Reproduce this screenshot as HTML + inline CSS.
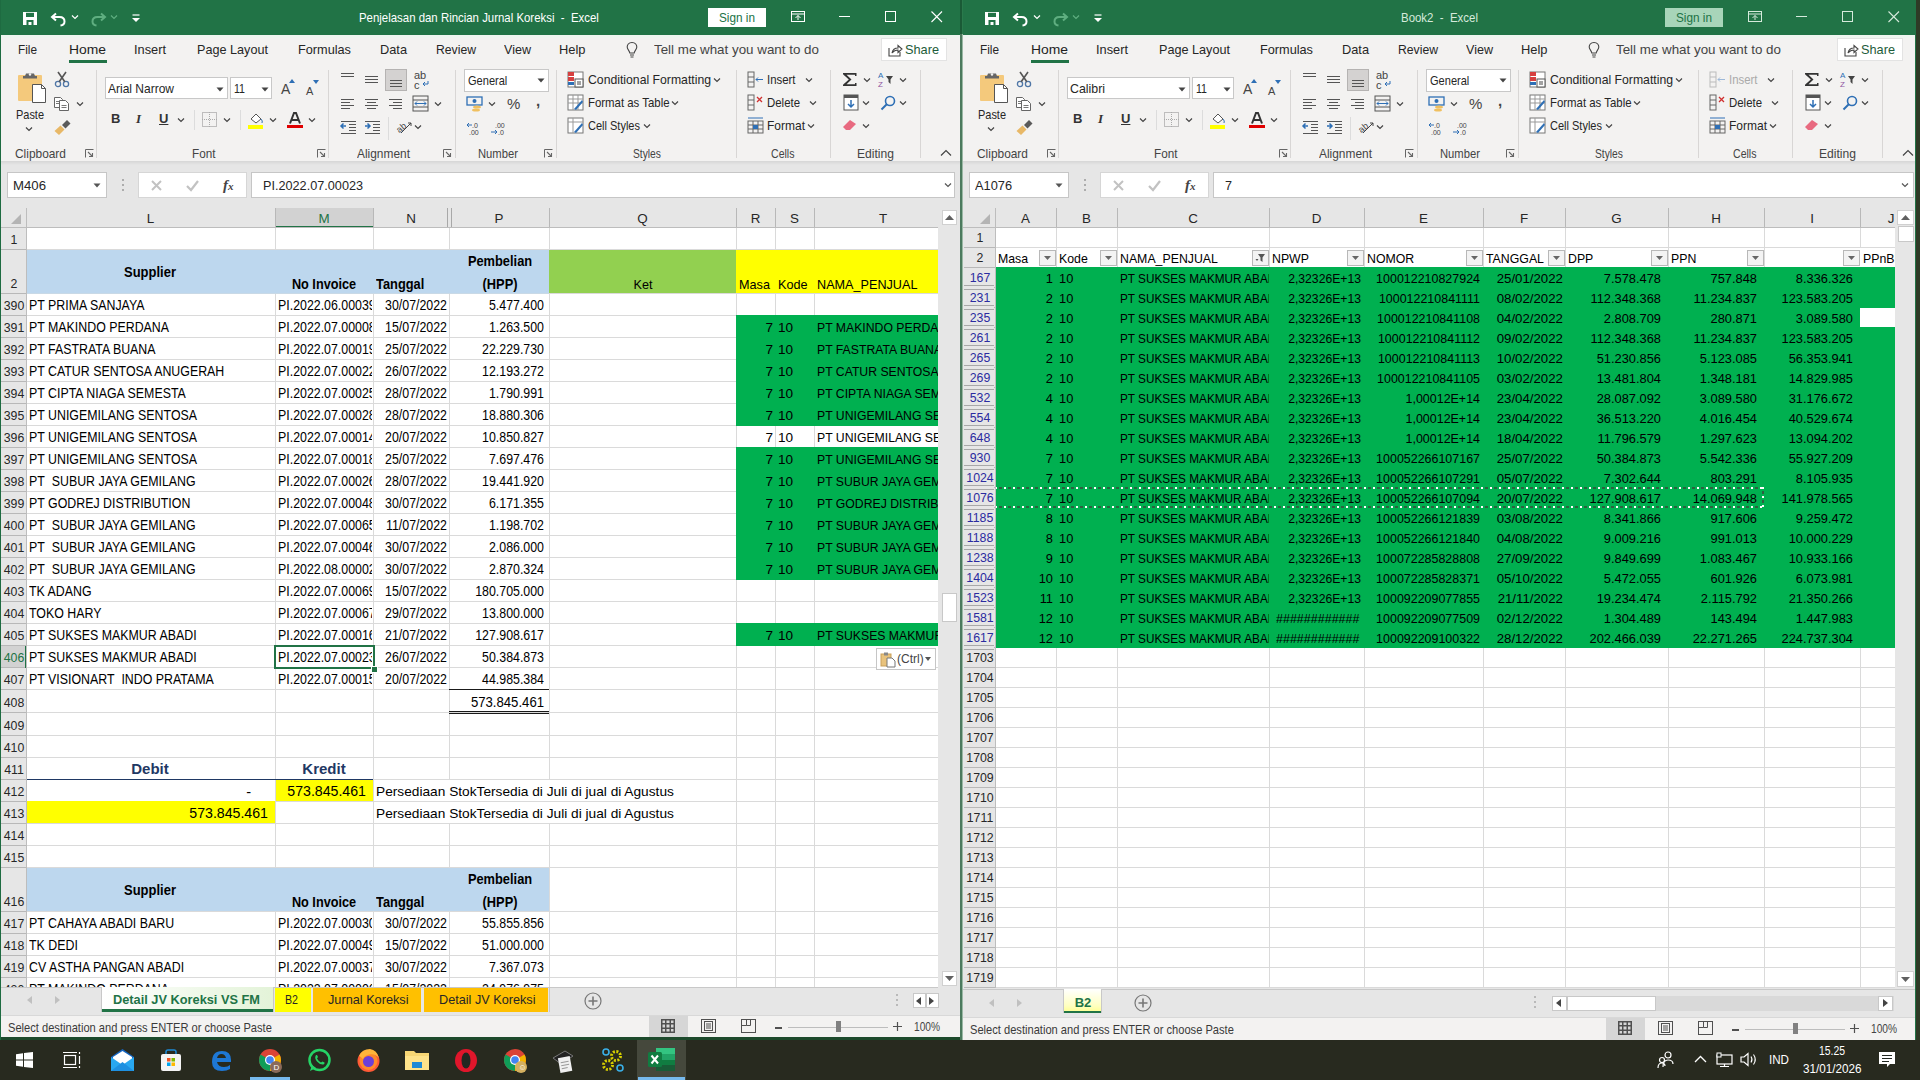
<!DOCTYPE html><html><head><meta charset="utf-8"><style>
html,body{margin:0;padding:0;}body{width:1920px;height:1080px;overflow:hidden;position:relative;background:#282a1f;font-family:"Liberation Sans",sans-serif;}
.a{position:absolute;white-space:nowrap;margin:0;}svg.a{overflow:visible;}
</style></head><body>
<div class="a" style="left:0px;top:0px;width:960px;height:1040px;background:#e6e6e6;"></div>
<div class="a" style="left:962px;top:0px;width:953px;height:1040px;background:#e6e6e6;"></div>
<div class="a" style="left:0px;top:0px;width:960px;height:35px;background:#217346;"></div>
<svg class="a" style="left:22px;top:11px;" width="16" height="15" viewBox="0 0 16 15"><path d="M1 1 H15 V14 H1Z" fill="#fff"/><path d="M4 1.8 H12 V6 H4Z" fill="#217346"/><path d="M4.5 9 H11.5 V14 H9.5 V11 H6.5 V14 H4.5Z" fill="#217346"/></svg>
<svg class="a" style="left:50px;top:11px;" width="17" height="15" viewBox="0 0 17 15"><path d="M6 2.5 L2 6 L6 9.5" stroke="#fff" stroke-width="2" fill="none"/><path d="M2.5 6 H9.5 Q14.5 6 14.5 10.5 Q14.5 14 10.5 14.5" stroke="#fff" stroke-width="2" fill="none"/></svg>
<svg class="a" style="left:71px;top:14px;" width="8" height="6" viewBox="0 0 8 6"><path d="M1 1.5 L4 4.5 L7 1.5" stroke="#fff" stroke-width="1.2" fill="none"/></svg>
<svg class="a" style="left:90px;top:11px;" width="17" height="15" viewBox="0 0 17 15"><path d="M11 2.5 L15 6 L11 9.5" stroke="#5fae80" stroke-width="2" fill="none"/><path d="M14.5 6 H7.5 Q2.5 6 2.5 10.5 Q2.5 14 6.5 14.5" stroke="#5fae80" stroke-width="2" fill="none"/></svg>
<svg class="a" style="left:110px;top:14px;" width="8" height="6" viewBox="0 0 8 6"><path d="M1 1.5 L4 4.5 L7 1.5" stroke="#5fae80" stroke-width="1.2" fill="none"/></svg>
<svg class="a" style="left:131px;top:14px;" width="10" height="9" viewBox="0 0 10 9"><path d="M1.5 1 H8.5" stroke="#fff" stroke-width="1.2"/><path d="M1 4 H9 L5 8Z" fill="#fff"/></svg>
<div class="a" style="top:7.50px;height:20px;line-height:20px;font-size:12.6px;color:#ffffff;left:359px;transform:scaleX(0.9066);transform-origin:0 50%;">Penjelasan dan Rincian Jurnal Koreksi&nbsp; -&nbsp; Excel</div>
<div class="a" style="left:708px;top:8px;width:58px;height:19px;background:#ffffff;"></div>
<div class="a" style="top:9.00px;height:18px;line-height:18px;font-size:13px;color:#217346;left:737px;transform-origin:0 50%;transform:scaleX(0.9057) translateX(-50%);">Sign in</div>
<svg class="a" style="left:790px;top:10px;" width="16" height="13" viewBox="0 0 16 13"><rect x="1.5" y="1.5" width="13" height="10" stroke="#ffffff" fill="none"/><path d="M1.5 4 H14.5" stroke="#ffffff"/><path d="M8 10 V5.5 M5.5 8 L8 5.5 L10.5 8" stroke="#ffffff" fill="none"/></svg>
<svg class="a" style="left:839px;top:16px;" width="12" height="2" viewBox="0 0 12 2"><rect x="0" y="0" width="11" height="1" fill="#ffffff"/></svg>
<svg class="a" style="left:885px;top:11px;" width="12" height="12" viewBox="0 0 12 12"><rect x="0.5" y="0.5" width="10" height="10" stroke="#ffffff" fill="none"/></svg>
<svg class="a" style="left:931px;top:11px;" width="12" height="12" viewBox="0 0 12 12"><path d="M0.5 0.5 L11 11 M11 0.5 L0.5 11" stroke="#ffffff" stroke-width="1.1"/></svg>
<div class="a" style="left:0px;top:35px;width:960px;height:126px;background:#F3F2F1;"></div>
<div class="a" style="left:0px;top:35px;width:960px;height:3px;background:#eef5f0;"></div>
<div class="a" style="top:40.30px;height:20px;line-height:20px;font-size:13.4px;color:#262626;left:18px;transform:scaleX(0.88);transform-origin:0 50%;">File</div>
<div class="a" style="top:40.30px;height:20px;line-height:20px;font-size:13.4px;color:#1e1e1e;left:68.5px;transform:scaleX(1.0352);transform-origin:0 50%;">Home</div>
<div class="a" style="top:40.30px;height:20px;line-height:20px;font-size:13.4px;color:#262626;left:134px;transform:scaleX(0.9549);transform-origin:0 50%;">Insert</div>
<div class="a" style="top:40.30px;height:20px;line-height:20px;font-size:13.4px;color:#262626;left:197px;transform:scaleX(0.9436);transform-origin:0 50%;">Page Layout</div>
<div class="a" style="top:40.30px;height:20px;line-height:20px;font-size:13.4px;color:#262626;left:298px;transform:scaleX(0.9491);transform-origin:0 50%;">Formulas</div>
<div class="a" style="top:40.30px;height:20px;line-height:20px;font-size:13.4px;color:#262626;left:380px;transform:scaleX(0.954);transform-origin:0 50%;">Data</div>
<div class="a" style="top:40.30px;height:20px;line-height:20px;font-size:13.4px;color:#262626;left:436px;transform:scaleX(0.9104);transform-origin:0 50%;">Review</div>
<div class="a" style="top:40.30px;height:20px;line-height:20px;font-size:13.4px;color:#262626;left:504px;transform:scaleX(0.9374);transform-origin:0 50%;">View</div>
<div class="a" style="top:40.30px;height:20px;line-height:20px;font-size:13.4px;color:#262626;left:559px;transform:scaleX(0.9616);transform-origin:0 50%;">Help</div>
<div class="a" style="left:69px;top:60px;width:38px;height:3px;background:#217346;"></div>
<svg class="a" style="left:626px;top:41px;" width="12" height="18" viewBox="0 0 12 18"><path d="M6 1.5 C2.5 1.5 1.2 4 1.2 6 C1.2 8.5 3.5 9.5 3.8 12 H8.2 C8.5 9.5 10.8 8.5 10.8 6 C10.8 4 9.5 1.5 6 1.5Z" stroke="#444" stroke-width="1.1" fill="none"/><path d="M4 14 H8 M4.5 16 H7.5" stroke="#444" stroke-width="1.1"/></svg>
<div class="a" style="top:40.30px;height:20px;line-height:20px;font-size:13.4px;color:#444;left:654px;transform:scaleX(0.9979);transform-origin:0 50%;">Tell me what you want to do</div>
<div class="a" style="left:881px;top:38px;width:66px;height:23px;background:#ffffff;border:1px solid #e3e3e3;box-sizing:border-box;"></div>
<svg class="a" style="left:887px;top:43px;" width="16" height="14" viewBox="0 0 16 14"><path d="M2 5 V13 H13 V9" stroke="#444" stroke-width="1.1" fill="none"/><path d="M5 10 Q6 5 11 5 V2.5 L15 6 L11 9.5 V7 Q7.5 7 5 10Z" stroke="#444" stroke-width="1.1" fill="none"/></svg>
<div class="a" style="top:40.30px;height:20px;line-height:20px;font-size:13.4px;color:#1d5c3a;left:905px;transform:scaleX(0.9509);transform-origin:0 50%;">Share</div>
<div class="a" style="left:96px;top:70px;width:1px;height:88px;background:#d8d6d5;"></div>
<div class="a" style="left:328px;top:70px;width:1px;height:88px;background:#d8d6d5;"></div>
<div class="a" style="left:455px;top:70px;width:1px;height:88px;background:#d8d6d5;"></div>
<div class="a" style="left:556px;top:70px;width:1px;height:88px;background:#d8d6d5;"></div>
<div class="a" style="left:736px;top:70px;width:1px;height:88px;background:#d8d6d5;"></div>
<div class="a" style="left:830px;top:70px;width:1px;height:88px;background:#d8d6d5;"></div>
<div class="a" style="left:920px;top:70px;width:1px;height:88px;background:#d8d6d5;"></div>
<div class="a" style="top:145.50px;height:16px;line-height:16px;font-size:12.2px;color:#444;left:15px;transform:scaleX(0.9767);transform-origin:0 50%;">Clipboard</div>
<div class="a" style="top:145.50px;height:16px;line-height:16px;font-size:12.2px;color:#444;left:192px;transform:scaleX(0.9627);transform-origin:0 50%;">Font</div>
<div class="a" style="top:145.50px;height:16px;line-height:16px;font-size:12.2px;color:#444;left:357px;transform:scaleX(0.977);transform-origin:0 50%;">Alignment</div>
<div class="a" style="top:145.50px;height:16px;line-height:16px;font-size:12.2px;color:#444;left:478px;transform:scaleX(0.9219);transform-origin:0 50%;">Number</div>
<div class="a" style="top:145.50px;height:16px;line-height:16px;font-size:12.2px;color:#444;left:632.5px;transform:scaleX(0.8428);transform-origin:0 50%;">Styles</div>
<div class="a" style="top:145.50px;height:16px;line-height:16px;font-size:12.2px;color:#444;left:771px;transform:scaleX(0.8666);transform-origin:0 50%;">Cells</div>
<div class="a" style="top:145.50px;height:16px;line-height:16px;font-size:12.2px;color:#444;left:857px;transform:scaleX(0.9919);transform-origin:0 50%;">Editing</div>
<svg class="a" style="left:85px;top:149px;" width="9" height="9" viewBox="0 0 9 9"><path d="M0.5 8.5 V0.5 H8.5" stroke="#666" stroke-width="1" fill="none"/><path d="M3 3 L7.5 7.5 M4 7.5 H7.5 V4" stroke="#666" stroke-width="1.1" fill="none"/></svg>
<svg class="a" style="left:317px;top:149px;" width="9" height="9" viewBox="0 0 9 9"><path d="M0.5 8.5 V0.5 H8.5" stroke="#666" stroke-width="1" fill="none"/><path d="M3 3 L7.5 7.5 M4 7.5 H7.5 V4" stroke="#666" stroke-width="1.1" fill="none"/></svg>
<svg class="a" style="left:443px;top:149px;" width="9" height="9" viewBox="0 0 9 9"><path d="M0.5 8.5 V0.5 H8.5" stroke="#666" stroke-width="1" fill="none"/><path d="M3 3 L7.5 7.5 M4 7.5 H7.5 V4" stroke="#666" stroke-width="1.1" fill="none"/></svg>
<svg class="a" style="left:544px;top:149px;" width="9" height="9" viewBox="0 0 9 9"><path d="M0.5 8.5 V0.5 H8.5" stroke="#666" stroke-width="1" fill="none"/><path d="M3 3 L7.5 7.5 M4 7.5 H7.5 V4" stroke="#666" stroke-width="1.1" fill="none"/></svg>
<svg class="a" style="left:940px;top:149px;" width="12" height="8" viewBox="0 0 12 8"><path d="M1 6.5 L6 1.5 L11 6.5" stroke="#444" stroke-width="1.2" fill="none"/></svg>
<svg class="a" style="left:17px;top:72px;" width="30" height="32" viewBox="0 0 30 32"><rect x="1" y="3" width="24" height="26" rx="1" fill="#f4c97c"/><path d="M9 1.5 H17 L18.5 5.5 H7.5Z" fill="#666"/><rect x="6" y="4" width="14" height="2.5" fill="#666"/><circle cx="13" cy="2.5" r="1.2" fill="#f3f2f1"/><path d="M15.5 12.5 H24.5 L28.5 16.5 V30.5 H15.5Z" fill="#fff" stroke="#555"/><path d="M24.5 12.5 V16.5 H28.5" fill="none" stroke="#555"/></svg>
<div class="a" style="top:107.00px;height:16px;line-height:16px;font-size:13px;color:#262626;left:16px;transform:scaleX(0.8423);transform-origin:0 50%;">Paste</div>
<svg class="a" style="left:25px;top:126px;" width="8" height="6" viewBox="0 0 8 6"><path d="M1 1.5 L4 4.5 L7 1.5" stroke="#444" stroke-width="1.2" fill="none"/></svg>
<svg class="a" style="left:54px;top:71px;" width="16" height="17" viewBox="0 0 16 17"><circle cx="4" cy="13" r="2.6" stroke="#4f76a6" stroke-width="1.3" fill="none"/><circle cx="12" cy="13" r="2.6" stroke="#4f76a6" stroke-width="1.3" fill="none"/><path d="M5.2 10.8 L12 1 M10.8 10.8 L4 1" stroke="#555" stroke-width="1.6"/></svg>
<svg class="a" style="left:53px;top:96px;" width="17" height="15" viewBox="0 0 17 15"><path d="M1.5 1.5 H7.5 L9.5 3.5 V11.5 H1.5Z" fill="#fff" stroke="#666"/><path d="M6.5 4.5 H12.5 L15.5 7.5 V14.5 H6.5Z" fill="#fff" stroke="#666"/><path d="M3 5.5 H6 M3 7.5 H6 M8.5 9.5 H13.5 M8.5 11.5 H13.5" stroke="#777"/></svg>
<svg class="a" style="left:76px;top:101px;" width="8" height="6" viewBox="0 0 8 6"><path d="M1 1.5 L4 4.5 L7 1.5" stroke="#444" stroke-width="1.2" fill="none"/></svg>
<svg class="a" style="left:53px;top:119px;" width="18" height="16" viewBox="0 0 18 16"><path d="M9 6 L14 1 L17.5 4.5 L12.5 9.5Z" fill="#5a5a5a"/><path d="M1.5 12 L7.5 6.5 L11.5 10.5 L6 16Z" fill="#e8b867"/></svg>
<div class="a" style="left:105px;top:77px;width:123px;height:22px;background:#fff;border:1px solid #c8c8c8;box-sizing:border-box;"></div>
<div class="a" style="top:80.00px;height:18px;line-height:18px;font-size:13px;color:#262626;left:108px;transform:scaleX(0.9229);transform-origin:0 50%;">Arial Narrow</div>
<svg class="a" style="left:216px;top:87px;" width="8" height="5" viewBox="0 0 8 5"><path d="M0.5 0.5 L7.5 0.5 L4 4.5Z" fill="#444"/></svg>
<div class="a" style="left:230px;top:77px;width:42px;height:22px;background:#fff;border:1px solid #c8c8c8;box-sizing:border-box;"></div>
<div class="a" style="top:80.00px;height:18px;line-height:18px;font-size:13px;color:#262626;left:234px;transform:scaleX(0.8152);transform-origin:0 50%;">11</div>
<svg class="a" style="left:261px;top:87px;" width="8" height="5" viewBox="0 0 8 5"><path d="M0.5 0.5 L7.5 0.5 L4 4.5Z" fill="#444"/></svg>
<div class="a" style="top:80.00px;height:18px;line-height:18px;font-size:14px;color:#444;left:281px;">A</div>
<svg class="a" style="left:289px;top:79px;" width="6" height="4" viewBox="0 0 6 4"><path d="M0 4 L3 0 L6 4Z" fill="#2e6fb5"/></svg>
<div class="a" style="top:83.00px;height:16px;line-height:16px;font-size:11px;color:#444;left:306px;">A</div>
<svg class="a" style="left:313px;top:80px;" width="6" height="4" viewBox="0 0 6 4"><path d="M0 0 L3 4 L6 0Z" fill="#2e6fb5"/></svg>
<div class="a" style="top:110.00px;height:18px;line-height:18px;font-size:13px;color:#333;font-weight:bold;left:111px;">B</div>
<div class="a" style="top:110.00px;height:18px;line-height:18px;font-size:13px;color:#333;left:136px;font-style:italic;font-family:Liberation Serif;font-weight:bold;">I</div>
<div class="a" style="top:110.00px;height:18px;line-height:18px;font-size:13px;color:#333;font-weight:bold;left:159px;text-decoration:underline;">U</div>
<svg class="a" style="left:177px;top:117px;" width="8" height="6" viewBox="0 0 8 6"><path d="M1 1.5 L4 4.5 L7 1.5" stroke="#444" stroke-width="1.2" fill="none"/></svg>
<div class="a" style="left:194px;top:110px;width:1px;height:20px;background:#dcdcdc;"></div>
<svg class="a" style="left:202px;top:112px;" width="15" height="15" viewBox="0 0 15 15"><rect x="0.5" y="0.5" width="14" height="14" fill="none" stroke="#888" stroke-dasharray="1 1"/><path d="M7.5 0 V15 M0 7.5 H15" stroke="#aaa" stroke-dasharray="1 1"/></svg>
<svg class="a" style="left:223px;top:117px;" width="8" height="6" viewBox="0 0 8 6"><path d="M1 1.5 L4 4.5 L7 1.5" stroke="#444" stroke-width="1.2" fill="none"/></svg>
<div class="a" style="left:240px;top:110px;width:1px;height:20px;background:#dcdcdc;"></div>
<svg class="a" style="left:247px;top:111px;" width="18" height="18" viewBox="0 0 18 18"><path d="M4 8 L9 3 L14 8 L9 12Z" fill="#fff" stroke="#555"/><path d="M14 8 Q16 10 15 12" stroke="#2e6fb5" fill="none"/><rect x="1" y="14" width="15" height="4" fill="#ffff00"/></svg>
<svg class="a" style="left:269px;top:117px;" width="8" height="6" viewBox="0 0 8 6"><path d="M1 1.5 L4 4.5 L7 1.5" stroke="#444" stroke-width="1.2" fill="none"/></svg>
<svg class="a" style="left:286px;top:111px;" width="18" height="18" viewBox="0 0 18 18"><path d="M4 12.5 L8 2 H10 L14 12.5 M6 9 H12" stroke="#333" stroke-width="2" fill="none"/><rect x="1" y="14" width="16" height="3" fill="#e00000"/></svg>
<svg class="a" style="left:308px;top:117px;" width="8" height="6" viewBox="0 0 8 6"><path d="M1 1.5 L4 4.5 L7 1.5" stroke="#444" stroke-width="1.2" fill="none"/></svg>
<svg class="a" style="left:340px;top:72px;" width="16" height="8" viewBox="0 0 16 8"><path d="M1 1.5 H14 M1 4.5 H14" stroke="#555"/></svg>
<svg class="a" style="left:364px;top:75px;" width="16" height="10" viewBox="0 0 16 10"><path d="M1 1.5 H14 M1 4.5 H14 M1 7.5 H14" stroke="#555"/></svg>
<div class="a" style="left:385px;top:69px;width:22px;height:22px;background:#d4d2d1;border:1px solid #b5b3b2;box-sizing:border-box;"></div>
<svg class="a" style="left:389px;top:79px;" width="14" height="10" viewBox="0 0 14 10"><path d="M1 1.5 H13 M1 4.5 H13 M1 7.5 H13" stroke="#555"/></svg>
<div class="a" style="top:69.00px;height:12px;line-height:12px;font-size:11px;color:#444;left:414px;">ab</div>
<div class="a" style="top:79.00px;height:12px;line-height:12px;font-size:11px;color:#444;left:414px;">c</div>
<svg class="a" style="left:422px;top:81px;" width="7" height="6" viewBox="0 0 7 6"><path d="M6 0 V3 H1 M3 1 L1 3 L3 5" stroke="#2e6fb5" fill="none"/></svg>
<svg class="a" style="left:340px;top:98px;" width="16" height="12" viewBox="0 0 16 12"><path d="M1 1.5 H14 M1 4.5 H10 M1 7.5 H14 M1 10.5 H10" stroke="#555"/></svg>
<svg class="a" style="left:364px;top:98px;" width="16" height="12" viewBox="0 0 16 12"><path d="M1 1.5 H14 M3 4.5 H12 M1 7.5 H14 M3 10.5 H12" stroke="#555"/></svg>
<svg class="a" style="left:388px;top:98px;" width="16" height="12" viewBox="0 0 16 12"><path d="M1 1.5 H14 M5 4.5 H14 M1 7.5 H14 M5 10.5 H14" stroke="#555"/></svg>
<svg class="a" style="left:412px;top:95px;" width="17" height="17" viewBox="0 0 17 17"><rect x="1" y="1" width="15" height="15" fill="none" stroke="#555"/><path d="M1 5 H16 M1 12 H16" stroke="#555"/><path d="M3 8.5 H14 M5 6.5 L3 8.5 L5 10.5 M12 6.5 L14 8.5 L12 10.5" stroke="#2e6fb5" fill="none"/></svg>
<svg class="a" style="left:434px;top:101px;" width="8" height="6" viewBox="0 0 8 6"><path d="M1 1.5 L4 4.5 L7 1.5" stroke="#444" stroke-width="1.2" fill="none"/></svg>
<svg class="a" style="left:340px;top:120px;" width="17" height="14" viewBox="0 0 17 14"><path d="M1 1.5 H16 M9 4.5 H16 M9 7.5 H16 M9 10.5 H16 M1 13.5 H16" stroke="#555"/><path d="M6 6 H1 M3.5 3.5 L1 6 L3.5 8.5" stroke="#2e6fb5" stroke-width="1.5" fill="none"/></svg>
<svg class="a" style="left:364px;top:120px;" width="17" height="14" viewBox="0 0 17 14"><path d="M1 1.5 H16 M9 4.5 H16 M9 7.5 H16 M9 10.5 H16 M1 13.5 H16" stroke="#555"/><path d="M1 6 H6 M3.5 3.5 L6 6 L3.5 8.5" stroke="#2e6fb5" stroke-width="1.5" fill="none"/></svg>
<div class="a" style="left:388px;top:117px;width:1px;height:23px;background:#dcdcdc;"></div>
<svg class="a" style="left:396px;top:119px;" width="18" height="15" viewBox="0 0 18 15"><text x="0" y="11" font-size="9" fill="#444" transform="rotate(-40 6 8)" font-family="Liberation Sans">ab</text><path d="M5 14 L15 4 M12 4 H15 V7" stroke="#444" fill="none"/></svg>
<svg class="a" style="left:414px;top:124px;" width="8" height="6" viewBox="0 0 8 6"><path d="M1 1.5 L4 4.5 L7 1.5" stroke="#444" stroke-width="1.2" fill="none"/></svg>
<div class="a" style="left:464px;top:69px;width:85px;height:23px;background:#fff;border:1px solid #c8c8c8;box-sizing:border-box;"></div>
<div class="a" style="top:72.00px;height:18px;line-height:18px;font-size:13px;color:#262626;left:467.5px;transform:scaleX(0.8498);transform-origin:0 50%;">General</div>
<svg class="a" style="left:537px;top:78px;" width="8" height="5" viewBox="0 0 8 5"><path d="M0.5 0.5 L7.5 0.5 L4 4.5Z" fill="#444"/></svg>
<svg class="a" style="left:466px;top:96px;" width="17" height="16" viewBox="0 0 17 16"><rect x="1" y="1" width="15" height="8" fill="none" stroke="#2e6fb5" stroke-width="1.3"/><circle cx="8.5" cy="5" r="2" fill="#2e6fb5"/><ellipse cx="11" cy="11" rx="4" ry="1.6" fill="#f0c060"/><ellipse cx="10" cy="14" rx="4" ry="1.6" fill="#f0c060"/></svg>
<svg class="a" style="left:488px;top:101px;" width="8" height="6" viewBox="0 0 8 6"><path d="M1 1.5 L4 4.5 L7 1.5" stroke="#444" stroke-width="1.2" fill="none"/></svg>
<div class="a" style="top:95.00px;height:18px;line-height:18px;font-size:15px;color:#444;left:507px;">%</div>
<div class="a" style="top:92.00px;height:18px;line-height:18px;font-size:15px;color:#444;font-weight:bold;left:536px;">,</div>
<svg class="a" style="left:466px;top:121px;" width="18" height="14" viewBox="0 0 18 14"><text x="6" y="6.5" font-size="7" fill="#444" font-family="Liberation Sans">.0</text><text x="3" y="13.5" font-size="7" fill="#444" font-family="Liberation Sans">.00</text><path d="M6 4 H1 M3 2 L1 4 L3 6" stroke="#2e6fb5" fill="none"/></svg>
<svg class="a" style="left:490px;top:121px;" width="18" height="14" viewBox="0 0 18 14"><text x="5" y="6.5" font-size="7" fill="#444" font-family="Liberation Sans">.00</text><text x="8" y="13.5" font-size="7" fill="#444" font-family="Liberation Sans">.0</text><path d="M1 11 H7 M5 9 L7 11 L5 13" stroke="#2e6fb5" fill="none"/></svg>
<svg class="a" style="left:567px;top:71px;" width="17" height="17" viewBox="0 0 17 17"><rect x="1" y="1" width="15" height="15" fill="#fff" stroke="#777"/><rect x="1" y="1" width="6" height="4" fill="#d64040"/><rect x="1" y="6" width="6" height="4" fill="#d64040"/><rect x="1" y="11" width="6" height="3" fill="#2e6fb5"/><rect x="8" y="8" width="8" height="8" fill="#fff" stroke="#555"/><path d="M10 11 H14 M10 13 H14" stroke="#444"/></svg>
<div class="a" style="top:71.00px;height:18px;line-height:18px;font-size:13px;color:#262626;left:587.5px;transform:scaleX(0.9405);transform-origin:0 50%;">Conditional Formatting</div>
<svg class="a" style="left:713px;top:77px;" width="8" height="6" viewBox="0 0 8 6"><path d="M1 1.5 L4 4.5 L7 1.5" stroke="#444" stroke-width="1.2" fill="none"/></svg>
<svg class="a" style="left:567px;top:94px;" width="17" height="17" viewBox="0 0 17 17"><rect x="1" y="1" width="15" height="15" fill="#fff" stroke="#777"/><path d="M1 5 H16 M1 9 H16 M6 1 V16 M11 1 V16" stroke="#999"/><path d="M7 15 L15 6 L16 8 L9 16Z" fill="#2e6fb5"/></svg>
<div class="a" style="top:94.00px;height:18px;line-height:18px;font-size:13px;color:#262626;left:587.5px;transform:scaleX(0.8767);transform-origin:0 50%;">Format as Table</div>
<svg class="a" style="left:671px;top:100px;" width="8" height="6" viewBox="0 0 8 6"><path d="M1 1.5 L4 4.5 L7 1.5" stroke="#444" stroke-width="1.2" fill="none"/></svg>
<svg class="a" style="left:567px;top:117px;" width="17" height="17" viewBox="0 0 17 17"><rect x="1" y="1" width="15" height="15" fill="#fff" stroke="#777"/><path d="M1 5 H16 M6 1 V16" stroke="#999"/><path d="M7 15 L15 6 L16 8 L9 16Z" fill="#2e6fb5"/></svg>
<div class="a" style="top:117.00px;height:18px;line-height:18px;font-size:13px;color:#262626;left:587.5px;transform:scaleX(0.8468);transform-origin:0 50%;">Cell Styles</div>
<svg class="a" style="left:643px;top:123px;" width="8" height="6" viewBox="0 0 8 6"><path d="M1 1.5 L4 4.5 L7 1.5" stroke="#444" stroke-width="1.2" fill="none"/></svg>
<svg class="a" style="left:747px;top:71px;" width="17" height="17" viewBox="0 0 17 17"><rect x="1" y="1" width="6" height="15" fill="none" stroke="#666"/><path d="M1 6 H7 M1 11 H7" stroke="#666"/><path d="M9 8.5 H16 M11 6.5 L9 8.5 L11 10.5" stroke="#2e6fb5" fill="none"/></svg>
<div class="a" style="top:71.00px;height:18px;line-height:18px;font-size:13px;color:#262626;left:767px;transform:scaleX(0.8766);transform-origin:0 50%;">Insert</div>
<svg class="a" style="left:805px;top:77px;" width="8" height="6" viewBox="0 0 8 6"><path d="M1 1.5 L4 4.5 L7 1.5" stroke="#444" stroke-width="1.2" fill="none"/></svg>
<svg class="a" style="left:747px;top:94px;" width="17" height="17" viewBox="0 0 17 17"><rect x="1" y="1" width="6" height="15" fill="none" stroke="#666"/><path d="M1 6 H7 M1 11 H7" stroke="#666"/><path d="M10 3 L15 8 M15 3 L10 8" stroke="#d03030" stroke-width="1.3"/></svg>
<div class="a" style="top:94.00px;height:18px;line-height:18px;font-size:13px;color:#262626;left:767px;transform:scaleX(0.8782);transform-origin:0 50%;">Delete</div>
<svg class="a" style="left:809px;top:100px;" width="8" height="6" viewBox="0 0 8 6"><path d="M1 1.5 L4 4.5 L7 1.5" stroke="#444" stroke-width="1.2" fill="none"/></svg>
<svg class="a" style="left:747px;top:117px;" width="17" height="17" viewBox="0 0 17 17"><rect x="1" y="4" width="15" height="12" fill="none" stroke="#666"/><path d="M1 8 H16 M1 12 H16 M6 4 V16 M11 4 V16" stroke="#666"/><rect x="6" y="8" width="5" height="4" fill="#2e6fb5"/><path d="M1 1 H16" stroke="#2e6fb5"/></svg>
<div class="a" style="top:117.00px;height:18px;line-height:18px;font-size:13px;color:#262626;left:767px;transform:scaleX(0.9231);transform-origin:0 50%;">Format</div>
<svg class="a" style="left:807px;top:123px;" width="8" height="6" viewBox="0 0 8 6"><path d="M1 1.5 L4 4.5 L7 1.5" stroke="#444" stroke-width="1.2" fill="none"/></svg>
<svg class="a" style="left:842px;top:72px;" width="16" height="15" viewBox="0 0 16 15"><path d="M1 1 H14.5 V4 H13 V2.8 H4.5 L9.5 7.5 L4.5 12.2 H13 V11 H14.5 V14 H1 V12.8 L6.8 7.5 L1 2.2Z" fill="#333"/></svg>
<svg class="a" style="left:863px;top:77px;" width="8" height="6" viewBox="0 0 8 6"><path d="M1 1.5 L4 4.5 L7 1.5" stroke="#444" stroke-width="1.2" fill="none"/></svg>
<svg class="a" style="left:877px;top:70px;" width="19" height="19" viewBox="0 0 19 19"><text x="1" y="8" font-size="8" fill="#2e6fb5" font-family="Liberation Sans">A</text><text x="1" y="17" font-size="8" fill="#9055a0" font-family="Liberation Sans">Z</text><path d="M9 6 H16 L13.5 9.5 V14 L11.5 12 V9.5Z" fill="#444"/></svg>
<svg class="a" style="left:899px;top:77px;" width="8" height="6" viewBox="0 0 8 6"><path d="M1 1.5 L4 4.5 L7 1.5" stroke="#444" stroke-width="1.2" fill="none"/></svg>
<svg class="a" style="left:843px;top:94px;" width="16" height="17" viewBox="0 0 16 17"><rect x="1" y="1" width="14" height="15" fill="#fff" stroke="#555"/><rect x="1" y="1" width="14" height="3" fill="#555"/><path d="M8 6 V13 M5 10 L8 13 L11 10" stroke="#2e6fb5" stroke-width="1.5" fill="none"/></svg>
<svg class="a" style="left:862px;top:100px;" width="8" height="6" viewBox="0 0 8 6"><path d="M1 1.5 L4 4.5 L7 1.5" stroke="#444" stroke-width="1.2" fill="none"/></svg>
<svg class="a" style="left:880px;top:95px;" width="16" height="16" viewBox="0 0 16 16"><circle cx="10" cy="6" r="4.5" stroke="#2e6fb5" stroke-width="1.6" fill="none"/><path d="M7 9 L1.5 14.5" stroke="#2e6fb5" stroke-width="2"/></svg>
<svg class="a" style="left:899px;top:100px;" width="8" height="6" viewBox="0 0 8 6"><path d="M1 1.5 L4 4.5 L7 1.5" stroke="#444" stroke-width="1.2" fill="none"/></svg>
<svg class="a" style="left:842px;top:118px;" width="16" height="13" viewBox="0 0 16 13"><path d="M1 9 L8 2 L14 6 L8 12 H4Z" fill="#e86a80"/></svg>
<svg class="a" style="left:862px;top:123px;" width="8" height="6" viewBox="0 0 8 6"><path d="M1 1.5 L4 4.5 L7 1.5" stroke="#444" stroke-width="1.2" fill="none"/></svg>
<div class="a" style="left:0px;top:161px;width:960px;height:47px;background:#e6e6e6;"></div>
<div class="a" style="left:0px;top:161px;width:960px;height:4px;background:linear-gradient(#d6d6d6,#e6e6e6);"></div>
<div class="a" style="left:7px;top:172px;width:100px;height:26px;background:#fff;border:1px solid #c6c6c6;box-sizing:border-box;"></div>
<div class="a" style="top:177.00px;height:18px;line-height:18px;font-size:13px;color:#262626;left:13px;transform:scaleX(1.0149);transform-origin:0 50%;">M406</div>
<svg class="a" style="left:93px;top:183px;" width="8" height="5" viewBox="0 0 8 5"><path d="M0.5 0.5 L7.5 0.5 L4 4.5Z" fill="#555"/></svg>
<svg class="a" style="left:121px;top:178px;" width="4" height="16" viewBox="0 0 4 16"><circle cx="2" cy="2" r="1" fill="#999"/><circle cx="2" cy="7" r="1" fill="#999"/><circle cx="2" cy="12" r="1" fill="#999"/></svg>
<div class="a" style="left:138px;top:172px;width:109px;height:26px;background:#fff;border:1px solid #d6d6d6;box-sizing:border-box;"></div>
<svg class="a" style="left:151px;top:180px;" width="11" height="11" viewBox="0 0 11 11"><path d="M1 1 L10 10 M10 1 L1 10" stroke="#c2c2c2" stroke-width="2"/></svg>
<svg class="a" style="left:186px;top:180px;" width="13" height="11" viewBox="0 0 13 11"><path d="M1 6 L5 10 L12 1" stroke="#c2c2c2" stroke-width="2.2" fill="none"/></svg>
<div class="a" style="top:176.00px;height:18px;line-height:18px;font-size:15px;color:#444;font-family:Liberation Serif;left:223px;"><b><i>f</i><span style="font-size:11px"><i>x</i></span></b></div>
<div class="a" style="left:251px;top:172px;width:704px;height:26px;background:#fff;border:1px solid #c6c6c6;box-sizing:border-box;"></div>
<div class="a" style="top:177.00px;height:18px;line-height:18px;font-size:13px;color:#262626;left:263px;transform:scaleX(0.9743);transform-origin:0 50%;">PI.2022.07.00023</div>
<svg class="a" style="left:944px;top:182px;" width="8" height="6" viewBox="0 0 8 6"><path d="M1 1.5 L4 4.5 L7 1.5" stroke="#555" stroke-width="1.2" fill="none"/></svg>
<div class="a" style="left:26px;top:228px;width:912px;height:759px;background:#ffffff;"></div>
<div class="a" style="left:26px;top:249px;width:912px;height:1px;background:#dadada;"></div>
<div class="a" style="left:26px;top:293px;width:912px;height:1px;background:#dadada;"></div>
<div class="a" style="left:26px;top:315px;width:912px;height:1px;background:#dadada;"></div>
<div class="a" style="left:26px;top:337px;width:912px;height:1px;background:#dadada;"></div>
<div class="a" style="left:26px;top:359px;width:912px;height:1px;background:#dadada;"></div>
<div class="a" style="left:26px;top:381px;width:912px;height:1px;background:#dadada;"></div>
<div class="a" style="left:26px;top:403px;width:912px;height:1px;background:#dadada;"></div>
<div class="a" style="left:26px;top:425px;width:912px;height:1px;background:#dadada;"></div>
<div class="a" style="left:26px;top:447px;width:912px;height:1px;background:#dadada;"></div>
<div class="a" style="left:26px;top:469px;width:912px;height:1px;background:#dadada;"></div>
<div class="a" style="left:26px;top:491px;width:912px;height:1px;background:#dadada;"></div>
<div class="a" style="left:26px;top:513px;width:912px;height:1px;background:#dadada;"></div>
<div class="a" style="left:26px;top:535px;width:912px;height:1px;background:#dadada;"></div>
<div class="a" style="left:26px;top:557px;width:912px;height:1px;background:#dadada;"></div>
<div class="a" style="left:26px;top:579px;width:912px;height:1px;background:#dadada;"></div>
<div class="a" style="left:26px;top:601px;width:912px;height:1px;background:#dadada;"></div>
<div class="a" style="left:26px;top:623px;width:912px;height:1px;background:#dadada;"></div>
<div class="a" style="left:26px;top:645px;width:912px;height:1px;background:#dadada;"></div>
<div class="a" style="left:26px;top:667px;width:912px;height:1px;background:#dadada;"></div>
<div class="a" style="left:26px;top:689px;width:912px;height:1px;background:#dadada;"></div>
<div class="a" style="left:26px;top:712px;width:912px;height:1px;background:#dadada;"></div>
<div class="a" style="left:26px;top:735px;width:912px;height:1px;background:#dadada;"></div>
<div class="a" style="left:26px;top:757px;width:912px;height:1px;background:#dadada;"></div>
<div class="a" style="left:26px;top:779px;width:912px;height:1px;background:#dadada;"></div>
<div class="a" style="left:26px;top:801px;width:912px;height:1px;background:#dadada;"></div>
<div class="a" style="left:26px;top:823px;width:912px;height:1px;background:#dadada;"></div>
<div class="a" style="left:26px;top:845px;width:912px;height:1px;background:#dadada;"></div>
<div class="a" style="left:26px;top:867px;width:912px;height:1px;background:#dadada;"></div>
<div class="a" style="left:26px;top:911px;width:912px;height:1px;background:#dadada;"></div>
<div class="a" style="left:26px;top:933px;width:912px;height:1px;background:#dadada;"></div>
<div class="a" style="left:26px;top:955px;width:912px;height:1px;background:#dadada;"></div>
<div class="a" style="left:26px;top:977px;width:912px;height:1px;background:#dadada;"></div>
<div class="a" style="left:26px;top:999px;width:912px;height:1px;background:#dadada;"></div>
<div class="a" style="left:275px;top:228px;width:1px;height:759px;background:#dadada;"></div>
<div class="a" style="left:373px;top:228px;width:1px;height:759px;background:#dadada;"></div>
<div class="a" style="left:449px;top:228px;width:1px;height:759px;background:#dadada;"></div>
<div class="a" style="left:549px;top:228px;width:1px;height:759px;background:#dadada;"></div>
<div class="a" style="left:736px;top:228px;width:1px;height:759px;background:#dadada;"></div>
<div class="a" style="left:775px;top:228px;width:1px;height:759px;background:#dadada;"></div>
<div class="a" style="left:814px;top:228px;width:1px;height:759px;background:#dadada;"></div>
<div class="a" style="left:938px;top:228px;width:1px;height:759px;background:#dadada;"></div>
<div class="a" style="left:27px;top:250px;width:522px;height:43px;background:#bdd7ee;"></div>
<div class="a" style="left:549px;top:250px;width:187px;height:43px;background:#92d050;"></div>
<div class="a" style="left:736px;top:250px;width:202px;height:43px;background:#ffff00;"></div>
<div class="a" style="left:26px;top:293px;width:523px;height:1px;background:#c9d9e6;"></div>
<div class="a" style="left:736px;top:315px;width:202px;height:23px;background:#00b050;"></div>
<div class="a" style="left:736px;top:337px;width:202px;height:23px;background:#00b050;"></div>
<div class="a" style="left:736px;top:359px;width:202px;height:23px;background:#00b050;"></div>
<div class="a" style="left:736px;top:381px;width:202px;height:23px;background:#00b050;"></div>
<div class="a" style="left:736px;top:403px;width:202px;height:23px;background:#00b050;"></div>
<div class="a" style="left:736px;top:447px;width:202px;height:23px;background:#00b050;"></div>
<div class="a" style="left:736px;top:469px;width:202px;height:23px;background:#00b050;"></div>
<div class="a" style="left:736px;top:491px;width:202px;height:23px;background:#00b050;"></div>
<div class="a" style="left:736px;top:513px;width:202px;height:23px;background:#00b050;"></div>
<div class="a" style="left:736px;top:535px;width:202px;height:23px;background:#00b050;"></div>
<div class="a" style="left:736px;top:557px;width:202px;height:23px;background:#00b050;"></div>
<div class="a" style="left:736px;top:623px;width:202px;height:23px;background:#00b050;"></div>
<div class="a" style="left:374px;top:780px;width:362px;height:21px;background:#ffffff;"></div>
<div class="a" style="left:374px;top:802px;width:362px;height:21px;background:#ffffff;"></div>
<div class="a" style="left:276px;top:780px;width:97px;height:21px;background:#ffff00;"></div>
<div class="a" style="left:27px;top:801px;width:248px;height:22px;background:#ffff00;"></div>
<div class="a" style="left:27px;top:868px;width:522px;height:43px;background:#bdd7ee;"></div>
<div class="a" style="left:0;top:228px;width:938px;height:759px;overflow:hidden;">
<div class="a" style="left:0;top:-228px;width:938px;height:1080px;">
<div class="a" style="top:262.00px;height:20px;line-height:20px;font-size:14.6px;color:#000000;font-weight:bold;left:150px;transform-origin:0 50%;transform:scaleX(0.89) translateX(-50%);">Supplier</div>
<div class="a" style="top:273.50px;height:20px;line-height:20px;font-size:14.6px;color:#000000;font-weight:bold;left:324px;transform-origin:0 50%;transform:scaleX(0.87) translateX(-50%);">No Invoice</div>
<div class="a" style="top:273.50px;height:20px;line-height:20px;font-size:14.6px;color:#000000;font-weight:bold;left:376px;transform:scaleX(0.88);transform-origin:0 50%;">Tanggal</div>
<div class="a" style="top:251.00px;height:20px;line-height:20px;font-size:14.6px;color:#000000;font-weight:bold;left:500px;transform-origin:0 50%;transform:scaleX(0.88) translateX(-50%);">Pembelian</div>
<div class="a" style="top:273.50px;height:20px;line-height:20px;font-size:14.6px;color:#000000;font-weight:bold;left:500px;transform-origin:0 50%;transform:scaleX(0.88) translateX(-50%);">(HPP)</div>
<div class="a" style="top:275.00px;height:20px;line-height:20px;font-size:13.6px;color:#000000;left:643px;transform-origin:0 50%;transform:scaleX(0.93) translateX(-50%);">Ket</div>
<div class="a" style="top:275.00px;height:20px;line-height:20px;font-size:13.6px;color:#000000;left:739px;transform:scaleX(0.93);transform-origin:0 50%;">Masa</div>
<div class="a" style="top:275.00px;height:20px;line-height:20px;font-size:13.6px;color:#000000;left:778px;transform:scaleX(0.93);transform-origin:0 50%;">Kode</div>
<div class="a" style="top:275.00px;height:20px;line-height:20px;font-size:13.6px;color:#000000;left:817px;transform:scaleX(0.93);transform-origin:0 50%;">NAMA_PENJUAL</div>
<div class="a" style="top:295.00px;height:20px;line-height:20px;font-size:14.6px;color:#000000;left:29px;transform:scaleX(0.848);transform-origin:0 50%;">PT PRIMA SANJAYA</div>
<div class="a" style="left:275px;top:294px;width:97px;height:22px;overflow:hidden;">
<div class="a" style="left:3px;top:0;height:22px;line-height:22px;font-size:14.6px;color:#000000;transform:scaleX(0.848);transform-origin:0 50%;">PI.2022.06.00039</div></div>
<div class="a" style="top:295.00px;height:20px;line-height:20px;font-size:14.6px;color:#000000;left:446.5px;transform-origin:0 50%;transform:scaleX(0.848) translateX(-100%);">30/07/2022</div>
<div class="a" style="top:295.00px;height:20px;line-height:20px;font-size:14.6px;color:#000000;left:543.5px;transform-origin:0 50%;transform:scaleX(0.848) translateX(-100%);">5.477.400</div>
<div class="a" style="top:317.00px;height:20px;line-height:20px;font-size:14.6px;color:#000000;left:29px;transform:scaleX(0.848);transform-origin:0 50%;">PT MAKINDO PERDANA</div>
<div class="a" style="left:275px;top:316px;width:97px;height:22px;overflow:hidden;">
<div class="a" style="left:3px;top:0;height:22px;line-height:22px;font-size:14.6px;color:#000000;transform:scaleX(0.848);transform-origin:0 50%;">PI.2022.07.00008</div></div>
<div class="a" style="top:317.00px;height:20px;line-height:20px;font-size:14.6px;color:#000000;left:446.5px;transform-origin:0 50%;transform:scaleX(0.848) translateX(-100%);">15/07/2022</div>
<div class="a" style="top:317.00px;height:20px;line-height:20px;font-size:14.6px;color:#000000;left:543.5px;transform-origin:0 50%;transform:scaleX(0.848) translateX(-100%);">1.263.500</div>
<div class="a" style="top:339.00px;height:20px;line-height:20px;font-size:14.6px;color:#000000;left:29px;transform:scaleX(0.848);transform-origin:0 50%;">PT FASTRATA BUANA</div>
<div class="a" style="left:275px;top:338px;width:97px;height:22px;overflow:hidden;">
<div class="a" style="left:3px;top:0;height:22px;line-height:22px;font-size:14.6px;color:#000000;transform:scaleX(0.848);transform-origin:0 50%;">PI.2022.07.00019</div></div>
<div class="a" style="top:339.00px;height:20px;line-height:20px;font-size:14.6px;color:#000000;left:446.5px;transform-origin:0 50%;transform:scaleX(0.848) translateX(-100%);">25/07/2022</div>
<div class="a" style="top:339.00px;height:20px;line-height:20px;font-size:14.6px;color:#000000;left:543.5px;transform-origin:0 50%;transform:scaleX(0.848) translateX(-100%);">22.229.730</div>
<div class="a" style="top:361.00px;height:20px;line-height:20px;font-size:14.6px;color:#000000;left:29px;transform:scaleX(0.848);transform-origin:0 50%;">PT CATUR SENTOSA ANUGERAH</div>
<div class="a" style="left:275px;top:360px;width:97px;height:22px;overflow:hidden;">
<div class="a" style="left:3px;top:0;height:22px;line-height:22px;font-size:14.6px;color:#000000;transform:scaleX(0.848);transform-origin:0 50%;">PI.2022.07.00022</div></div>
<div class="a" style="top:361.00px;height:20px;line-height:20px;font-size:14.6px;color:#000000;left:446.5px;transform-origin:0 50%;transform:scaleX(0.848) translateX(-100%);">26/07/2022</div>
<div class="a" style="top:361.00px;height:20px;line-height:20px;font-size:14.6px;color:#000000;left:543.5px;transform-origin:0 50%;transform:scaleX(0.848) translateX(-100%);">12.193.272</div>
<div class="a" style="top:383.00px;height:20px;line-height:20px;font-size:14.6px;color:#000000;left:29px;transform:scaleX(0.848);transform-origin:0 50%;">PT CIPTA NIAGA SEMESTA</div>
<div class="a" style="left:275px;top:382px;width:97px;height:22px;overflow:hidden;">
<div class="a" style="left:3px;top:0;height:22px;line-height:22px;font-size:14.6px;color:#000000;transform:scaleX(0.848);transform-origin:0 50%;">PI.2022.07.00025</div></div>
<div class="a" style="top:383.00px;height:20px;line-height:20px;font-size:14.6px;color:#000000;left:446.5px;transform-origin:0 50%;transform:scaleX(0.848) translateX(-100%);">28/07/2022</div>
<div class="a" style="top:383.00px;height:20px;line-height:20px;font-size:14.6px;color:#000000;left:543.5px;transform-origin:0 50%;transform:scaleX(0.848) translateX(-100%);">1.790.991</div>
<div class="a" style="top:405.00px;height:20px;line-height:20px;font-size:14.6px;color:#000000;left:29px;transform:scaleX(0.848);transform-origin:0 50%;">PT UNIGEMILANG SENTOSA</div>
<div class="a" style="left:275px;top:404px;width:97px;height:22px;overflow:hidden;">
<div class="a" style="left:3px;top:0;height:22px;line-height:22px;font-size:14.6px;color:#000000;transform:scaleX(0.848);transform-origin:0 50%;">PI.2022.07.00028</div></div>
<div class="a" style="top:405.00px;height:20px;line-height:20px;font-size:14.6px;color:#000000;left:446.5px;transform-origin:0 50%;transform:scaleX(0.848) translateX(-100%);">28/07/2022</div>
<div class="a" style="top:405.00px;height:20px;line-height:20px;font-size:14.6px;color:#000000;left:543.5px;transform-origin:0 50%;transform:scaleX(0.848) translateX(-100%);">18.880.306</div>
<div class="a" style="top:427.00px;height:20px;line-height:20px;font-size:14.6px;color:#000000;left:29px;transform:scaleX(0.848);transform-origin:0 50%;">PT UNIGEMILANG SENTOSA</div>
<div class="a" style="left:275px;top:426px;width:97px;height:22px;overflow:hidden;">
<div class="a" style="left:3px;top:0;height:22px;line-height:22px;font-size:14.6px;color:#000000;transform:scaleX(0.848);transform-origin:0 50%;">PI.2022.07.00014</div></div>
<div class="a" style="top:427.00px;height:20px;line-height:20px;font-size:14.6px;color:#000000;left:446.5px;transform-origin:0 50%;transform:scaleX(0.848) translateX(-100%);">20/07/2022</div>
<div class="a" style="top:427.00px;height:20px;line-height:20px;font-size:14.6px;color:#000000;left:543.5px;transform-origin:0 50%;transform:scaleX(0.848) translateX(-100%);">10.850.827</div>
<div class="a" style="top:449.00px;height:20px;line-height:20px;font-size:14.6px;color:#000000;left:29px;transform:scaleX(0.848);transform-origin:0 50%;">PT UNIGEMILANG SENTOSA</div>
<div class="a" style="left:275px;top:448px;width:97px;height:22px;overflow:hidden;">
<div class="a" style="left:3px;top:0;height:22px;line-height:22px;font-size:14.6px;color:#000000;transform:scaleX(0.848);transform-origin:0 50%;">PI.2022.07.00018</div></div>
<div class="a" style="top:449.00px;height:20px;line-height:20px;font-size:14.6px;color:#000000;left:446.5px;transform-origin:0 50%;transform:scaleX(0.848) translateX(-100%);">25/07/2022</div>
<div class="a" style="top:449.00px;height:20px;line-height:20px;font-size:14.6px;color:#000000;left:543.5px;transform-origin:0 50%;transform:scaleX(0.848) translateX(-100%);">7.697.476</div>
<div class="a" style="top:471.00px;height:20px;line-height:20px;font-size:14.6px;color:#000000;left:29px;transform:scaleX(0.848);transform-origin:0 50%;">PT&nbsp; SUBUR JAYA GEMILANG</div>
<div class="a" style="left:275px;top:470px;width:97px;height:22px;overflow:hidden;">
<div class="a" style="left:3px;top:0;height:22px;line-height:22px;font-size:14.6px;color:#000000;transform:scaleX(0.848);transform-origin:0 50%;">PI.2022.07.00026</div></div>
<div class="a" style="top:471.00px;height:20px;line-height:20px;font-size:14.6px;color:#000000;left:446.5px;transform-origin:0 50%;transform:scaleX(0.848) translateX(-100%);">28/07/2022</div>
<div class="a" style="top:471.00px;height:20px;line-height:20px;font-size:14.6px;color:#000000;left:543.5px;transform-origin:0 50%;transform:scaleX(0.848) translateX(-100%);">19.441.920</div>
<div class="a" style="top:493.00px;height:20px;line-height:20px;font-size:14.6px;color:#000000;left:29px;transform:scaleX(0.848);transform-origin:0 50%;">PT GODREJ DISTRIBUTION</div>
<div class="a" style="left:275px;top:492px;width:97px;height:22px;overflow:hidden;">
<div class="a" style="left:3px;top:0;height:22px;line-height:22px;font-size:14.6px;color:#000000;transform:scaleX(0.848);transform-origin:0 50%;">PI.2022.07.00048</div></div>
<div class="a" style="top:493.00px;height:20px;line-height:20px;font-size:14.6px;color:#000000;left:446.5px;transform-origin:0 50%;transform:scaleX(0.848) translateX(-100%);">30/07/2022</div>
<div class="a" style="top:493.00px;height:20px;line-height:20px;font-size:14.6px;color:#000000;left:543.5px;transform-origin:0 50%;transform:scaleX(0.848) translateX(-100%);">6.171.355</div>
<div class="a" style="top:515.00px;height:20px;line-height:20px;font-size:14.6px;color:#000000;left:29px;transform:scaleX(0.848);transform-origin:0 50%;">PT&nbsp; SUBUR JAYA GEMILANG</div>
<div class="a" style="left:275px;top:514px;width:97px;height:22px;overflow:hidden;">
<div class="a" style="left:3px;top:0;height:22px;line-height:22px;font-size:14.6px;color:#000000;transform:scaleX(0.848);transform-origin:0 50%;">PI.2022.07.00065</div></div>
<div class="a" style="top:515.00px;height:20px;line-height:20px;font-size:14.6px;color:#000000;left:446.5px;transform-origin:0 50%;transform:scaleX(0.848) translateX(-100%);">11/07/2022</div>
<div class="a" style="top:515.00px;height:20px;line-height:20px;font-size:14.6px;color:#000000;left:543.5px;transform-origin:0 50%;transform:scaleX(0.848) translateX(-100%);">1.198.702</div>
<div class="a" style="top:537.00px;height:20px;line-height:20px;font-size:14.6px;color:#000000;left:29px;transform:scaleX(0.848);transform-origin:0 50%;">PT&nbsp; SUBUR JAYA GEMILANG</div>
<div class="a" style="left:275px;top:536px;width:97px;height:22px;overflow:hidden;">
<div class="a" style="left:3px;top:0;height:22px;line-height:22px;font-size:14.6px;color:#000000;transform:scaleX(0.848);transform-origin:0 50%;">PI.2022.07.00046</div></div>
<div class="a" style="top:537.00px;height:20px;line-height:20px;font-size:14.6px;color:#000000;left:446.5px;transform-origin:0 50%;transform:scaleX(0.848) translateX(-100%);">30/07/2022</div>
<div class="a" style="top:537.00px;height:20px;line-height:20px;font-size:14.6px;color:#000000;left:543.5px;transform-origin:0 50%;transform:scaleX(0.848) translateX(-100%);">2.086.000</div>
<div class="a" style="top:559.00px;height:20px;line-height:20px;font-size:14.6px;color:#000000;left:29px;transform:scaleX(0.848);transform-origin:0 50%;">PT&nbsp; SUBUR JAYA GEMILANG</div>
<div class="a" style="left:275px;top:558px;width:97px;height:22px;overflow:hidden;">
<div class="a" style="left:3px;top:0;height:22px;line-height:22px;font-size:14.6px;color:#000000;transform:scaleX(0.848);transform-origin:0 50%;">PI.2022.08.00002</div></div>
<div class="a" style="top:559.00px;height:20px;line-height:20px;font-size:14.6px;color:#000000;left:446.5px;transform-origin:0 50%;transform:scaleX(0.848) translateX(-100%);">30/07/2022</div>
<div class="a" style="top:559.00px;height:20px;line-height:20px;font-size:14.6px;color:#000000;left:543.5px;transform-origin:0 50%;transform:scaleX(0.848) translateX(-100%);">2.870.324</div>
<div class="a" style="top:581.00px;height:20px;line-height:20px;font-size:14.6px;color:#000000;left:29px;transform:scaleX(0.848);transform-origin:0 50%;">TK ADANG</div>
<div class="a" style="left:275px;top:580px;width:97px;height:22px;overflow:hidden;">
<div class="a" style="left:3px;top:0;height:22px;line-height:22px;font-size:14.6px;color:#000000;transform:scaleX(0.848);transform-origin:0 50%;">PI.2022.07.00069</div></div>
<div class="a" style="top:581.00px;height:20px;line-height:20px;font-size:14.6px;color:#000000;left:446.5px;transform-origin:0 50%;transform:scaleX(0.848) translateX(-100%);">15/07/2022</div>
<div class="a" style="top:581.00px;height:20px;line-height:20px;font-size:14.6px;color:#000000;left:543.5px;transform-origin:0 50%;transform:scaleX(0.848) translateX(-100%);">180.705.000</div>
<div class="a" style="top:603.00px;height:20px;line-height:20px;font-size:14.6px;color:#000000;left:29px;transform:scaleX(0.848);transform-origin:0 50%;">TOKO HARY</div>
<div class="a" style="left:275px;top:602px;width:97px;height:22px;overflow:hidden;">
<div class="a" style="left:3px;top:0;height:22px;line-height:22px;font-size:14.6px;color:#000000;transform:scaleX(0.848);transform-origin:0 50%;">PI.2022.07.00067</div></div>
<div class="a" style="top:603.00px;height:20px;line-height:20px;font-size:14.6px;color:#000000;left:446.5px;transform-origin:0 50%;transform:scaleX(0.848) translateX(-100%);">29/07/2022</div>
<div class="a" style="top:603.00px;height:20px;line-height:20px;font-size:14.6px;color:#000000;left:543.5px;transform-origin:0 50%;transform:scaleX(0.848) translateX(-100%);">13.800.000</div>
<div class="a" style="top:625.00px;height:20px;line-height:20px;font-size:14.6px;color:#000000;left:29px;transform:scaleX(0.848);transform-origin:0 50%;">PT SUKSES MAKMUR ABADI</div>
<div class="a" style="left:275px;top:624px;width:97px;height:22px;overflow:hidden;">
<div class="a" style="left:3px;top:0;height:22px;line-height:22px;font-size:14.6px;color:#000000;transform:scaleX(0.848);transform-origin:0 50%;">PI.2022.07.00016</div></div>
<div class="a" style="top:625.00px;height:20px;line-height:20px;font-size:14.6px;color:#000000;left:446.5px;transform-origin:0 50%;transform:scaleX(0.848) translateX(-100%);">21/07/2022</div>
<div class="a" style="top:625.00px;height:20px;line-height:20px;font-size:14.6px;color:#000000;left:543.5px;transform-origin:0 50%;transform:scaleX(0.848) translateX(-100%);">127.908.617</div>
<div class="a" style="top:647.00px;height:20px;line-height:20px;font-size:14.6px;color:#000000;left:29px;transform:scaleX(0.848);transform-origin:0 50%;">PT SUKSES MAKMUR ABADI</div>
<div class="a" style="left:275px;top:646px;width:97px;height:22px;overflow:hidden;">
<div class="a" style="left:3px;top:0;height:22px;line-height:22px;font-size:14.6px;color:#000000;transform:scaleX(0.848);transform-origin:0 50%;">PI.2022.07.00023</div></div>
<div class="a" style="top:647.00px;height:20px;line-height:20px;font-size:14.6px;color:#000000;left:446.5px;transform-origin:0 50%;transform:scaleX(0.848) translateX(-100%);">26/07/2022</div>
<div class="a" style="top:647.00px;height:20px;line-height:20px;font-size:14.6px;color:#000000;left:543.5px;transform-origin:0 50%;transform:scaleX(0.848) translateX(-100%);">50.384.873</div>
<div class="a" style="top:669.00px;height:20px;line-height:20px;font-size:14.6px;color:#000000;left:29px;transform:scaleX(0.848);transform-origin:0 50%;">PT VISIONART&nbsp; INDO PRATAMA</div>
<div class="a" style="left:275px;top:668px;width:97px;height:22px;overflow:hidden;">
<div class="a" style="left:3px;top:0;height:22px;line-height:22px;font-size:14.6px;color:#000000;transform:scaleX(0.848);transform-origin:0 50%;">PI.2022.07.00015</div></div>
<div class="a" style="top:669.00px;height:20px;line-height:20px;font-size:14.6px;color:#000000;left:446.5px;transform-origin:0 50%;transform:scaleX(0.848) translateX(-100%);">20/07/2022</div>
<div class="a" style="top:669.00px;height:20px;line-height:20px;font-size:14.6px;color:#000000;left:543.5px;transform-origin:0 50%;transform:scaleX(0.848) translateX(-100%);">44.985.384</div>
<div class="a" style="top:913.00px;height:20px;line-height:20px;font-size:14.6px;color:#000000;left:29px;transform:scaleX(0.848);transform-origin:0 50%;">PT CAHAYA ABADI BARU</div>
<div class="a" style="left:275px;top:912px;width:97px;height:22px;overflow:hidden;">
<div class="a" style="left:3px;top:0;height:22px;line-height:22px;font-size:14.6px;color:#000000;transform:scaleX(0.848);transform-origin:0 50%;">PI.2022.07.00030</div></div>
<div class="a" style="top:913.00px;height:20px;line-height:20px;font-size:14.6px;color:#000000;left:446.5px;transform-origin:0 50%;transform:scaleX(0.848) translateX(-100%);">30/07/2022</div>
<div class="a" style="top:913.00px;height:20px;line-height:20px;font-size:14.6px;color:#000000;left:543.5px;transform-origin:0 50%;transform:scaleX(0.848) translateX(-100%);">55.855.856</div>
<div class="a" style="top:935.00px;height:20px;line-height:20px;font-size:14.6px;color:#000000;left:29px;transform:scaleX(0.848);transform-origin:0 50%;">TK DEDI</div>
<div class="a" style="left:275px;top:934px;width:97px;height:22px;overflow:hidden;">
<div class="a" style="left:3px;top:0;height:22px;line-height:22px;font-size:14.6px;color:#000000;transform:scaleX(0.848);transform-origin:0 50%;">PI.2022.07.00049</div></div>
<div class="a" style="top:935.00px;height:20px;line-height:20px;font-size:14.6px;color:#000000;left:446.5px;transform-origin:0 50%;transform:scaleX(0.848) translateX(-100%);">15/07/2022</div>
<div class="a" style="top:935.00px;height:20px;line-height:20px;font-size:14.6px;color:#000000;left:543.5px;transform-origin:0 50%;transform:scaleX(0.848) translateX(-100%);">51.000.000</div>
<div class="a" style="top:957.00px;height:20px;line-height:20px;font-size:14.6px;color:#000000;left:29px;transform:scaleX(0.848);transform-origin:0 50%;">CV ASTHA PANGAN ABADI</div>
<div class="a" style="left:275px;top:956px;width:97px;height:22px;overflow:hidden;">
<div class="a" style="left:3px;top:0;height:22px;line-height:22px;font-size:14.6px;color:#000000;transform:scaleX(0.848);transform-origin:0 50%;">PI.2022.07.00037</div></div>
<div class="a" style="top:957.00px;height:20px;line-height:20px;font-size:14.6px;color:#000000;left:446.5px;transform-origin:0 50%;transform:scaleX(0.848) translateX(-100%);">30/07/2022</div>
<div class="a" style="top:957.00px;height:20px;line-height:20px;font-size:14.6px;color:#000000;left:543.5px;transform-origin:0 50%;transform:scaleX(0.848) translateX(-100%);">7.367.073</div>
<div class="a" style="top:979.00px;height:20px;line-height:20px;font-size:14.6px;color:#000000;left:29px;transform:scaleX(0.848);transform-origin:0 50%;">PT MAKINDO PERDANA</div>
<div class="a" style="left:275px;top:978px;width:97px;height:22px;overflow:hidden;">
<div class="a" style="left:3px;top:0;height:22px;line-height:22px;font-size:14.6px;color:#000000;transform:scaleX(0.848);transform-origin:0 50%;">PI.2022.07.00006</div></div>
<div class="a" style="top:979.00px;height:20px;line-height:20px;font-size:14.6px;color:#000000;left:446.5px;transform-origin:0 50%;transform:scaleX(0.848) translateX(-100%);">15/07/2022</div>
<div class="a" style="top:979.00px;height:20px;line-height:20px;font-size:14.6px;color:#000000;left:543.5px;transform-origin:0 50%;transform:scaleX(0.848) translateX(-100%);">24.976.975</div>
<div class="a" style="top:318.00px;height:20px;line-height:20px;font-size:13.6px;color:#000000;left:773px;transform-origin:0 50%;transform:translateX(-100%);">7</div>
<div class="a" style="top:318.00px;height:20px;line-height:20px;font-size:13.6px;color:#000000;left:778px;">10</div>
<div class="a" style="left:814px;top:316px;width:124px;height:22px;overflow:hidden;">
<div class="a" style="left:3px;top:1px;height:22px;line-height:22px;font-size:13.6px;color:#000000;transform:scaleX(0.9);transform-origin:0 50%;">PT MAKINDO PERDANA</div></div>
<div class="a" style="top:340.00px;height:20px;line-height:20px;font-size:13.6px;color:#000000;left:773px;transform-origin:0 50%;transform:translateX(-100%);">7</div>
<div class="a" style="top:340.00px;height:20px;line-height:20px;font-size:13.6px;color:#000000;left:778px;">10</div>
<div class="a" style="left:814px;top:338px;width:124px;height:22px;overflow:hidden;">
<div class="a" style="left:3px;top:1px;height:22px;line-height:22px;font-size:13.6px;color:#000000;transform:scaleX(0.9);transform-origin:0 50%;">PT FASTRATA BUANA</div></div>
<div class="a" style="top:362.00px;height:20px;line-height:20px;font-size:13.6px;color:#000000;left:773px;transform-origin:0 50%;transform:translateX(-100%);">7</div>
<div class="a" style="top:362.00px;height:20px;line-height:20px;font-size:13.6px;color:#000000;left:778px;">10</div>
<div class="a" style="left:814px;top:360px;width:124px;height:22px;overflow:hidden;">
<div class="a" style="left:3px;top:1px;height:22px;line-height:22px;font-size:13.6px;color:#000000;transform:scaleX(0.9);transform-origin:0 50%;">PT CATUR SENTOSA ANUGERAH</div></div>
<div class="a" style="top:384.00px;height:20px;line-height:20px;font-size:13.6px;color:#000000;left:773px;transform-origin:0 50%;transform:translateX(-100%);">7</div>
<div class="a" style="top:384.00px;height:20px;line-height:20px;font-size:13.6px;color:#000000;left:778px;">10</div>
<div class="a" style="left:814px;top:382px;width:124px;height:22px;overflow:hidden;">
<div class="a" style="left:3px;top:1px;height:22px;line-height:22px;font-size:13.6px;color:#000000;transform:scaleX(0.9);transform-origin:0 50%;">PT CIPTA NIAGA SEMESTA</div></div>
<div class="a" style="top:406.00px;height:20px;line-height:20px;font-size:13.6px;color:#000000;left:773px;transform-origin:0 50%;transform:translateX(-100%);">7</div>
<div class="a" style="top:406.00px;height:20px;line-height:20px;font-size:13.6px;color:#000000;left:778px;">10</div>
<div class="a" style="left:814px;top:404px;width:124px;height:22px;overflow:hidden;">
<div class="a" style="left:3px;top:1px;height:22px;line-height:22px;font-size:13.6px;color:#000000;transform:scaleX(0.9);transform-origin:0 50%;">PT UNIGEMILANG SENTOSA</div></div>
<div class="a" style="top:428.00px;height:20px;line-height:20px;font-size:13.6px;color:#000000;left:773px;transform-origin:0 50%;transform:translateX(-100%);">7</div>
<div class="a" style="top:428.00px;height:20px;line-height:20px;font-size:13.6px;color:#000000;left:778px;">10</div>
<div class="a" style="left:814px;top:426px;width:124px;height:22px;overflow:hidden;">
<div class="a" style="left:3px;top:1px;height:22px;line-height:22px;font-size:13.6px;color:#000000;transform:scaleX(0.9);transform-origin:0 50%;">PT UNIGEMILANG SENTOSA</div></div>
<div class="a" style="top:450.00px;height:20px;line-height:20px;font-size:13.6px;color:#000000;left:773px;transform-origin:0 50%;transform:translateX(-100%);">7</div>
<div class="a" style="top:450.00px;height:20px;line-height:20px;font-size:13.6px;color:#000000;left:778px;">10</div>
<div class="a" style="left:814px;top:448px;width:124px;height:22px;overflow:hidden;">
<div class="a" style="left:3px;top:1px;height:22px;line-height:22px;font-size:13.6px;color:#000000;transform:scaleX(0.9);transform-origin:0 50%;">PT UNIGEMILANG SENTOSA</div></div>
<div class="a" style="top:472.00px;height:20px;line-height:20px;font-size:13.6px;color:#000000;left:773px;transform-origin:0 50%;transform:translateX(-100%);">7</div>
<div class="a" style="top:472.00px;height:20px;line-height:20px;font-size:13.6px;color:#000000;left:778px;">10</div>
<div class="a" style="left:814px;top:470px;width:124px;height:22px;overflow:hidden;">
<div class="a" style="left:3px;top:1px;height:22px;line-height:22px;font-size:13.6px;color:#000000;transform:scaleX(0.9);transform-origin:0 50%;">PT SUBUR JAYA GEMILANG</div></div>
<div class="a" style="top:494.00px;height:20px;line-height:20px;font-size:13.6px;color:#000000;left:773px;transform-origin:0 50%;transform:translateX(-100%);">7</div>
<div class="a" style="top:494.00px;height:20px;line-height:20px;font-size:13.6px;color:#000000;left:778px;">10</div>
<div class="a" style="left:814px;top:492px;width:124px;height:22px;overflow:hidden;">
<div class="a" style="left:3px;top:1px;height:22px;line-height:22px;font-size:13.6px;color:#000000;transform:scaleX(0.9);transform-origin:0 50%;">PT GODREJ DISTRIBUTION</div></div>
<div class="a" style="top:516.00px;height:20px;line-height:20px;font-size:13.6px;color:#000000;left:773px;transform-origin:0 50%;transform:translateX(-100%);">7</div>
<div class="a" style="top:516.00px;height:20px;line-height:20px;font-size:13.6px;color:#000000;left:778px;">10</div>
<div class="a" style="left:814px;top:514px;width:124px;height:22px;overflow:hidden;">
<div class="a" style="left:3px;top:1px;height:22px;line-height:22px;font-size:13.6px;color:#000000;transform:scaleX(0.9);transform-origin:0 50%;">PT SUBUR JAYA GEMILANG</div></div>
<div class="a" style="top:538.00px;height:20px;line-height:20px;font-size:13.6px;color:#000000;left:773px;transform-origin:0 50%;transform:translateX(-100%);">7</div>
<div class="a" style="top:538.00px;height:20px;line-height:20px;font-size:13.6px;color:#000000;left:778px;">10</div>
<div class="a" style="left:814px;top:536px;width:124px;height:22px;overflow:hidden;">
<div class="a" style="left:3px;top:1px;height:22px;line-height:22px;font-size:13.6px;color:#000000;transform:scaleX(0.9);transform-origin:0 50%;">PT SUBUR JAYA GEMILANG</div></div>
<div class="a" style="top:560.00px;height:20px;line-height:20px;font-size:13.6px;color:#000000;left:773px;transform-origin:0 50%;transform:translateX(-100%);">7</div>
<div class="a" style="top:560.00px;height:20px;line-height:20px;font-size:13.6px;color:#000000;left:778px;">10</div>
<div class="a" style="left:814px;top:558px;width:124px;height:22px;overflow:hidden;">
<div class="a" style="left:3px;top:1px;height:22px;line-height:22px;font-size:13.6px;color:#000000;transform:scaleX(0.9);transform-origin:0 50%;">PT SUBUR JAYA GEMILANG</div></div>
<div class="a" style="top:626.00px;height:20px;line-height:20px;font-size:13.6px;color:#000000;left:773px;transform-origin:0 50%;transform:translateX(-100%);">7</div>
<div class="a" style="top:626.00px;height:20px;line-height:20px;font-size:13.6px;color:#000000;left:778px;">10</div>
<div class="a" style="left:814px;top:624px;width:124px;height:22px;overflow:hidden;">
<div class="a" style="left:3px;top:1px;height:22px;line-height:22px;font-size:13.6px;color:#000000;transform:scaleX(0.9);transform-origin:0 50%;">PT SUKSES MAKMUR ABADI</div></div>
<div class="a" style="left:449px;top:689px;width:100px;height:1px;background:#1a1a1a;"></div>
<div class="a" style="left:449px;top:711px;width:100px;height:1px;background:#1a1a1a;"></div>
<div class="a" style="left:449px;top:713px;width:100px;height:1px;background:#1a1a1a;"></div>
<div class="a" style="top:691.50px;height:20px;line-height:20px;font-size:14.6px;color:#000000;left:543.5px;transform-origin:0 50%;transform:scaleX(0.9) translateX(-100%);">573.845.461</div>
<div class="a" style="top:759.00px;height:20px;line-height:20px;font-size:15px;color:#1f3864;font-weight:bold;left:150px;transform-origin:0 50%;transform:translateX(-50%);">Debit</div>
<div class="a" style="top:759.00px;height:20px;line-height:20px;font-size:15px;color:#1f3864;font-weight:bold;left:324px;transform-origin:0 50%;transform:translateX(-50%);">Kredit</div>
<div class="a" style="left:26px;top:779px;width:347px;height:1px;background:#1f3864;"></div>
<div class="a" style="top:782.00px;height:20px;line-height:20px;font-size:14.6px;color:#000000;left:251px;transform-origin:0 50%;transform:translateX(-100%);">-</div>
<div class="a" style="top:781.00px;height:20px;line-height:20px;font-size:14.6px;color:#000000;left:365.5px;transform-origin:0 50%;transform:scaleX(0.97) translateX(-100%);">573.845.461</div>
<div class="a" style="top:782.00px;height:20px;line-height:20px;font-size:13.6px;color:#000000;left:376px;transform:scaleX(1.0082);transform-origin:0 50%;">Persediaan StokTersedia di Juli di jual di Agustus</div>
<div class="a" style="top:803.00px;height:20px;line-height:20px;font-size:14.6px;color:#000000;left:267.5px;transform-origin:0 50%;transform:scaleX(0.97) translateX(-100%);">573.845.461</div>
<div class="a" style="top:804.00px;height:20px;line-height:20px;font-size:13.6px;color:#000000;left:376px;transform:scaleX(1.0082);transform-origin:0 50%;">Persediaan StokTersedia di Juli di jual di Agustus</div>
<div class="a" style="top:880.00px;height:20px;line-height:20px;font-size:14.6px;color:#000000;font-weight:bold;left:150px;transform-origin:0 50%;transform:scaleX(0.89) translateX(-50%);">Supplier</div>
<div class="a" style="top:891.50px;height:20px;line-height:20px;font-size:14.6px;color:#000000;font-weight:bold;left:324px;transform-origin:0 50%;transform:scaleX(0.87) translateX(-50%);">No Invoice</div>
<div class="a" style="top:891.50px;height:20px;line-height:20px;font-size:14.6px;color:#000000;font-weight:bold;left:376px;transform:scaleX(0.88);transform-origin:0 50%;">Tanggal</div>
<div class="a" style="top:869.00px;height:20px;line-height:20px;font-size:14.6px;color:#000000;font-weight:bold;left:500px;transform-origin:0 50%;transform:scaleX(0.88) translateX(-50%);">Pembelian</div>
<div class="a" style="top:891.50px;height:20px;line-height:20px;font-size:14.6px;color:#000000;font-weight:bold;left:500px;transform-origin:0 50%;transform:scaleX(0.88) translateX(-50%);">(HPP)</div>
<div class="a" style="left:274px;top:645px;width:101px;height:24px;border:2px solid #217346;box-sizing:border-box;"></div>
<div class="a" style="left:371px;top:666px;width:5px;height:5px;background:#217346;border:1px solid #fff;"></div>
<div class="a" style="left:876px;top:648px;width:60px;height:22px;background:#fff;border:1px solid #c6c6c6;box-sizing:border-box;"></div>
<svg class="a" style="left:880px;top:652px;" width="16" height="16" viewBox="0 0 16 16"><rect x="1" y="2" width="10" height="12" fill="#e8c27c" stroke="#c9a05a"/><rect x="4" y="0.5" width="4" height="3" fill="#888"/><path d="M7 6 H12 L15 9 V15 H7Z" fill="#fff" stroke="#777"/></svg>
<div class="a" style="top:651.00px;height:16px;line-height:16px;font-size:12px;color:#444;left:897px;">(Ctrl)</div>
<svg class="a" style="left:925px;top:657px;" width="6" height="4" viewBox="0 0 6 4"><path d="M0 0 H6 L3 4Z" fill="#555"/></svg>
</div></div>
<div class="a" style="left:0px;top:208px;width:938px;height:20px;background:#e6e6e6;"></div>
<svg class="a" style="left:10px;top:213px;" width="12" height="12" viewBox="0 0 12 12"><path d="M11 1 V11 H1Z" fill="#b4b4b4"/></svg>
<div class="a" style="left:275px;top:208px;width:1px;height:20px;background:#b8b8b8;"></div>
<div class="a" style="top:210.00px;height:18px;line-height:18px;font-size:13.4px;color:#262626;left:150.5px;transform-origin:0 50%;transform:translateX(-50%);">L</div>
<div class="a" style="left:276px;top:208px;width:98px;height:20px;background:#d2d2d2;"></div>
<div class="a" style="left:276px;top:226px;width:97px;height:2px;background:#217346;"></div>
<div class="a" style="left:373px;top:208px;width:1px;height:20px;background:#b8b8b8;"></div>
<div class="a" style="top:210.00px;height:18px;line-height:18px;font-size:13.4px;color:#217346;left:324.0px;transform-origin:0 50%;transform:translateX(-50%);">M</div>
<div class="a" style="left:449px;top:208px;width:1px;height:20px;background:#b8b8b8;"></div>
<div class="a" style="top:210.00px;height:18px;line-height:18px;font-size:13.4px;color:#262626;left:411.0px;transform-origin:0 50%;transform:translateX(-50%);">N</div>
<div class="a" style="left:549px;top:208px;width:1px;height:20px;background:#b8b8b8;"></div>
<div class="a" style="top:210.00px;height:18px;line-height:18px;font-size:13.4px;color:#262626;left:499.0px;transform-origin:0 50%;transform:translateX(-50%);">P</div>
<div class="a" style="left:736px;top:208px;width:1px;height:20px;background:#b8b8b8;"></div>
<div class="a" style="top:210.00px;height:18px;line-height:18px;font-size:13.4px;color:#262626;left:642.5px;transform-origin:0 50%;transform:translateX(-50%);">Q</div>
<div class="a" style="left:775px;top:208px;width:1px;height:20px;background:#b8b8b8;"></div>
<div class="a" style="top:210.00px;height:18px;line-height:18px;font-size:13.4px;color:#262626;left:755.5px;transform-origin:0 50%;transform:translateX(-50%);">R</div>
<div class="a" style="left:814px;top:208px;width:1px;height:20px;background:#b8b8b8;"></div>
<div class="a" style="top:210.00px;height:18px;line-height:18px;font-size:13.4px;color:#262626;left:794.5px;transform-origin:0 50%;transform:translateX(-50%);">S</div>
<div class="a" style="left:938px;top:208px;width:1px;height:20px;background:#b8b8b8;"></div>
<div class="a" style="top:210.00px;height:18px;line-height:18px;font-size:13.4px;color:#262626;left:883px;transform-origin:0 50%;transform:translateX(-50%);">T</div>
<div class="a" style="left:26px;top:208px;width:1px;height:20px;background:#bdbdbd;"></div>
<div class="a" style="left:0px;top:227px;width:938px;height:1px;background:#bdbdbd;"></div>
<div class="a" style="left:449px;top:208px;width:1px;height:19px;background:#e6e6e6;"></div>
<div class="a" style="left:447px;top:208px;width:1px;height:19px;background:#a8a8a8;"></div>
<div class="a" style="left:451px;top:208px;width:1px;height:19px;background:#a8a8a8;"></div>
<div class="a" style="left:1px;top:228px;width:25px;height:22px;background:#e6e6e6;"></div>
<div class="a" style="left:1px;top:249px;width:25px;height:1px;background:#b8b8b8;"></div>
<div class="a" style="top:230.50px;height:18px;line-height:18px;font-size:13.4px;color:#262626;left:13.5px;transform-origin:0 50%;transform:scaleX(0.92) translateX(-50%);">1</div>
<div class="a" style="left:1px;top:250px;width:25px;height:44px;background:#e6e6e6;"></div>
<div class="a" style="left:1px;top:293px;width:25px;height:1px;background:#b8b8b8;"></div>
<div class="a" style="top:274.50px;height:18px;line-height:18px;font-size:13.4px;color:#262626;left:13.5px;transform-origin:0 50%;transform:scaleX(0.92) translateX(-50%);">2</div>
<div class="a" style="left:1px;top:294px;width:25px;height:22px;background:#e6e6e6;"></div>
<div class="a" style="left:1px;top:315px;width:25px;height:1px;background:#b8b8b8;"></div>
<div class="a" style="top:296.50px;height:18px;line-height:18px;font-size:13.4px;color:#262626;left:13.5px;transform-origin:0 50%;transform:scaleX(0.92) translateX(-50%);">390</div>
<div class="a" style="left:1px;top:316px;width:25px;height:22px;background:#e6e6e6;"></div>
<div class="a" style="left:1px;top:337px;width:25px;height:1px;background:#b8b8b8;"></div>
<div class="a" style="top:318.50px;height:18px;line-height:18px;font-size:13.4px;color:#262626;left:13.5px;transform-origin:0 50%;transform:scaleX(0.92) translateX(-50%);">391</div>
<div class="a" style="left:1px;top:338px;width:25px;height:22px;background:#e6e6e6;"></div>
<div class="a" style="left:1px;top:359px;width:25px;height:1px;background:#b8b8b8;"></div>
<div class="a" style="top:340.50px;height:18px;line-height:18px;font-size:13.4px;color:#262626;left:13.5px;transform-origin:0 50%;transform:scaleX(0.92) translateX(-50%);">392</div>
<div class="a" style="left:1px;top:360px;width:25px;height:22px;background:#e6e6e6;"></div>
<div class="a" style="left:1px;top:381px;width:25px;height:1px;background:#b8b8b8;"></div>
<div class="a" style="top:362.50px;height:18px;line-height:18px;font-size:13.4px;color:#262626;left:13.5px;transform-origin:0 50%;transform:scaleX(0.92) translateX(-50%);">393</div>
<div class="a" style="left:1px;top:382px;width:25px;height:22px;background:#e6e6e6;"></div>
<div class="a" style="left:1px;top:403px;width:25px;height:1px;background:#b8b8b8;"></div>
<div class="a" style="top:384.50px;height:18px;line-height:18px;font-size:13.4px;color:#262626;left:13.5px;transform-origin:0 50%;transform:scaleX(0.92) translateX(-50%);">394</div>
<div class="a" style="left:1px;top:404px;width:25px;height:22px;background:#e6e6e6;"></div>
<div class="a" style="left:1px;top:425px;width:25px;height:1px;background:#b8b8b8;"></div>
<div class="a" style="top:406.50px;height:18px;line-height:18px;font-size:13.4px;color:#262626;left:13.5px;transform-origin:0 50%;transform:scaleX(0.92) translateX(-50%);">395</div>
<div class="a" style="left:1px;top:426px;width:25px;height:22px;background:#e6e6e6;"></div>
<div class="a" style="left:1px;top:447px;width:25px;height:1px;background:#b8b8b8;"></div>
<div class="a" style="top:428.50px;height:18px;line-height:18px;font-size:13.4px;color:#262626;left:13.5px;transform-origin:0 50%;transform:scaleX(0.92) translateX(-50%);">396</div>
<div class="a" style="left:1px;top:448px;width:25px;height:22px;background:#e6e6e6;"></div>
<div class="a" style="left:1px;top:469px;width:25px;height:1px;background:#b8b8b8;"></div>
<div class="a" style="top:450.50px;height:18px;line-height:18px;font-size:13.4px;color:#262626;left:13.5px;transform-origin:0 50%;transform:scaleX(0.92) translateX(-50%);">397</div>
<div class="a" style="left:1px;top:470px;width:25px;height:22px;background:#e6e6e6;"></div>
<div class="a" style="left:1px;top:491px;width:25px;height:1px;background:#b8b8b8;"></div>
<div class="a" style="top:472.50px;height:18px;line-height:18px;font-size:13.4px;color:#262626;left:13.5px;transform-origin:0 50%;transform:scaleX(0.92) translateX(-50%);">398</div>
<div class="a" style="left:1px;top:492px;width:25px;height:22px;background:#e6e6e6;"></div>
<div class="a" style="left:1px;top:513px;width:25px;height:1px;background:#b8b8b8;"></div>
<div class="a" style="top:494.50px;height:18px;line-height:18px;font-size:13.4px;color:#262626;left:13.5px;transform-origin:0 50%;transform:scaleX(0.92) translateX(-50%);">399</div>
<div class="a" style="left:1px;top:514px;width:25px;height:22px;background:#e6e6e6;"></div>
<div class="a" style="left:1px;top:535px;width:25px;height:1px;background:#b8b8b8;"></div>
<div class="a" style="top:516.50px;height:18px;line-height:18px;font-size:13.4px;color:#262626;left:13.5px;transform-origin:0 50%;transform:scaleX(0.92) translateX(-50%);">400</div>
<div class="a" style="left:1px;top:536px;width:25px;height:22px;background:#e6e6e6;"></div>
<div class="a" style="left:1px;top:557px;width:25px;height:1px;background:#b8b8b8;"></div>
<div class="a" style="top:538.50px;height:18px;line-height:18px;font-size:13.4px;color:#262626;left:13.5px;transform-origin:0 50%;transform:scaleX(0.92) translateX(-50%);">401</div>
<div class="a" style="left:1px;top:558px;width:25px;height:22px;background:#e6e6e6;"></div>
<div class="a" style="left:1px;top:579px;width:25px;height:1px;background:#b8b8b8;"></div>
<div class="a" style="top:560.50px;height:18px;line-height:18px;font-size:13.4px;color:#262626;left:13.5px;transform-origin:0 50%;transform:scaleX(0.92) translateX(-50%);">402</div>
<div class="a" style="left:1px;top:580px;width:25px;height:22px;background:#e6e6e6;"></div>
<div class="a" style="left:1px;top:601px;width:25px;height:1px;background:#b8b8b8;"></div>
<div class="a" style="top:582.50px;height:18px;line-height:18px;font-size:13.4px;color:#262626;left:13.5px;transform-origin:0 50%;transform:scaleX(0.92) translateX(-50%);">403</div>
<div class="a" style="left:1px;top:602px;width:25px;height:22px;background:#e6e6e6;"></div>
<div class="a" style="left:1px;top:623px;width:25px;height:1px;background:#b8b8b8;"></div>
<div class="a" style="top:604.50px;height:18px;line-height:18px;font-size:13.4px;color:#262626;left:13.5px;transform-origin:0 50%;transform:scaleX(0.92) translateX(-50%);">404</div>
<div class="a" style="left:1px;top:624px;width:25px;height:22px;background:#e6e6e6;"></div>
<div class="a" style="left:1px;top:645px;width:25px;height:1px;background:#b8b8b8;"></div>
<div class="a" style="top:626.50px;height:18px;line-height:18px;font-size:13.4px;color:#262626;left:13.5px;transform-origin:0 50%;transform:scaleX(0.92) translateX(-50%);">405</div>
<div class="a" style="left:1px;top:646px;width:25px;height:22px;background:#d2d2d2;"></div>
<div class="a" style="left:1px;top:667px;width:25px;height:1px;background:#b8b8b8;"></div>
<div class="a" style="top:648.50px;height:18px;line-height:18px;font-size:13.4px;color:#217346;left:13.5px;transform-origin:0 50%;transform:scaleX(0.92) translateX(-50%);">406</div>
<div class="a" style="left:25px;top:646px;width:2px;height:22px;background:#217346;"></div>
<div class="a" style="left:1px;top:668px;width:25px;height:22px;background:#e6e6e6;"></div>
<div class="a" style="left:1px;top:689px;width:25px;height:1px;background:#b8b8b8;"></div>
<div class="a" style="top:670.50px;height:18px;line-height:18px;font-size:13.4px;color:#262626;left:13.5px;transform-origin:0 50%;transform:scaleX(0.92) translateX(-50%);">407</div>
<div class="a" style="left:1px;top:690px;width:25px;height:23px;background:#e6e6e6;"></div>
<div class="a" style="left:1px;top:712px;width:25px;height:1px;background:#b8b8b8;"></div>
<div class="a" style="top:693.50px;height:18px;line-height:18px;font-size:13.4px;color:#262626;left:13.5px;transform-origin:0 50%;transform:scaleX(0.92) translateX(-50%);">408</div>
<div class="a" style="left:1px;top:713px;width:25px;height:23px;background:#e6e6e6;"></div>
<div class="a" style="left:1px;top:735px;width:25px;height:1px;background:#b8b8b8;"></div>
<div class="a" style="top:716.50px;height:18px;line-height:18px;font-size:13.4px;color:#262626;left:13.5px;transform-origin:0 50%;transform:scaleX(0.92) translateX(-50%);">409</div>
<div class="a" style="left:1px;top:736px;width:25px;height:22px;background:#e6e6e6;"></div>
<div class="a" style="left:1px;top:757px;width:25px;height:1px;background:#b8b8b8;"></div>
<div class="a" style="top:738.50px;height:18px;line-height:18px;font-size:13.4px;color:#262626;left:13.5px;transform-origin:0 50%;transform:scaleX(0.92) translateX(-50%);">410</div>
<div class="a" style="left:1px;top:758px;width:25px;height:22px;background:#e6e6e6;"></div>
<div class="a" style="left:1px;top:779px;width:25px;height:1px;background:#b8b8b8;"></div>
<div class="a" style="top:760.50px;height:18px;line-height:18px;font-size:13.4px;color:#262626;left:13.5px;transform-origin:0 50%;transform:scaleX(0.92) translateX(-50%);">411</div>
<div class="a" style="left:1px;top:780px;width:25px;height:22px;background:#e6e6e6;"></div>
<div class="a" style="left:1px;top:801px;width:25px;height:1px;background:#b8b8b8;"></div>
<div class="a" style="top:782.50px;height:18px;line-height:18px;font-size:13.4px;color:#262626;left:13.5px;transform-origin:0 50%;transform:scaleX(0.92) translateX(-50%);">412</div>
<div class="a" style="left:1px;top:802px;width:25px;height:22px;background:#e6e6e6;"></div>
<div class="a" style="left:1px;top:823px;width:25px;height:1px;background:#b8b8b8;"></div>
<div class="a" style="top:804.50px;height:18px;line-height:18px;font-size:13.4px;color:#262626;left:13.5px;transform-origin:0 50%;transform:scaleX(0.92) translateX(-50%);">413</div>
<div class="a" style="left:1px;top:824px;width:25px;height:22px;background:#e6e6e6;"></div>
<div class="a" style="left:1px;top:845px;width:25px;height:1px;background:#b8b8b8;"></div>
<div class="a" style="top:826.50px;height:18px;line-height:18px;font-size:13.4px;color:#262626;left:13.5px;transform-origin:0 50%;transform:scaleX(0.92) translateX(-50%);">414</div>
<div class="a" style="left:1px;top:846px;width:25px;height:22px;background:#e6e6e6;"></div>
<div class="a" style="left:1px;top:867px;width:25px;height:1px;background:#b8b8b8;"></div>
<div class="a" style="top:848.50px;height:18px;line-height:18px;font-size:13.4px;color:#262626;left:13.5px;transform-origin:0 50%;transform:scaleX(0.92) translateX(-50%);">415</div>
<div class="a" style="left:1px;top:868px;width:25px;height:44px;background:#e6e6e6;"></div>
<div class="a" style="left:1px;top:911px;width:25px;height:1px;background:#b8b8b8;"></div>
<div class="a" style="top:892.50px;height:18px;line-height:18px;font-size:13.4px;color:#262626;left:13.5px;transform-origin:0 50%;transform:scaleX(0.92) translateX(-50%);">416</div>
<div class="a" style="left:1px;top:912px;width:25px;height:22px;background:#e6e6e6;"></div>
<div class="a" style="left:1px;top:933px;width:25px;height:1px;background:#b8b8b8;"></div>
<div class="a" style="top:914.50px;height:18px;line-height:18px;font-size:13.4px;color:#262626;left:13.5px;transform-origin:0 50%;transform:scaleX(0.92) translateX(-50%);">417</div>
<div class="a" style="left:1px;top:934px;width:25px;height:22px;background:#e6e6e6;"></div>
<div class="a" style="left:1px;top:955px;width:25px;height:1px;background:#b8b8b8;"></div>
<div class="a" style="top:936.50px;height:18px;line-height:18px;font-size:13.4px;color:#262626;left:13.5px;transform-origin:0 50%;transform:scaleX(0.92) translateX(-50%);">418</div>
<div class="a" style="left:1px;top:956px;width:25px;height:22px;background:#e6e6e6;"></div>
<div class="a" style="left:1px;top:977px;width:25px;height:1px;background:#b8b8b8;"></div>
<div class="a" style="top:958.50px;height:18px;line-height:18px;font-size:13.4px;color:#262626;left:13.5px;transform-origin:0 50%;transform:scaleX(0.92) translateX(-50%);">419</div>
<div class="a" style="left:1px;top:978px;width:25px;height:22px;background:#e6e6e6;"></div>
<div class="a" style="left:1px;top:999px;width:25px;height:1px;background:#b8b8b8;"></div>
<div class="a" style="top:980.50px;height:18px;line-height:18px;font-size:13.4px;color:#262626;left:13.5px;transform-origin:0 50%;transform:scaleX(0.92) translateX(-50%);">420</div>
<div class="a" style="left:26px;top:228px;width:1px;height:772px;background:#bdbdbd;"></div>
<div class="a" style="left:938px;top:208px;width:20px;height:779px;background:#e6e6e6;"></div>
<div class="a" style="left:942px;top:210px;width:15px;height:15px;background:#fff;border:1px solid #d0d0d0;box-sizing:border-box;"></div>
<svg class="a" style="left:945px;top:215px;" width="9" height="5" viewBox="0 0 9 5"><path d="M0 5 L4.5 0 L9 5Z" fill="#606060"/></svg>
<div class="a" style="left:942px;top:593px;width:15px;height:29px;background:#fff;border:1px solid #c8c8c8;box-sizing:border-box;"></div>
<div class="a" style="left:942px;top:971px;width:15px;height:15px;background:#fff;border:1px solid #d0d0d0;box-sizing:border-box;"></div>
<svg class="a" style="left:945px;top:976px;" width="9" height="5" viewBox="0 0 9 5"><path d="M0 0 L4.5 5 L9 0Z" fill="#606060"/></svg>
<div class="a" style="left:0px;top:987px;width:960px;height:28px;background:#e6e6e6;"></div>
<div class="a" style="left:0px;top:987px;width:101px;height:1px;background:#c8c8c8;"></div>
<div class="a" style="left:101px;top:987px;width:837px;height:1px;background:#c8c8c8;"></div>
<svg class="a" style="left:27px;top:996px;" width="6" height="8" viewBox="0 0 6 8"><path d="M5 0 L0 4 L5 8Z" fill="#c0c0c0"/></svg>
<svg class="a" style="left:55px;top:996px;" width="6" height="8" viewBox="0 0 6 8"><path d="M0 0 L5 4 L0 8Z" fill="#c0c0c0"/></svg>
<div class="a" style="left:101px;top:987px;width:173px;height:25px;background:linear-gradient(90deg,#ffffff 0%,#e3f3d8 100%);"></div>
<div class="a" style="left:101px;top:1009px;width:173px;height:3px;background:#217346;"></div>
<div class="a" style="left:101px;top:987px;width:1px;height:25px;background:#c8c8c8;"></div>
<div class="a" style="left:273px;top:987px;width:1px;height:25px;background:#c8c8c8;"></div>
<div class="a" style="top:991.00px;height:18px;line-height:18px;font-size:13px;color:#217346;font-weight:bold;left:113px;transform:scaleX(0.983);transform-origin:0 50%;">Detail JV Koreksi VS FM</div>
<div class="a" style="left:275px;top:988px;width:36px;height:24px;background:#ffff00;"></div>
<div class="a" style="top:991.00px;height:18px;line-height:18px;font-size:13px;color:#262626;left:285px;transform:scaleX(0.8176);transform-origin:0 50%;">B2</div>
<div class="a" style="left:313px;top:988px;width:108px;height:24px;background:#ffc000;"></div>
<div class="a" style="top:991.00px;height:18px;line-height:18px;font-size:13px;color:#262626;left:327.5px;transform:scaleX(0.9774);transform-origin:0 50%;">Jurnal Koreksi</div>
<div class="a" style="left:424px;top:988px;width:124px;height:24px;background:#ffc000;"></div>
<div class="a" style="top:991.00px;height:18px;line-height:18px;font-size:13px;color:#262626;left:439px;transform:scaleX(0.975);transform-origin:0 50%;">Detail JV Koreksi</div>
<div class="a" style="left:549px;top:988px;width:1px;height:24px;background:#c8c8c8;"></div>
<svg class="a" style="left:584px;top:992px;" width="18" height="18" viewBox="0 0 18 18"><circle cx="9" cy="9" r="8" stroke="#777" stroke-width="1.2" fill="none"/><path d="M9 4.5 V13.5 M4.5 9 H13.5" stroke="#777" stroke-width="1.6"/></svg>
<svg class="a" style="left:895px;top:993px;" width="4" height="16" viewBox="0 0 4 16"><circle cx="2" cy="2" r="1" fill="#aaa"/><circle cx="2" cy="7" r="1" fill="#aaa"/><circle cx="2" cy="12" r="1" fill="#aaa"/></svg>
<div class="a" style="left:913px;top:993px;width:13px;height:15px;background:#fff;border:1px solid #c8c8c8;box-sizing:border-box;"></div>
<svg class="a" style="left:916px;top:997px;" width="6" height="8" viewBox="0 0 6 8"><path d="M5 0 L0 4 L5 8Z" fill="#444"/></svg>
<div class="a" style="left:926px;top:993px;width:13px;height:15px;background:#fff;border:1px solid #c8c8c8;box-sizing:border-box;"></div>
<svg class="a" style="left:929px;top:997px;" width="6" height="8" viewBox="0 0 6 8"><path d="M0 0 L5 4 L0 8Z" fill="#444"/></svg>
<div class="a" style="left:0px;top:1015px;width:960px;height:23px;background:#f3f2f1;"></div>
<div class="a" style="left:0px;top:1015px;width:960px;height:1px;background:#d8d8d8;"></div>
<div class="a" style="top:1019.50px;height:16px;line-height:16px;font-size:12.6px;color:#3a3a3a;left:8px;transform:scaleX(0.8828);transform-origin:0 50%;">Select destination and press ENTER or choose Paste</div>
<div class="a" style="left:649px;top:1016px;width:39px;height:22px;background:#d6d6d6;"></div>
<svg class="a" style="left:661px;top:1019px;" width="14" height="14" viewBox="0 0 14 14"><rect x="0.75" y="0.75" width="12.5" height="12.5" fill="none" stroke="#505050" stroke-width="1.5"/><path d="M0 4.75 H14 M0 9.25 H14 M4.75 0 V14 M9.25 0 V14" stroke="#505050" stroke-width="1.5"/></svg>
<svg class="a" style="left:701px;top:1019px;" width="15" height="14" viewBox="0 0 15 14"><rect x="0.5" y="0.5" width="14" height="13" fill="none" stroke="#505050"/><rect x="3.5" y="2.5" width="8" height="9" fill="none" stroke="#505050"/><path d="M5 5 H10 M5 7 H10 M5 9 H10" stroke="#505050"/></svg>
<svg class="a" style="left:741px;top:1019px;" width="15" height="14" viewBox="0 0 15 14"><rect x="0.5" y="0.5" width="14" height="13" fill="none" stroke="#505050"/><path d="M5.5 0.5 V6.5 H0.5 M9.5 0.5 V6.5 H5.5" stroke="#505050" fill="none"/></svg>
<div class="a" style="left:775px;top:1027px;width:7px;height:2px;background:#505050;"></div>
<div class="a" style="left:788px;top:1027px;width:100px;height:1px;background:#bdbdbd;"></div>
<div class="a" style="left:836px;top:1021px;width:5px;height:11px;background:#808080;"></div>
<svg class="a" style="left:893px;top:1022px;" width="9" height="9" viewBox="0 0 9 9"><path d="M4.5 0 V9 M0 4.5 H9" stroke="#505050" stroke-width="1.2"/></svg>
<div class="a" style="top:1019.00px;height:16px;line-height:16px;font-size:12px;color:#444;left:914px;transform:scaleX(0.8472);transform-origin:0 50%;">100%</div>
<div class="a" style="left:0px;top:1037px;width:960px;height:3px;background:#1d4a2c;"></div>
<div class="a" style="left:0px;top:0px;width:1px;height:1040px;background:#1e6b41;"></div>
<div class="a" style="left:0;top:0;width:1920px;height:1080px;">
<div class="a" style="left:962px;top:0px;width:953px;height:35px;background:#217346;"></div>
<svg class="a" style="left:984px;top:11px;" width="16" height="15" viewBox="0 0 16 15"><path d="M1 1 H15 V14 H1Z" fill="#fff"/><path d="M4 1.8 H12 V6 H4Z" fill="#217346"/><path d="M4.5 9 H11.5 V14 H9.5 V11 H6.5 V14 H4.5Z" fill="#217346"/></svg>
<svg class="a" style="left:1012px;top:11px;" width="17" height="15" viewBox="0 0 17 15"><path d="M6 2.5 L2 6 L6 9.5" stroke="#fff" stroke-width="2" fill="none"/><path d="M2.5 6 H9.5 Q14.5 6 14.5 10.5 Q14.5 14 10.5 14.5" stroke="#fff" stroke-width="2" fill="none"/></svg>
<svg class="a" style="left:1033px;top:14px;" width="8" height="6" viewBox="0 0 8 6"><path d="M1 1.5 L4 4.5 L7 1.5" stroke="#fff" stroke-width="1.2" fill="none"/></svg>
<svg class="a" style="left:1052px;top:11px;" width="17" height="15" viewBox="0 0 17 15"><path d="M11 2.5 L15 6 L11 9.5" stroke="#5fae80" stroke-width="2" fill="none"/><path d="M14.5 6 H7.5 Q2.5 6 2.5 10.5 Q2.5 14 6.5 14.5" stroke="#5fae80" stroke-width="2" fill="none"/></svg>
<svg class="a" style="left:1072px;top:14px;" width="8" height="6" viewBox="0 0 8 6"><path d="M1 1.5 L4 4.5 L7 1.5" stroke="#5fae80" stroke-width="1.2" fill="none"/></svg>
<svg class="a" style="left:1093px;top:14px;" width="10" height="9" viewBox="0 0 10 9"><path d="M1.5 1 H8.5" stroke="#fff" stroke-width="1.2"/><path d="M1 4 H9 L5 8Z" fill="#fff"/></svg>
<div class="a" style="top:7.50px;height:20px;line-height:20px;font-size:12.6px;color:#d6eadc;left:1401px;transform:scaleX(0.9087);transform-origin:0 50%;">Book2&nbsp; -&nbsp; Excel</div>
<div class="a" style="left:1665px;top:8px;width:58px;height:19px;background:#a8d5b9;"></div>
<div class="a" style="top:9.00px;height:18px;line-height:18px;font-size:13px;color:#217346;left:1694px;transform-origin:0 50%;transform:scaleX(0.9057) translateX(-50%);">Sign in</div>
<svg class="a" style="left:1747px;top:10px;" width="16" height="13" viewBox="0 0 16 13"><rect x="1.5" y="1.5" width="13" height="10" stroke="#d6eadc" fill="none"/><path d="M1.5 4 H14.5" stroke="#d6eadc"/><path d="M8 10 V5.5 M5.5 8 L8 5.5 L10.5 8" stroke="#d6eadc" fill="none"/></svg>
<svg class="a" style="left:1796px;top:16px;" width="12" height="2" viewBox="0 0 12 2"><rect x="0" y="0" width="11" height="1" fill="#d6eadc"/></svg>
<svg class="a" style="left:1842px;top:11px;" width="12" height="12" viewBox="0 0 12 12"><rect x="0.5" y="0.5" width="10" height="10" stroke="#d6eadc" fill="none"/></svg>
<svg class="a" style="left:1888px;top:11px;" width="12" height="12" viewBox="0 0 12 12"><path d="M0.5 0.5 L11 11 M11 0.5 L0.5 11" stroke="#d6eadc" stroke-width="1.1"/></svg>
<div class="a" style="left:962px;top:35px;width:953px;height:126px;background:#F3F2F1;"></div>
<div class="a" style="left:962px;top:35px;width:953px;height:3px;background:#eef5f0;"></div>
<div class="a" style="top:40.30px;height:20px;line-height:20px;font-size:13.4px;color:#262626;left:980px;transform:scaleX(0.88);transform-origin:0 50%;">File</div>
<div class="a" style="top:40.30px;height:20px;line-height:20px;font-size:13.4px;color:#1e1e1e;left:1030.5px;transform:scaleX(1.0352);transform-origin:0 50%;">Home</div>
<div class="a" style="top:40.30px;height:20px;line-height:20px;font-size:13.4px;color:#262626;left:1096px;transform:scaleX(0.9549);transform-origin:0 50%;">Insert</div>
<div class="a" style="top:40.30px;height:20px;line-height:20px;font-size:13.4px;color:#262626;left:1159px;transform:scaleX(0.9436);transform-origin:0 50%;">Page Layout</div>
<div class="a" style="top:40.30px;height:20px;line-height:20px;font-size:13.4px;color:#262626;left:1260px;transform:scaleX(0.9491);transform-origin:0 50%;">Formulas</div>
<div class="a" style="top:40.30px;height:20px;line-height:20px;font-size:13.4px;color:#262626;left:1342px;transform:scaleX(0.954);transform-origin:0 50%;">Data</div>
<div class="a" style="top:40.30px;height:20px;line-height:20px;font-size:13.4px;color:#262626;left:1398px;transform:scaleX(0.9104);transform-origin:0 50%;">Review</div>
<div class="a" style="top:40.30px;height:20px;line-height:20px;font-size:13.4px;color:#262626;left:1466px;transform:scaleX(0.9374);transform-origin:0 50%;">View</div>
<div class="a" style="top:40.30px;height:20px;line-height:20px;font-size:13.4px;color:#262626;left:1521px;transform:scaleX(0.9616);transform-origin:0 50%;">Help</div>
<div class="a" style="left:1031px;top:60px;width:38px;height:3px;background:#217346;"></div>
<svg class="a" style="left:1588px;top:41px;" width="12" height="18" viewBox="0 0 12 18"><path d="M6 1.5 C2.5 1.5 1.2 4 1.2 6 C1.2 8.5 3.5 9.5 3.8 12 H8.2 C8.5 9.5 10.8 8.5 10.8 6 C10.8 4 9.5 1.5 6 1.5Z" stroke="#444" stroke-width="1.1" fill="none"/><path d="M4 14 H8 M4.5 16 H7.5" stroke="#444" stroke-width="1.1"/></svg>
<div class="a" style="top:40.30px;height:20px;line-height:20px;font-size:13.4px;color:#444;left:1616px;transform:scaleX(0.9979);transform-origin:0 50%;">Tell me what you want to do</div>
<div class="a" style="left:1837px;top:38px;width:66px;height:23px;background:#ffffff;border:1px solid #e3e3e3;box-sizing:border-box;"></div>
<svg class="a" style="left:1843px;top:43px;" width="16" height="14" viewBox="0 0 16 14"><path d="M2 5 V13 H13 V9" stroke="#444" stroke-width="1.1" fill="none"/><path d="M5 10 Q6 5 11 5 V2.5 L15 6 L11 9.5 V7 Q7.5 7 5 10Z" stroke="#444" stroke-width="1.1" fill="none"/></svg>
<div class="a" style="top:40.30px;height:20px;line-height:20px;font-size:13.4px;color:#1d5c3a;left:1861px;transform:scaleX(0.9509);transform-origin:0 50%;">Share</div>
<div class="a" style="left:1058px;top:70px;width:1px;height:88px;background:#d8d6d5;"></div>
<div class="a" style="left:1290px;top:70px;width:1px;height:88px;background:#d8d6d5;"></div>
<div class="a" style="left:1417px;top:70px;width:1px;height:88px;background:#d8d6d5;"></div>
<div class="a" style="left:1518px;top:70px;width:1px;height:88px;background:#d8d6d5;"></div>
<div class="a" style="left:1698px;top:70px;width:1px;height:88px;background:#d8d6d5;"></div>
<div class="a" style="left:1792px;top:70px;width:1px;height:88px;background:#d8d6d5;"></div>
<div class="a" style="left:1882px;top:70px;width:1px;height:88px;background:#d8d6d5;"></div>
<div class="a" style="top:145.50px;height:16px;line-height:16px;font-size:12.2px;color:#444;left:977px;transform:scaleX(0.9767);transform-origin:0 50%;">Clipboard</div>
<div class="a" style="top:145.50px;height:16px;line-height:16px;font-size:12.2px;color:#444;left:1154px;transform:scaleX(0.9627);transform-origin:0 50%;">Font</div>
<div class="a" style="top:145.50px;height:16px;line-height:16px;font-size:12.2px;color:#444;left:1319px;transform:scaleX(0.977);transform-origin:0 50%;">Alignment</div>
<div class="a" style="top:145.50px;height:16px;line-height:16px;font-size:12.2px;color:#444;left:1440px;transform:scaleX(0.9219);transform-origin:0 50%;">Number</div>
<div class="a" style="top:145.50px;height:16px;line-height:16px;font-size:12.2px;color:#444;left:1594.5px;transform:scaleX(0.8428);transform-origin:0 50%;">Styles</div>
<div class="a" style="top:145.50px;height:16px;line-height:16px;font-size:12.2px;color:#444;left:1733px;transform:scaleX(0.8666);transform-origin:0 50%;">Cells</div>
<div class="a" style="top:145.50px;height:16px;line-height:16px;font-size:12.2px;color:#444;left:1819px;transform:scaleX(0.9919);transform-origin:0 50%;">Editing</div>
<svg class="a" style="left:1047px;top:149px;" width="9" height="9" viewBox="0 0 9 9"><path d="M0.5 8.5 V0.5 H8.5" stroke="#666" stroke-width="1" fill="none"/><path d="M3 3 L7.5 7.5 M4 7.5 H7.5 V4" stroke="#666" stroke-width="1.1" fill="none"/></svg>
<svg class="a" style="left:1279px;top:149px;" width="9" height="9" viewBox="0 0 9 9"><path d="M0.5 8.5 V0.5 H8.5" stroke="#666" stroke-width="1" fill="none"/><path d="M3 3 L7.5 7.5 M4 7.5 H7.5 V4" stroke="#666" stroke-width="1.1" fill="none"/></svg>
<svg class="a" style="left:1405px;top:149px;" width="9" height="9" viewBox="0 0 9 9"><path d="M0.5 8.5 V0.5 H8.5" stroke="#666" stroke-width="1" fill="none"/><path d="M3 3 L7.5 7.5 M4 7.5 H7.5 V4" stroke="#666" stroke-width="1.1" fill="none"/></svg>
<svg class="a" style="left:1506px;top:149px;" width="9" height="9" viewBox="0 0 9 9"><path d="M0.5 8.5 V0.5 H8.5" stroke="#666" stroke-width="1" fill="none"/><path d="M3 3 L7.5 7.5 M4 7.5 H7.5 V4" stroke="#666" stroke-width="1.1" fill="none"/></svg>
<svg class="a" style="left:1902px;top:149px;" width="12" height="8" viewBox="0 0 12 8"><path d="M1 6.5 L6 1.5 L11 6.5" stroke="#444" stroke-width="1.2" fill="none"/></svg>
<svg class="a" style="left:979px;top:72px;" width="30" height="32" viewBox="0 0 30 32"><rect x="1" y="3" width="24" height="26" rx="1" fill="#f4c97c"/><path d="M9 1.5 H17 L18.5 5.5 H7.5Z" fill="#666"/><rect x="6" y="4" width="14" height="2.5" fill="#666"/><circle cx="13" cy="2.5" r="1.2" fill="#f3f2f1"/><path d="M15.5 12.5 H24.5 L28.5 16.5 V30.5 H15.5Z" fill="#fff" stroke="#555"/><path d="M24.5 12.5 V16.5 H28.5" fill="none" stroke="#555"/></svg>
<div class="a" style="top:107.00px;height:16px;line-height:16px;font-size:13px;color:#262626;left:978px;transform:scaleX(0.8423);transform-origin:0 50%;">Paste</div>
<svg class="a" style="left:987px;top:126px;" width="8" height="6" viewBox="0 0 8 6"><path d="M1 1.5 L4 4.5 L7 1.5" stroke="#444" stroke-width="1.2" fill="none"/></svg>
<svg class="a" style="left:1016px;top:71px;" width="16" height="17" viewBox="0 0 16 17"><circle cx="4" cy="13" r="2.6" stroke="#4f76a6" stroke-width="1.3" fill="none"/><circle cx="12" cy="13" r="2.6" stroke="#4f76a6" stroke-width="1.3" fill="none"/><path d="M5.2 10.8 L12 1 M10.8 10.8 L4 1" stroke="#555" stroke-width="1.6"/></svg>
<svg class="a" style="left:1015px;top:96px;" width="17" height="15" viewBox="0 0 17 15"><path d="M1.5 1.5 H7.5 L9.5 3.5 V11.5 H1.5Z" fill="#fff" stroke="#666"/><path d="M6.5 4.5 H12.5 L15.5 7.5 V14.5 H6.5Z" fill="#fff" stroke="#666"/><path d="M3 5.5 H6 M3 7.5 H6 M8.5 9.5 H13.5 M8.5 11.5 H13.5" stroke="#777"/></svg>
<svg class="a" style="left:1038px;top:101px;" width="8" height="6" viewBox="0 0 8 6"><path d="M1 1.5 L4 4.5 L7 1.5" stroke="#444" stroke-width="1.2" fill="none"/></svg>
<svg class="a" style="left:1015px;top:119px;" width="18" height="16" viewBox="0 0 18 16"><path d="M9 6 L14 1 L17.5 4.5 L12.5 9.5Z" fill="#5a5a5a"/><path d="M1.5 12 L7.5 6.5 L11.5 10.5 L6 16Z" fill="#e8b867"/></svg>
<div class="a" style="left:1067px;top:77px;width:123px;height:22px;background:#fff;border:1px solid #c8c8c8;box-sizing:border-box;"></div>
<div class="a" style="top:80.00px;height:18px;line-height:18px;font-size:13px;color:#262626;left:1070px;transform:scaleX(0.95);transform-origin:0 50%;">Calibri</div>
<svg class="a" style="left:1178px;top:87px;" width="8" height="5" viewBox="0 0 8 5"><path d="M0.5 0.5 L7.5 0.5 L4 4.5Z" fill="#444"/></svg>
<div class="a" style="left:1192px;top:77px;width:42px;height:22px;background:#fff;border:1px solid #c8c8c8;box-sizing:border-box;"></div>
<div class="a" style="top:80.00px;height:18px;line-height:18px;font-size:13px;color:#262626;left:1196px;transform:scaleX(0.8152);transform-origin:0 50%;">11</div>
<svg class="a" style="left:1223px;top:87px;" width="8" height="5" viewBox="0 0 8 5"><path d="M0.5 0.5 L7.5 0.5 L4 4.5Z" fill="#444"/></svg>
<div class="a" style="top:80.00px;height:18px;line-height:18px;font-size:14px;color:#444;left:1243px;">A</div>
<svg class="a" style="left:1251px;top:79px;" width="6" height="4" viewBox="0 0 6 4"><path d="M0 4 L3 0 L6 4Z" fill="#2e6fb5"/></svg>
<div class="a" style="top:83.00px;height:16px;line-height:16px;font-size:11px;color:#444;left:1268px;">A</div>
<svg class="a" style="left:1275px;top:80px;" width="6" height="4" viewBox="0 0 6 4"><path d="M0 0 L3 4 L6 0Z" fill="#2e6fb5"/></svg>
<div class="a" style="top:110.00px;height:18px;line-height:18px;font-size:13px;color:#333;font-weight:bold;left:1073px;">B</div>
<div class="a" style="top:110.00px;height:18px;line-height:18px;font-size:13px;color:#333;left:1098px;font-style:italic;font-family:Liberation Serif;font-weight:bold;">I</div>
<div class="a" style="top:110.00px;height:18px;line-height:18px;font-size:13px;color:#333;font-weight:bold;left:1121px;text-decoration:underline;">U</div>
<svg class="a" style="left:1139px;top:117px;" width="8" height="6" viewBox="0 0 8 6"><path d="M1 1.5 L4 4.5 L7 1.5" stroke="#444" stroke-width="1.2" fill="none"/></svg>
<div class="a" style="left:1156px;top:110px;width:1px;height:20px;background:#dcdcdc;"></div>
<svg class="a" style="left:1164px;top:112px;" width="15" height="15" viewBox="0 0 15 15"><rect x="0.5" y="0.5" width="14" height="14" fill="none" stroke="#888" stroke-dasharray="1 1"/><path d="M7.5 0 V15 M0 7.5 H15" stroke="#aaa" stroke-dasharray="1 1"/></svg>
<svg class="a" style="left:1185px;top:117px;" width="8" height="6" viewBox="0 0 8 6"><path d="M1 1.5 L4 4.5 L7 1.5" stroke="#444" stroke-width="1.2" fill="none"/></svg>
<div class="a" style="left:1202px;top:110px;width:1px;height:20px;background:#dcdcdc;"></div>
<svg class="a" style="left:1209px;top:111px;" width="18" height="18" viewBox="0 0 18 18"><path d="M4 8 L9 3 L14 8 L9 12Z" fill="#fff" stroke="#555"/><path d="M14 8 Q16 10 15 12" stroke="#2e6fb5" fill="none"/><rect x="1" y="14" width="15" height="4" fill="#ffff00"/></svg>
<svg class="a" style="left:1231px;top:117px;" width="8" height="6" viewBox="0 0 8 6"><path d="M1 1.5 L4 4.5 L7 1.5" stroke="#444" stroke-width="1.2" fill="none"/></svg>
<svg class="a" style="left:1248px;top:111px;" width="18" height="18" viewBox="0 0 18 18"><path d="M4 12.5 L8 2 H10 L14 12.5 M6 9 H12" stroke="#333" stroke-width="2" fill="none"/><rect x="1" y="14" width="16" height="3" fill="#e00000"/></svg>
<svg class="a" style="left:1270px;top:117px;" width="8" height="6" viewBox="0 0 8 6"><path d="M1 1.5 L4 4.5 L7 1.5" stroke="#444" stroke-width="1.2" fill="none"/></svg>
<svg class="a" style="left:1302px;top:72px;" width="16" height="8" viewBox="0 0 16 8"><path d="M1 1.5 H14 M1 4.5 H14" stroke="#555"/></svg>
<svg class="a" style="left:1326px;top:75px;" width="16" height="10" viewBox="0 0 16 10"><path d="M1 1.5 H14 M1 4.5 H14 M1 7.5 H14" stroke="#555"/></svg>
<div class="a" style="left:1347px;top:69px;width:22px;height:22px;background:#d4d2d1;border:1px solid #b5b3b2;box-sizing:border-box;"></div>
<svg class="a" style="left:1351px;top:79px;" width="14" height="10" viewBox="0 0 14 10"><path d="M1 1.5 H13 M1 4.5 H13 M1 7.5 H13" stroke="#555"/></svg>
<div class="a" style="top:69.00px;height:12px;line-height:12px;font-size:11px;color:#444;left:1376px;">ab</div>
<div class="a" style="top:79.00px;height:12px;line-height:12px;font-size:11px;color:#444;left:1376px;">c</div>
<svg class="a" style="left:1384px;top:81px;" width="7" height="6" viewBox="0 0 7 6"><path d="M6 0 V3 H1 M3 1 L1 3 L3 5" stroke="#2e6fb5" fill="none"/></svg>
<svg class="a" style="left:1302px;top:98px;" width="16" height="12" viewBox="0 0 16 12"><path d="M1 1.5 H14 M1 4.5 H10 M1 7.5 H14 M1 10.5 H10" stroke="#555"/></svg>
<svg class="a" style="left:1326px;top:98px;" width="16" height="12" viewBox="0 0 16 12"><path d="M1 1.5 H14 M3 4.5 H12 M1 7.5 H14 M3 10.5 H12" stroke="#555"/></svg>
<svg class="a" style="left:1350px;top:98px;" width="16" height="12" viewBox="0 0 16 12"><path d="M1 1.5 H14 M5 4.5 H14 M1 7.5 H14 M5 10.5 H14" stroke="#555"/></svg>
<svg class="a" style="left:1374px;top:95px;" width="17" height="17" viewBox="0 0 17 17"><rect x="1" y="1" width="15" height="15" fill="none" stroke="#555"/><path d="M1 5 H16 M1 12 H16" stroke="#555"/><path d="M3 8.5 H14 M5 6.5 L3 8.5 L5 10.5 M12 6.5 L14 8.5 L12 10.5" stroke="#2e6fb5" fill="none"/></svg>
<svg class="a" style="left:1396px;top:101px;" width="8" height="6" viewBox="0 0 8 6"><path d="M1 1.5 L4 4.5 L7 1.5" stroke="#444" stroke-width="1.2" fill="none"/></svg>
<svg class="a" style="left:1302px;top:120px;" width="17" height="14" viewBox="0 0 17 14"><path d="M1 1.5 H16 M9 4.5 H16 M9 7.5 H16 M9 10.5 H16 M1 13.5 H16" stroke="#555"/><path d="M6 6 H1 M3.5 3.5 L1 6 L3.5 8.5" stroke="#2e6fb5" stroke-width="1.5" fill="none"/></svg>
<svg class="a" style="left:1326px;top:120px;" width="17" height="14" viewBox="0 0 17 14"><path d="M1 1.5 H16 M9 4.5 H16 M9 7.5 H16 M9 10.5 H16 M1 13.5 H16" stroke="#555"/><path d="M1 6 H6 M3.5 3.5 L6 6 L3.5 8.5" stroke="#2e6fb5" stroke-width="1.5" fill="none"/></svg>
<div class="a" style="left:1350px;top:117px;width:1px;height:23px;background:#dcdcdc;"></div>
<svg class="a" style="left:1358px;top:119px;" width="18" height="15" viewBox="0 0 18 15"><text x="0" y="11" font-size="9" fill="#444" transform="rotate(-40 6 8)" font-family="Liberation Sans">ab</text><path d="M5 14 L15 4 M12 4 H15 V7" stroke="#444" fill="none"/></svg>
<svg class="a" style="left:1376px;top:124px;" width="8" height="6" viewBox="0 0 8 6"><path d="M1 1.5 L4 4.5 L7 1.5" stroke="#444" stroke-width="1.2" fill="none"/></svg>
<div class="a" style="left:1426px;top:69px;width:85px;height:23px;background:#fff;border:1px solid #c8c8c8;box-sizing:border-box;"></div>
<div class="a" style="top:72.00px;height:18px;line-height:18px;font-size:13px;color:#262626;left:1429.5px;transform:scaleX(0.8498);transform-origin:0 50%;">General</div>
<svg class="a" style="left:1499px;top:78px;" width="8" height="5" viewBox="0 0 8 5"><path d="M0.5 0.5 L7.5 0.5 L4 4.5Z" fill="#444"/></svg>
<svg class="a" style="left:1428px;top:96px;" width="17" height="16" viewBox="0 0 17 16"><rect x="1" y="1" width="15" height="8" fill="none" stroke="#2e6fb5" stroke-width="1.3"/><circle cx="8.5" cy="5" r="2" fill="#2e6fb5"/><ellipse cx="11" cy="11" rx="4" ry="1.6" fill="#f0c060"/><ellipse cx="10" cy="14" rx="4" ry="1.6" fill="#f0c060"/></svg>
<svg class="a" style="left:1450px;top:101px;" width="8" height="6" viewBox="0 0 8 6"><path d="M1 1.5 L4 4.5 L7 1.5" stroke="#444" stroke-width="1.2" fill="none"/></svg>
<div class="a" style="top:95.00px;height:18px;line-height:18px;font-size:15px;color:#444;left:1469px;">%</div>
<div class="a" style="top:92.00px;height:18px;line-height:18px;font-size:15px;color:#444;font-weight:bold;left:1498px;">,</div>
<svg class="a" style="left:1428px;top:121px;" width="18" height="14" viewBox="0 0 18 14"><text x="6" y="6.5" font-size="7" fill="#444" font-family="Liberation Sans">.0</text><text x="3" y="13.5" font-size="7" fill="#444" font-family="Liberation Sans">.00</text><path d="M6 4 H1 M3 2 L1 4 L3 6" stroke="#2e6fb5" fill="none"/></svg>
<svg class="a" style="left:1452px;top:121px;" width="18" height="14" viewBox="0 0 18 14"><text x="5" y="6.5" font-size="7" fill="#444" font-family="Liberation Sans">.00</text><text x="8" y="13.5" font-size="7" fill="#444" font-family="Liberation Sans">.0</text><path d="M1 11 H7 M5 9 L7 11 L5 13" stroke="#2e6fb5" fill="none"/></svg>
<svg class="a" style="left:1529px;top:71px;" width="17" height="17" viewBox="0 0 17 17"><rect x="1" y="1" width="15" height="15" fill="#fff" stroke="#777"/><rect x="1" y="1" width="6" height="4" fill="#d64040"/><rect x="1" y="6" width="6" height="4" fill="#d64040"/><rect x="1" y="11" width="6" height="3" fill="#2e6fb5"/><rect x="8" y="8" width="8" height="8" fill="#fff" stroke="#555"/><path d="M10 11 H14 M10 13 H14" stroke="#444"/></svg>
<div class="a" style="top:71.00px;height:18px;line-height:18px;font-size:13px;color:#262626;left:1549.5px;transform:scaleX(0.9405);transform-origin:0 50%;">Conditional Formatting</div>
<svg class="a" style="left:1675px;top:77px;" width="8" height="6" viewBox="0 0 8 6"><path d="M1 1.5 L4 4.5 L7 1.5" stroke="#444" stroke-width="1.2" fill="none"/></svg>
<svg class="a" style="left:1529px;top:94px;" width="17" height="17" viewBox="0 0 17 17"><rect x="1" y="1" width="15" height="15" fill="#fff" stroke="#777"/><path d="M1 5 H16 M1 9 H16 M6 1 V16 M11 1 V16" stroke="#999"/><path d="M7 15 L15 6 L16 8 L9 16Z" fill="#2e6fb5"/></svg>
<div class="a" style="top:94.00px;height:18px;line-height:18px;font-size:13px;color:#262626;left:1549.5px;transform:scaleX(0.8767);transform-origin:0 50%;">Format as Table</div>
<svg class="a" style="left:1633px;top:100px;" width="8" height="6" viewBox="0 0 8 6"><path d="M1 1.5 L4 4.5 L7 1.5" stroke="#444" stroke-width="1.2" fill="none"/></svg>
<svg class="a" style="left:1529px;top:117px;" width="17" height="17" viewBox="0 0 17 17"><rect x="1" y="1" width="15" height="15" fill="#fff" stroke="#777"/><path d="M1 5 H16 M6 1 V16" stroke="#999"/><path d="M7 15 L15 6 L16 8 L9 16Z" fill="#2e6fb5"/></svg>
<div class="a" style="top:117.00px;height:18px;line-height:18px;font-size:13px;color:#262626;left:1549.5px;transform:scaleX(0.8468);transform-origin:0 50%;">Cell Styles</div>
<svg class="a" style="left:1605px;top:123px;" width="8" height="6" viewBox="0 0 8 6"><path d="M1 1.5 L4 4.5 L7 1.5" stroke="#444" stroke-width="1.2" fill="none"/></svg>
<svg class="a" style="left:1709px;top:71px;" width="17" height="17" viewBox="0 0 17 17"><rect x="1" y="1" width="6" height="15" fill="none" stroke="#bbb"/><path d="M1 6 H7 M1 11 H7" stroke="#bbb"/><path d="M9 8.5 H16 M11 6.5 L9 8.5 L11 10.5" stroke="#9db8d8" fill="none"/></svg>
<div class="a" style="top:71.00px;height:18px;line-height:18px;font-size:13px;color:#aaa;left:1729px;transform:scaleX(0.8766);transform-origin:0 50%;">Insert</div>
<svg class="a" style="left:1767px;top:77px;" width="8" height="6" viewBox="0 0 8 6"><path d="M1 1.5 L4 4.5 L7 1.5" stroke="#444" stroke-width="1.2" fill="none"/></svg>
<svg class="a" style="left:1709px;top:94px;" width="17" height="17" viewBox="0 0 17 17"><rect x="1" y="1" width="6" height="15" fill="none" stroke="#666"/><path d="M1 6 H7 M1 11 H7" stroke="#666"/><path d="M10 3 L15 8 M15 3 L10 8" stroke="#d03030" stroke-width="1.3"/></svg>
<div class="a" style="top:94.00px;height:18px;line-height:18px;font-size:13px;color:#262626;left:1729px;transform:scaleX(0.8782);transform-origin:0 50%;">Delete</div>
<svg class="a" style="left:1771px;top:100px;" width="8" height="6" viewBox="0 0 8 6"><path d="M1 1.5 L4 4.5 L7 1.5" stroke="#444" stroke-width="1.2" fill="none"/></svg>
<svg class="a" style="left:1709px;top:117px;" width="17" height="17" viewBox="0 0 17 17"><rect x="1" y="4" width="15" height="12" fill="none" stroke="#666"/><path d="M1 8 H16 M1 12 H16 M6 4 V16 M11 4 V16" stroke="#666"/><rect x="6" y="8" width="5" height="4" fill="#2e6fb5"/><path d="M1 1 H16" stroke="#2e6fb5"/></svg>
<div class="a" style="top:117.00px;height:18px;line-height:18px;font-size:13px;color:#262626;left:1729px;transform:scaleX(0.9231);transform-origin:0 50%;">Format</div>
<svg class="a" style="left:1769px;top:123px;" width="8" height="6" viewBox="0 0 8 6"><path d="M1 1.5 L4 4.5 L7 1.5" stroke="#444" stroke-width="1.2" fill="none"/></svg>
<svg class="a" style="left:1804px;top:72px;" width="16" height="15" viewBox="0 0 16 15"><path d="M1 1 H14.5 V4 H13 V2.8 H4.5 L9.5 7.5 L4.5 12.2 H13 V11 H14.5 V14 H1 V12.8 L6.8 7.5 L1 2.2Z" fill="#333"/></svg>
<svg class="a" style="left:1825px;top:77px;" width="8" height="6" viewBox="0 0 8 6"><path d="M1 1.5 L4 4.5 L7 1.5" stroke="#444" stroke-width="1.2" fill="none"/></svg>
<svg class="a" style="left:1839px;top:70px;" width="19" height="19" viewBox="0 0 19 19"><text x="1" y="8" font-size="8" fill="#2e6fb5" font-family="Liberation Sans">A</text><text x="1" y="17" font-size="8" fill="#9055a0" font-family="Liberation Sans">Z</text><path d="M9 6 H16 L13.5 9.5 V14 L11.5 12 V9.5Z" fill="#444"/></svg>
<svg class="a" style="left:1861px;top:77px;" width="8" height="6" viewBox="0 0 8 6"><path d="M1 1.5 L4 4.5 L7 1.5" stroke="#444" stroke-width="1.2" fill="none"/></svg>
<svg class="a" style="left:1805px;top:94px;" width="16" height="17" viewBox="0 0 16 17"><rect x="1" y="1" width="14" height="15" fill="#fff" stroke="#555"/><rect x="1" y="1" width="14" height="3" fill="#555"/><path d="M8 6 V13 M5 10 L8 13 L11 10" stroke="#2e6fb5" stroke-width="1.5" fill="none"/></svg>
<svg class="a" style="left:1824px;top:100px;" width="8" height="6" viewBox="0 0 8 6"><path d="M1 1.5 L4 4.5 L7 1.5" stroke="#444" stroke-width="1.2" fill="none"/></svg>
<svg class="a" style="left:1842px;top:95px;" width="16" height="16" viewBox="0 0 16 16"><circle cx="10" cy="6" r="4.5" stroke="#2e6fb5" stroke-width="1.6" fill="none"/><path d="M7 9 L1.5 14.5" stroke="#2e6fb5" stroke-width="2"/></svg>
<svg class="a" style="left:1861px;top:100px;" width="8" height="6" viewBox="0 0 8 6"><path d="M1 1.5 L4 4.5 L7 1.5" stroke="#444" stroke-width="1.2" fill="none"/></svg>
<svg class="a" style="left:1804px;top:118px;" width="16" height="13" viewBox="0 0 16 13"><path d="M1 9 L8 2 L14 6 L8 12 H4Z" fill="#e86a80"/></svg>
<svg class="a" style="left:1824px;top:123px;" width="8" height="6" viewBox="0 0 8 6"><path d="M1 1.5 L4 4.5 L7 1.5" stroke="#444" stroke-width="1.2" fill="none"/></svg>
<div class="a" style="left:962px;top:161px;width:953px;height:47px;background:#e6e6e6;"></div>
<div class="a" style="left:962px;top:161px;width:953px;height:4px;background:linear-gradient(#d6d6d6,#e6e6e6);"></div>
<div class="a" style="left:969px;top:172px;width:100px;height:26px;background:#fff;border:1px solid #c6c6c6;box-sizing:border-box;"></div>
<div class="a" style="top:177.00px;height:18px;line-height:18px;font-size:13px;color:#262626;left:975px;transform:scaleX(0.9843);transform-origin:0 50%;">A1076</div>
<svg class="a" style="left:1055px;top:183px;" width="8" height="5" viewBox="0 0 8 5"><path d="M0.5 0.5 L7.5 0.5 L4 4.5Z" fill="#555"/></svg>
<svg class="a" style="left:1083px;top:178px;" width="4" height="16" viewBox="0 0 4 16"><circle cx="2" cy="2" r="1" fill="#999"/><circle cx="2" cy="7" r="1" fill="#999"/><circle cx="2" cy="12" r="1" fill="#999"/></svg>
<div class="a" style="left:1100px;top:172px;width:109px;height:26px;background:#fff;border:1px solid #d6d6d6;box-sizing:border-box;"></div>
<svg class="a" style="left:1113px;top:180px;" width="11" height="11" viewBox="0 0 11 11"><path d="M1 1 L10 10 M10 1 L1 10" stroke="#c2c2c2" stroke-width="2"/></svg>
<svg class="a" style="left:1148px;top:180px;" width="13" height="11" viewBox="0 0 13 11"><path d="M1 6 L5 10 L12 1" stroke="#c2c2c2" stroke-width="2.2" fill="none"/></svg>
<div class="a" style="top:176.00px;height:18px;line-height:18px;font-size:15px;color:#444;font-family:Liberation Serif;left:1185px;"><b><i>f</i><span style="font-size:11px"><i>x</i></span></b></div>
<div class="a" style="left:1213px;top:172px;width:701px;height:26px;background:#fff;border:1px solid #c6c6c6;box-sizing:border-box;"></div>
<div class="a" style="top:177.00px;height:18px;line-height:18px;font-size:13px;color:#262626;left:1225px;transform:scaleX(0.9683);transform-origin:0 50%;">7</div>
<svg class="a" style="left:1901px;top:182px;" width="8" height="6" viewBox="0 0 8 6"><path d="M1 1.5 L4 4.5 L7 1.5" stroke="#555" stroke-width="1.2" fill="none"/></svg>
<div class="a" style="left:995px;top:228px;width:900px;height:760px;background:#ffffff;"></div>
<div class="a" style="left:995px;top:247px;width:900px;height:1px;background:#dadada;"></div>
<div class="a" style="left:995px;top:267px;width:900px;height:1px;background:#dadada;"></div>
<div class="a" style="left:995px;top:287px;width:900px;height:1px;background:#dadada;"></div>
<div class="a" style="left:995px;top:307px;width:900px;height:1px;background:#dadada;"></div>
<div class="a" style="left:995px;top:327px;width:900px;height:1px;background:#dadada;"></div>
<div class="a" style="left:995px;top:347px;width:900px;height:1px;background:#dadada;"></div>
<div class="a" style="left:995px;top:367px;width:900px;height:1px;background:#dadada;"></div>
<div class="a" style="left:995px;top:387px;width:900px;height:1px;background:#dadada;"></div>
<div class="a" style="left:995px;top:407px;width:900px;height:1px;background:#dadada;"></div>
<div class="a" style="left:995px;top:427px;width:900px;height:1px;background:#dadada;"></div>
<div class="a" style="left:995px;top:447px;width:900px;height:1px;background:#dadada;"></div>
<div class="a" style="left:995px;top:467px;width:900px;height:1px;background:#dadada;"></div>
<div class="a" style="left:995px;top:487px;width:900px;height:1px;background:#dadada;"></div>
<div class="a" style="left:995px;top:507px;width:900px;height:1px;background:#dadada;"></div>
<div class="a" style="left:995px;top:527px;width:900px;height:1px;background:#dadada;"></div>
<div class="a" style="left:995px;top:547px;width:900px;height:1px;background:#dadada;"></div>
<div class="a" style="left:995px;top:567px;width:900px;height:1px;background:#dadada;"></div>
<div class="a" style="left:995px;top:587px;width:900px;height:1px;background:#dadada;"></div>
<div class="a" style="left:995px;top:607px;width:900px;height:1px;background:#dadada;"></div>
<div class="a" style="left:995px;top:627px;width:900px;height:1px;background:#dadada;"></div>
<div class="a" style="left:995px;top:647px;width:900px;height:1px;background:#dadada;"></div>
<div class="a" style="left:995px;top:667px;width:900px;height:1px;background:#dadada;"></div>
<div class="a" style="left:995px;top:687px;width:900px;height:1px;background:#dadada;"></div>
<div class="a" style="left:995px;top:707px;width:900px;height:1px;background:#dadada;"></div>
<div class="a" style="left:995px;top:727px;width:900px;height:1px;background:#dadada;"></div>
<div class="a" style="left:995px;top:747px;width:900px;height:1px;background:#dadada;"></div>
<div class="a" style="left:995px;top:767px;width:900px;height:1px;background:#dadada;"></div>
<div class="a" style="left:995px;top:787px;width:900px;height:1px;background:#dadada;"></div>
<div class="a" style="left:995px;top:807px;width:900px;height:1px;background:#dadada;"></div>
<div class="a" style="left:995px;top:827px;width:900px;height:1px;background:#dadada;"></div>
<div class="a" style="left:995px;top:847px;width:900px;height:1px;background:#dadada;"></div>
<div class="a" style="left:995px;top:867px;width:900px;height:1px;background:#dadada;"></div>
<div class="a" style="left:995px;top:887px;width:900px;height:1px;background:#dadada;"></div>
<div class="a" style="left:995px;top:907px;width:900px;height:1px;background:#dadada;"></div>
<div class="a" style="left:995px;top:927px;width:900px;height:1px;background:#dadada;"></div>
<div class="a" style="left:995px;top:947px;width:900px;height:1px;background:#dadada;"></div>
<div class="a" style="left:995px;top:967px;width:900px;height:1px;background:#dadada;"></div>
<div class="a" style="left:995px;top:987px;width:900px;height:1px;background:#dadada;"></div>
<div class="a" style="left:1056px;top:228px;width:1px;height:760px;background:#dadada;"></div>
<div class="a" style="left:1117px;top:228px;width:1px;height:760px;background:#dadada;"></div>
<div class="a" style="left:1269px;top:228px;width:1px;height:760px;background:#dadada;"></div>
<div class="a" style="left:1364px;top:228px;width:1px;height:760px;background:#dadada;"></div>
<div class="a" style="left:1483px;top:228px;width:1px;height:760px;background:#dadada;"></div>
<div class="a" style="left:1565px;top:228px;width:1px;height:760px;background:#dadada;"></div>
<div class="a" style="left:1668px;top:228px;width:1px;height:760px;background:#dadada;"></div>
<div class="a" style="left:1764px;top:228px;width:1px;height:760px;background:#dadada;"></div>
<div class="a" style="left:1860px;top:228px;width:1px;height:760px;background:#dadada;"></div>
<div class="a" style="left:1895px;top:228px;width:1px;height:760px;background:#dadada;"></div>
<div class="a" style="left:995px;top:267px;width:900px;height:381px;background:#00b050;"></div>
<div class="a" style="left:1860px;top:308px;width:35px;height:19px;background:#ffffff;"></div>
<div class="a" style="left:995px;top:228px;width:900px;height:760px;overflow:hidden;">
<div class="a" style="left:-995px;top:-228px;width:1920px;height:1080px;">
<div class="a" style="top:250.00px;height:18px;line-height:18px;font-size:13.4px;color:#000000;left:998px;transform:scaleX(0.92);transform-origin:0 50%;">Masa</div>
<div class="a" style="top:250.00px;height:18px;line-height:18px;font-size:13.4px;color:#000000;left:1059px;transform:scaleX(0.92);transform-origin:0 50%;">Kode</div>
<div class="a" style="top:250.00px;height:18px;line-height:18px;font-size:13.4px;color:#000000;left:1120px;transform:scaleX(0.92);transform-origin:0 50%;">NAMA_PENJUAL</div>
<div class="a" style="top:250.00px;height:18px;line-height:18px;font-size:13.4px;color:#000000;left:1272px;transform:scaleX(0.92);transform-origin:0 50%;">NPWP</div>
<div class="a" style="top:250.00px;height:18px;line-height:18px;font-size:13.4px;color:#000000;left:1367px;transform:scaleX(0.92);transform-origin:0 50%;">NOMOR</div>
<div class="a" style="top:250.00px;height:18px;line-height:18px;font-size:13.4px;color:#000000;left:1486px;transform:scaleX(0.92);transform-origin:0 50%;">TANGGAL</div>
<div class="a" style="top:250.00px;height:18px;line-height:18px;font-size:13.4px;color:#000000;left:1568px;transform:scaleX(0.92);transform-origin:0 50%;">DPP</div>
<div class="a" style="top:250.00px;height:18px;line-height:18px;font-size:13.4px;color:#000000;left:1671px;transform:scaleX(0.92);transform-origin:0 50%;">PPN</div>
<div class="a" style="top:250.00px;height:18px;line-height:18px;font-size:13.4px;color:#000000;left:1767px;transform:scaleX(0.92);transform-origin:0 50%;"></div>
<div class="a" style="top:250.00px;height:18px;line-height:18px;font-size:13.4px;color:#000000;left:1863px;transform:scaleX(0.92);transform-origin:0 50%;">PPnBM</div>
<div class="a" style="left:1039px;top:250px;width:17px;height:16px;background:#f3f3f3;border:1px solid #b8b8b8;box-sizing:border-box;"></div>
<svg class="a" style="left:1044px;top:256px;" width="7" height="4" viewBox="0 0 7 4"><path d="M0 0 H7 L3.5 4Z" fill="#666"/></svg>
<div class="a" style="left:1100px;top:250px;width:17px;height:16px;background:#f3f3f3;border:1px solid #b8b8b8;box-sizing:border-box;"></div>
<svg class="a" style="left:1105px;top:256px;" width="7" height="4" viewBox="0 0 7 4"><path d="M0 0 H7 L3.5 4Z" fill="#666"/></svg>
<div class="a" style="left:1252px;top:250px;width:17px;height:16px;background:#f3f3f3;border:1px solid #b8b8b8;box-sizing:border-box;"></div>
<svg class="a" style="left:1255px;top:253px;" width="11" height="10" viewBox="0 0 11 10"><path d="M3 1 H10 L7.5 4.5 V9 L5.5 7.5 V4.5Z" fill="#555"/><path d="M0.5 6 L2 8 L3.5 6" fill="#555"/></svg>
<div class="a" style="left:1347px;top:250px;width:17px;height:16px;background:#f3f3f3;border:1px solid #b8b8b8;box-sizing:border-box;"></div>
<svg class="a" style="left:1352px;top:256px;" width="7" height="4" viewBox="0 0 7 4"><path d="M0 0 H7 L3.5 4Z" fill="#666"/></svg>
<div class="a" style="left:1466px;top:250px;width:17px;height:16px;background:#f3f3f3;border:1px solid #b8b8b8;box-sizing:border-box;"></div>
<svg class="a" style="left:1471px;top:256px;" width="7" height="4" viewBox="0 0 7 4"><path d="M0 0 H7 L3.5 4Z" fill="#666"/></svg>
<div class="a" style="left:1548px;top:250px;width:17px;height:16px;background:#f3f3f3;border:1px solid #b8b8b8;box-sizing:border-box;"></div>
<svg class="a" style="left:1553px;top:256px;" width="7" height="4" viewBox="0 0 7 4"><path d="M0 0 H7 L3.5 4Z" fill="#666"/></svg>
<div class="a" style="left:1651px;top:250px;width:17px;height:16px;background:#f3f3f3;border:1px solid #b8b8b8;box-sizing:border-box;"></div>
<svg class="a" style="left:1656px;top:256px;" width="7" height="4" viewBox="0 0 7 4"><path d="M0 0 H7 L3.5 4Z" fill="#666"/></svg>
<div class="a" style="left:1747px;top:250px;width:17px;height:16px;background:#f3f3f3;border:1px solid #b8b8b8;box-sizing:border-box;"></div>
<svg class="a" style="left:1752px;top:256px;" width="7" height="4" viewBox="0 0 7 4"><path d="M0 0 H7 L3.5 4Z" fill="#666"/></svg>
<div class="a" style="left:1843px;top:250px;width:17px;height:16px;background:#f3f3f3;border:1px solid #b8b8b8;box-sizing:border-box;"></div>
<svg class="a" style="left:1848px;top:256px;" width="7" height="4" viewBox="0 0 7 4"><path d="M0 0 H7 L3.5 4Z" fill="#666"/></svg>
<div class="a" style="left:1860px;top:248px;width:35px;height:19px;background:#ffffff;"></div>
<div class="a" style="top:250.00px;height:18px;line-height:18px;font-size:13.4px;color:#000000;left:1863px;transform:scaleX(0.92);transform-origin:0 50%;">PPnBM</div>
<div class="a" style="top:270.00px;height:18px;line-height:18px;font-size:13.4px;color:#000000;left:1053px;transform-origin:0 50%;transform:scaleX(0.96) translateX(-100%);">1</div>
<div class="a" style="top:270.00px;height:18px;line-height:18px;font-size:13.4px;color:#000000;left:1059px;transform:scaleX(0.96);transform-origin:0 50%;">10</div>
<div class="a" style="left:1117px;top:268px;width:152px;height:20px;overflow:hidden;">
<div class="a" style="left:3px;top:1px;height:20px;line-height:20px;font-size:13.4px;color:#000000;transform:scaleX(0.88);transform-origin:0 50%;">PT SUKSES MAKMUR ABADI</div></div>
<div class="a" style="top:270.00px;height:18px;line-height:18px;font-size:13.4px;color:#000000;left:1361px;transform-origin:0 50%;transform:scaleX(0.91) translateX(-100%);">2,32326E+13</div>
<div class="a" style="top:270.00px;height:18px;line-height:18px;font-size:13.4px;color:#000000;left:1480px;transform-origin:0 50%;transform:scaleX(0.93) translateX(-100%);">100012210827924</div>
<div class="a" style="top:270.00px;height:18px;line-height:18px;font-size:13.4px;color:#000000;left:1562.5px;transform-origin:0 50%;transform:scaleX(0.99) translateX(-100%);">25/01/2022</div>
<div class="a" style="top:270.00px;height:18px;line-height:18px;font-size:13.4px;color:#000000;left:1660.5px;transform-origin:0 50%;transform:scaleX(0.96) translateX(-100%);">7.578.478</div>
<div class="a" style="top:270.00px;height:18px;line-height:18px;font-size:13.4px;color:#000000;left:1756.5px;transform-origin:0 50%;transform:scaleX(0.96) translateX(-100%);">757.848</div>
<div class="a" style="top:270.00px;height:18px;line-height:18px;font-size:13.4px;color:#000000;left:1852.5px;transform-origin:0 50%;transform:scaleX(0.96) translateX(-100%);">8.336.326</div>
<div class="a" style="top:290.00px;height:18px;line-height:18px;font-size:13.4px;color:#000000;left:1053px;transform-origin:0 50%;transform:scaleX(0.96) translateX(-100%);">2</div>
<div class="a" style="top:290.00px;height:18px;line-height:18px;font-size:13.4px;color:#000000;left:1059px;transform:scaleX(0.96);transform-origin:0 50%;">10</div>
<div class="a" style="left:1117px;top:288px;width:152px;height:20px;overflow:hidden;">
<div class="a" style="left:3px;top:1px;height:20px;line-height:20px;font-size:13.4px;color:#000000;transform:scaleX(0.88);transform-origin:0 50%;">PT SUKSES MAKMUR ABADI</div></div>
<div class="a" style="top:290.00px;height:18px;line-height:18px;font-size:13.4px;color:#000000;left:1361px;transform-origin:0 50%;transform:scaleX(0.91) translateX(-100%);">2,32326E+13</div>
<div class="a" style="top:290.00px;height:18px;line-height:18px;font-size:13.4px;color:#000000;left:1480px;transform-origin:0 50%;transform:scaleX(0.93) translateX(-100%);">100012210841111</div>
<div class="a" style="top:290.00px;height:18px;line-height:18px;font-size:13.4px;color:#000000;left:1562.5px;transform-origin:0 50%;transform:scaleX(0.99) translateX(-100%);">08/02/2022</div>
<div class="a" style="top:290.00px;height:18px;line-height:18px;font-size:13.4px;color:#000000;left:1660.5px;transform-origin:0 50%;transform:scaleX(0.96) translateX(-100%);">112.348.368</div>
<div class="a" style="top:290.00px;height:18px;line-height:18px;font-size:13.4px;color:#000000;left:1756.5px;transform-origin:0 50%;transform:scaleX(0.96) translateX(-100%);">11.234.837</div>
<div class="a" style="top:290.00px;height:18px;line-height:18px;font-size:13.4px;color:#000000;left:1852.5px;transform-origin:0 50%;transform:scaleX(0.96) translateX(-100%);">123.583.205</div>
<div class="a" style="top:310.00px;height:18px;line-height:18px;font-size:13.4px;color:#000000;left:1053px;transform-origin:0 50%;transform:scaleX(0.96) translateX(-100%);">2</div>
<div class="a" style="top:310.00px;height:18px;line-height:18px;font-size:13.4px;color:#000000;left:1059px;transform:scaleX(0.96);transform-origin:0 50%;">10</div>
<div class="a" style="left:1117px;top:308px;width:152px;height:20px;overflow:hidden;">
<div class="a" style="left:3px;top:1px;height:20px;line-height:20px;font-size:13.4px;color:#000000;transform:scaleX(0.88);transform-origin:0 50%;">PT SUKSES MAKMUR ABADI</div></div>
<div class="a" style="top:310.00px;height:18px;line-height:18px;font-size:13.4px;color:#000000;left:1361px;transform-origin:0 50%;transform:scaleX(0.91) translateX(-100%);">2,32326E+13</div>
<div class="a" style="top:310.00px;height:18px;line-height:18px;font-size:13.4px;color:#000000;left:1480px;transform-origin:0 50%;transform:scaleX(0.93) translateX(-100%);">100012210841108</div>
<div class="a" style="top:310.00px;height:18px;line-height:18px;font-size:13.4px;color:#000000;left:1562.5px;transform-origin:0 50%;transform:scaleX(0.99) translateX(-100%);">04/02/2022</div>
<div class="a" style="top:310.00px;height:18px;line-height:18px;font-size:13.4px;color:#000000;left:1660.5px;transform-origin:0 50%;transform:scaleX(0.96) translateX(-100%);">2.808.709</div>
<div class="a" style="top:310.00px;height:18px;line-height:18px;font-size:13.4px;color:#000000;left:1756.5px;transform-origin:0 50%;transform:scaleX(0.96) translateX(-100%);">280.871</div>
<div class="a" style="top:310.00px;height:18px;line-height:18px;font-size:13.4px;color:#000000;left:1852.5px;transform-origin:0 50%;transform:scaleX(0.96) translateX(-100%);">3.089.580</div>
<div class="a" style="top:330.00px;height:18px;line-height:18px;font-size:13.4px;color:#000000;left:1053px;transform-origin:0 50%;transform:scaleX(0.96) translateX(-100%);">2</div>
<div class="a" style="top:330.00px;height:18px;line-height:18px;font-size:13.4px;color:#000000;left:1059px;transform:scaleX(0.96);transform-origin:0 50%;">10</div>
<div class="a" style="left:1117px;top:328px;width:152px;height:20px;overflow:hidden;">
<div class="a" style="left:3px;top:1px;height:20px;line-height:20px;font-size:13.4px;color:#000000;transform:scaleX(0.88);transform-origin:0 50%;">PT SUKSES MAKMUR ABADI</div></div>
<div class="a" style="top:330.00px;height:18px;line-height:18px;font-size:13.4px;color:#000000;left:1361px;transform-origin:0 50%;transform:scaleX(0.91) translateX(-100%);">2,32326E+13</div>
<div class="a" style="top:330.00px;height:18px;line-height:18px;font-size:13.4px;color:#000000;left:1480px;transform-origin:0 50%;transform:scaleX(0.93) translateX(-100%);">100012210841112</div>
<div class="a" style="top:330.00px;height:18px;line-height:18px;font-size:13.4px;color:#000000;left:1562.5px;transform-origin:0 50%;transform:scaleX(0.99) translateX(-100%);">09/02/2022</div>
<div class="a" style="top:330.00px;height:18px;line-height:18px;font-size:13.4px;color:#000000;left:1660.5px;transform-origin:0 50%;transform:scaleX(0.96) translateX(-100%);">112.348.368</div>
<div class="a" style="top:330.00px;height:18px;line-height:18px;font-size:13.4px;color:#000000;left:1756.5px;transform-origin:0 50%;transform:scaleX(0.96) translateX(-100%);">11.234.837</div>
<div class="a" style="top:330.00px;height:18px;line-height:18px;font-size:13.4px;color:#000000;left:1852.5px;transform-origin:0 50%;transform:scaleX(0.96) translateX(-100%);">123.583.205</div>
<div class="a" style="top:350.00px;height:18px;line-height:18px;font-size:13.4px;color:#000000;left:1053px;transform-origin:0 50%;transform:scaleX(0.96) translateX(-100%);">2</div>
<div class="a" style="top:350.00px;height:18px;line-height:18px;font-size:13.4px;color:#000000;left:1059px;transform:scaleX(0.96);transform-origin:0 50%;">10</div>
<div class="a" style="left:1117px;top:348px;width:152px;height:20px;overflow:hidden;">
<div class="a" style="left:3px;top:1px;height:20px;line-height:20px;font-size:13.4px;color:#000000;transform:scaleX(0.88);transform-origin:0 50%;">PT SUKSES MAKMUR ABADI</div></div>
<div class="a" style="top:350.00px;height:18px;line-height:18px;font-size:13.4px;color:#000000;left:1361px;transform-origin:0 50%;transform:scaleX(0.91) translateX(-100%);">2,32326E+13</div>
<div class="a" style="top:350.00px;height:18px;line-height:18px;font-size:13.4px;color:#000000;left:1480px;transform-origin:0 50%;transform:scaleX(0.93) translateX(-100%);">100012210841113</div>
<div class="a" style="top:350.00px;height:18px;line-height:18px;font-size:13.4px;color:#000000;left:1562.5px;transform-origin:0 50%;transform:scaleX(0.99) translateX(-100%);">10/02/2022</div>
<div class="a" style="top:350.00px;height:18px;line-height:18px;font-size:13.4px;color:#000000;left:1660.5px;transform-origin:0 50%;transform:scaleX(0.96) translateX(-100%);">51.230.856</div>
<div class="a" style="top:350.00px;height:18px;line-height:18px;font-size:13.4px;color:#000000;left:1756.5px;transform-origin:0 50%;transform:scaleX(0.96) translateX(-100%);">5.123.085</div>
<div class="a" style="top:350.00px;height:18px;line-height:18px;font-size:13.4px;color:#000000;left:1852.5px;transform-origin:0 50%;transform:scaleX(0.96) translateX(-100%);">56.353.941</div>
<div class="a" style="top:370.00px;height:18px;line-height:18px;font-size:13.4px;color:#000000;left:1053px;transform-origin:0 50%;transform:scaleX(0.96) translateX(-100%);">2</div>
<div class="a" style="top:370.00px;height:18px;line-height:18px;font-size:13.4px;color:#000000;left:1059px;transform:scaleX(0.96);transform-origin:0 50%;">10</div>
<div class="a" style="left:1117px;top:368px;width:152px;height:20px;overflow:hidden;">
<div class="a" style="left:3px;top:1px;height:20px;line-height:20px;font-size:13.4px;color:#000000;transform:scaleX(0.88);transform-origin:0 50%;">PT SUKSES MAKMUR ABADI</div></div>
<div class="a" style="top:370.00px;height:18px;line-height:18px;font-size:13.4px;color:#000000;left:1361px;transform-origin:0 50%;transform:scaleX(0.91) translateX(-100%);">2,32326E+13</div>
<div class="a" style="top:370.00px;height:18px;line-height:18px;font-size:13.4px;color:#000000;left:1480px;transform-origin:0 50%;transform:scaleX(0.93) translateX(-100%);">100012210841105</div>
<div class="a" style="top:370.00px;height:18px;line-height:18px;font-size:13.4px;color:#000000;left:1562.5px;transform-origin:0 50%;transform:scaleX(0.99) translateX(-100%);">03/02/2022</div>
<div class="a" style="top:370.00px;height:18px;line-height:18px;font-size:13.4px;color:#000000;left:1660.5px;transform-origin:0 50%;transform:scaleX(0.96) translateX(-100%);">13.481.804</div>
<div class="a" style="top:370.00px;height:18px;line-height:18px;font-size:13.4px;color:#000000;left:1756.5px;transform-origin:0 50%;transform:scaleX(0.96) translateX(-100%);">1.348.181</div>
<div class="a" style="top:370.00px;height:18px;line-height:18px;font-size:13.4px;color:#000000;left:1852.5px;transform-origin:0 50%;transform:scaleX(0.96) translateX(-100%);">14.829.985</div>
<div class="a" style="top:390.00px;height:18px;line-height:18px;font-size:13.4px;color:#000000;left:1053px;transform-origin:0 50%;transform:scaleX(0.96) translateX(-100%);">4</div>
<div class="a" style="top:390.00px;height:18px;line-height:18px;font-size:13.4px;color:#000000;left:1059px;transform:scaleX(0.96);transform-origin:0 50%;">10</div>
<div class="a" style="left:1117px;top:388px;width:152px;height:20px;overflow:hidden;">
<div class="a" style="left:3px;top:1px;height:20px;line-height:20px;font-size:13.4px;color:#000000;transform:scaleX(0.88);transform-origin:0 50%;">PT SUKSES MAKMUR ABADI</div></div>
<div class="a" style="top:390.00px;height:18px;line-height:18px;font-size:13.4px;color:#000000;left:1361px;transform-origin:0 50%;transform:scaleX(0.91) translateX(-100%);">2,32326E+13</div>
<div class="a" style="top:390.00px;height:18px;line-height:18px;font-size:13.4px;color:#000000;left:1480px;transform-origin:0 50%;transform:scaleX(0.93) translateX(-100%);">1,00012E+14</div>
<div class="a" style="top:390.00px;height:18px;line-height:18px;font-size:13.4px;color:#000000;left:1562.5px;transform-origin:0 50%;transform:scaleX(0.99) translateX(-100%);">23/04/2022</div>
<div class="a" style="top:390.00px;height:18px;line-height:18px;font-size:13.4px;color:#000000;left:1660.5px;transform-origin:0 50%;transform:scaleX(0.96) translateX(-100%);">28.087.092</div>
<div class="a" style="top:390.00px;height:18px;line-height:18px;font-size:13.4px;color:#000000;left:1756.5px;transform-origin:0 50%;transform:scaleX(0.96) translateX(-100%);">3.089.580</div>
<div class="a" style="top:390.00px;height:18px;line-height:18px;font-size:13.4px;color:#000000;left:1852.5px;transform-origin:0 50%;transform:scaleX(0.96) translateX(-100%);">31.176.672</div>
<div class="a" style="top:410.00px;height:18px;line-height:18px;font-size:13.4px;color:#000000;left:1053px;transform-origin:0 50%;transform:scaleX(0.96) translateX(-100%);">4</div>
<div class="a" style="top:410.00px;height:18px;line-height:18px;font-size:13.4px;color:#000000;left:1059px;transform:scaleX(0.96);transform-origin:0 50%;">10</div>
<div class="a" style="left:1117px;top:408px;width:152px;height:20px;overflow:hidden;">
<div class="a" style="left:3px;top:1px;height:20px;line-height:20px;font-size:13.4px;color:#000000;transform:scaleX(0.88);transform-origin:0 50%;">PT SUKSES MAKMUR ABADI</div></div>
<div class="a" style="top:410.00px;height:18px;line-height:18px;font-size:13.4px;color:#000000;left:1361px;transform-origin:0 50%;transform:scaleX(0.91) translateX(-100%);">2,32326E+13</div>
<div class="a" style="top:410.00px;height:18px;line-height:18px;font-size:13.4px;color:#000000;left:1480px;transform-origin:0 50%;transform:scaleX(0.93) translateX(-100%);">1,00012E+14</div>
<div class="a" style="top:410.00px;height:18px;line-height:18px;font-size:13.4px;color:#000000;left:1562.5px;transform-origin:0 50%;transform:scaleX(0.99) translateX(-100%);">23/04/2022</div>
<div class="a" style="top:410.00px;height:18px;line-height:18px;font-size:13.4px;color:#000000;left:1660.5px;transform-origin:0 50%;transform:scaleX(0.96) translateX(-100%);">36.513.220</div>
<div class="a" style="top:410.00px;height:18px;line-height:18px;font-size:13.4px;color:#000000;left:1756.5px;transform-origin:0 50%;transform:scaleX(0.96) translateX(-100%);">4.016.454</div>
<div class="a" style="top:410.00px;height:18px;line-height:18px;font-size:13.4px;color:#000000;left:1852.5px;transform-origin:0 50%;transform:scaleX(0.96) translateX(-100%);">40.529.674</div>
<div class="a" style="top:430.00px;height:18px;line-height:18px;font-size:13.4px;color:#000000;left:1053px;transform-origin:0 50%;transform:scaleX(0.96) translateX(-100%);">4</div>
<div class="a" style="top:430.00px;height:18px;line-height:18px;font-size:13.4px;color:#000000;left:1059px;transform:scaleX(0.96);transform-origin:0 50%;">10</div>
<div class="a" style="left:1117px;top:428px;width:152px;height:20px;overflow:hidden;">
<div class="a" style="left:3px;top:1px;height:20px;line-height:20px;font-size:13.4px;color:#000000;transform:scaleX(0.88);transform-origin:0 50%;">PT SUKSES MAKMUR ABADI</div></div>
<div class="a" style="top:430.00px;height:18px;line-height:18px;font-size:13.4px;color:#000000;left:1361px;transform-origin:0 50%;transform:scaleX(0.91) translateX(-100%);">2,32326E+13</div>
<div class="a" style="top:430.00px;height:18px;line-height:18px;font-size:13.4px;color:#000000;left:1480px;transform-origin:0 50%;transform:scaleX(0.93) translateX(-100%);">1,00012E+14</div>
<div class="a" style="top:430.00px;height:18px;line-height:18px;font-size:13.4px;color:#000000;left:1562.5px;transform-origin:0 50%;transform:scaleX(0.99) translateX(-100%);">18/04/2022</div>
<div class="a" style="top:430.00px;height:18px;line-height:18px;font-size:13.4px;color:#000000;left:1660.5px;transform-origin:0 50%;transform:scaleX(0.96) translateX(-100%);">11.796.579</div>
<div class="a" style="top:430.00px;height:18px;line-height:18px;font-size:13.4px;color:#000000;left:1756.5px;transform-origin:0 50%;transform:scaleX(0.96) translateX(-100%);">1.297.623</div>
<div class="a" style="top:430.00px;height:18px;line-height:18px;font-size:13.4px;color:#000000;left:1852.5px;transform-origin:0 50%;transform:scaleX(0.96) translateX(-100%);">13.094.202</div>
<div class="a" style="top:450.00px;height:18px;line-height:18px;font-size:13.4px;color:#000000;left:1053px;transform-origin:0 50%;transform:scaleX(0.96) translateX(-100%);">7</div>
<div class="a" style="top:450.00px;height:18px;line-height:18px;font-size:13.4px;color:#000000;left:1059px;transform:scaleX(0.96);transform-origin:0 50%;">10</div>
<div class="a" style="left:1117px;top:448px;width:152px;height:20px;overflow:hidden;">
<div class="a" style="left:3px;top:1px;height:20px;line-height:20px;font-size:13.4px;color:#000000;transform:scaleX(0.88);transform-origin:0 50%;">PT SUKSES MAKMUR ABADI</div></div>
<div class="a" style="top:450.00px;height:18px;line-height:18px;font-size:13.4px;color:#000000;left:1361px;transform-origin:0 50%;transform:scaleX(0.91) translateX(-100%);">2,32326E+13</div>
<div class="a" style="top:450.00px;height:18px;line-height:18px;font-size:13.4px;color:#000000;left:1480px;transform-origin:0 50%;transform:scaleX(0.93) translateX(-100%);">100052266107167</div>
<div class="a" style="top:450.00px;height:18px;line-height:18px;font-size:13.4px;color:#000000;left:1562.5px;transform-origin:0 50%;transform:scaleX(0.99) translateX(-100%);">25/07/2022</div>
<div class="a" style="top:450.00px;height:18px;line-height:18px;font-size:13.4px;color:#000000;left:1660.5px;transform-origin:0 50%;transform:scaleX(0.96) translateX(-100%);">50.384.873</div>
<div class="a" style="top:450.00px;height:18px;line-height:18px;font-size:13.4px;color:#000000;left:1756.5px;transform-origin:0 50%;transform:scaleX(0.96) translateX(-100%);">5.542.336</div>
<div class="a" style="top:450.00px;height:18px;line-height:18px;font-size:13.4px;color:#000000;left:1852.5px;transform-origin:0 50%;transform:scaleX(0.96) translateX(-100%);">55.927.209</div>
<div class="a" style="top:470.00px;height:18px;line-height:18px;font-size:13.4px;color:#000000;left:1053px;transform-origin:0 50%;transform:scaleX(0.96) translateX(-100%);">7</div>
<div class="a" style="top:470.00px;height:18px;line-height:18px;font-size:13.4px;color:#000000;left:1059px;transform:scaleX(0.96);transform-origin:0 50%;">10</div>
<div class="a" style="left:1117px;top:468px;width:152px;height:20px;overflow:hidden;">
<div class="a" style="left:3px;top:1px;height:20px;line-height:20px;font-size:13.4px;color:#000000;transform:scaleX(0.88);transform-origin:0 50%;">PT SUKSES MAKMUR ABADI</div></div>
<div class="a" style="top:470.00px;height:18px;line-height:18px;font-size:13.4px;color:#000000;left:1361px;transform-origin:0 50%;transform:scaleX(0.91) translateX(-100%);">2,32326E+13</div>
<div class="a" style="top:470.00px;height:18px;line-height:18px;font-size:13.4px;color:#000000;left:1480px;transform-origin:0 50%;transform:scaleX(0.93) translateX(-100%);">100052266107291</div>
<div class="a" style="top:470.00px;height:18px;line-height:18px;font-size:13.4px;color:#000000;left:1562.5px;transform-origin:0 50%;transform:scaleX(0.99) translateX(-100%);">05/07/2022</div>
<div class="a" style="top:470.00px;height:18px;line-height:18px;font-size:13.4px;color:#000000;left:1660.5px;transform-origin:0 50%;transform:scaleX(0.96) translateX(-100%);">7.302.644</div>
<div class="a" style="top:470.00px;height:18px;line-height:18px;font-size:13.4px;color:#000000;left:1756.5px;transform-origin:0 50%;transform:scaleX(0.96) translateX(-100%);">803.291</div>
<div class="a" style="top:470.00px;height:18px;line-height:18px;font-size:13.4px;color:#000000;left:1852.5px;transform-origin:0 50%;transform:scaleX(0.96) translateX(-100%);">8.105.935</div>
<div class="a" style="top:490.00px;height:18px;line-height:18px;font-size:13.4px;color:#000000;left:1053px;transform-origin:0 50%;transform:scaleX(0.96) translateX(-100%);">7</div>
<div class="a" style="top:490.00px;height:18px;line-height:18px;font-size:13.4px;color:#000000;left:1059px;transform:scaleX(0.96);transform-origin:0 50%;">10</div>
<div class="a" style="left:1117px;top:488px;width:152px;height:20px;overflow:hidden;">
<div class="a" style="left:3px;top:1px;height:20px;line-height:20px;font-size:13.4px;color:#000000;transform:scaleX(0.88);transform-origin:0 50%;">PT SUKSES MAKMUR ABADI</div></div>
<div class="a" style="top:490.00px;height:18px;line-height:18px;font-size:13.4px;color:#000000;left:1361px;transform-origin:0 50%;transform:scaleX(0.91) translateX(-100%);">2,32326E+13</div>
<div class="a" style="top:490.00px;height:18px;line-height:18px;font-size:13.4px;color:#000000;left:1480px;transform-origin:0 50%;transform:scaleX(0.93) translateX(-100%);">100052266107094</div>
<div class="a" style="top:490.00px;height:18px;line-height:18px;font-size:13.4px;color:#000000;left:1562.5px;transform-origin:0 50%;transform:scaleX(0.99) translateX(-100%);">20/07/2022</div>
<div class="a" style="top:490.00px;height:18px;line-height:18px;font-size:13.4px;color:#000000;left:1660.5px;transform-origin:0 50%;transform:scaleX(0.96) translateX(-100%);">127.908.617</div>
<div class="a" style="top:490.00px;height:18px;line-height:18px;font-size:13.4px;color:#000000;left:1756.5px;transform-origin:0 50%;transform:scaleX(0.96) translateX(-100%);">14.069.948</div>
<div class="a" style="top:490.00px;height:18px;line-height:18px;font-size:13.4px;color:#000000;left:1852.5px;transform-origin:0 50%;transform:scaleX(0.96) translateX(-100%);">141.978.565</div>
<div class="a" style="top:510.00px;height:18px;line-height:18px;font-size:13.4px;color:#000000;left:1053px;transform-origin:0 50%;transform:scaleX(0.96) translateX(-100%);">8</div>
<div class="a" style="top:510.00px;height:18px;line-height:18px;font-size:13.4px;color:#000000;left:1059px;transform:scaleX(0.96);transform-origin:0 50%;">10</div>
<div class="a" style="left:1117px;top:508px;width:152px;height:20px;overflow:hidden;">
<div class="a" style="left:3px;top:1px;height:20px;line-height:20px;font-size:13.4px;color:#000000;transform:scaleX(0.88);transform-origin:0 50%;">PT SUKSES MAKMUR ABADI</div></div>
<div class="a" style="top:510.00px;height:18px;line-height:18px;font-size:13.4px;color:#000000;left:1361px;transform-origin:0 50%;transform:scaleX(0.91) translateX(-100%);">2,32326E+13</div>
<div class="a" style="top:510.00px;height:18px;line-height:18px;font-size:13.4px;color:#000000;left:1480px;transform-origin:0 50%;transform:scaleX(0.93) translateX(-100%);">100052266121839</div>
<div class="a" style="top:510.00px;height:18px;line-height:18px;font-size:13.4px;color:#000000;left:1562.5px;transform-origin:0 50%;transform:scaleX(0.99) translateX(-100%);">03/08/2022</div>
<div class="a" style="top:510.00px;height:18px;line-height:18px;font-size:13.4px;color:#000000;left:1660.5px;transform-origin:0 50%;transform:scaleX(0.96) translateX(-100%);">8.341.866</div>
<div class="a" style="top:510.00px;height:18px;line-height:18px;font-size:13.4px;color:#000000;left:1756.5px;transform-origin:0 50%;transform:scaleX(0.96) translateX(-100%);">917.606</div>
<div class="a" style="top:510.00px;height:18px;line-height:18px;font-size:13.4px;color:#000000;left:1852.5px;transform-origin:0 50%;transform:scaleX(0.96) translateX(-100%);">9.259.472</div>
<div class="a" style="top:530.00px;height:18px;line-height:18px;font-size:13.4px;color:#000000;left:1053px;transform-origin:0 50%;transform:scaleX(0.96) translateX(-100%);">8</div>
<div class="a" style="top:530.00px;height:18px;line-height:18px;font-size:13.4px;color:#000000;left:1059px;transform:scaleX(0.96);transform-origin:0 50%;">10</div>
<div class="a" style="left:1117px;top:528px;width:152px;height:20px;overflow:hidden;">
<div class="a" style="left:3px;top:1px;height:20px;line-height:20px;font-size:13.4px;color:#000000;transform:scaleX(0.88);transform-origin:0 50%;">PT SUKSES MAKMUR ABADI</div></div>
<div class="a" style="top:530.00px;height:18px;line-height:18px;font-size:13.4px;color:#000000;left:1361px;transform-origin:0 50%;transform:scaleX(0.91) translateX(-100%);">2,32326E+13</div>
<div class="a" style="top:530.00px;height:18px;line-height:18px;font-size:13.4px;color:#000000;left:1480px;transform-origin:0 50%;transform:scaleX(0.93) translateX(-100%);">100052266121840</div>
<div class="a" style="top:530.00px;height:18px;line-height:18px;font-size:13.4px;color:#000000;left:1562.5px;transform-origin:0 50%;transform:scaleX(0.99) translateX(-100%);">04/08/2022</div>
<div class="a" style="top:530.00px;height:18px;line-height:18px;font-size:13.4px;color:#000000;left:1660.5px;transform-origin:0 50%;transform:scaleX(0.96) translateX(-100%);">9.009.216</div>
<div class="a" style="top:530.00px;height:18px;line-height:18px;font-size:13.4px;color:#000000;left:1756.5px;transform-origin:0 50%;transform:scaleX(0.96) translateX(-100%);">991.013</div>
<div class="a" style="top:530.00px;height:18px;line-height:18px;font-size:13.4px;color:#000000;left:1852.5px;transform-origin:0 50%;transform:scaleX(0.96) translateX(-100%);">10.000.229</div>
<div class="a" style="top:550.00px;height:18px;line-height:18px;font-size:13.4px;color:#000000;left:1053px;transform-origin:0 50%;transform:scaleX(0.96) translateX(-100%);">9</div>
<div class="a" style="top:550.00px;height:18px;line-height:18px;font-size:13.4px;color:#000000;left:1059px;transform:scaleX(0.96);transform-origin:0 50%;">10</div>
<div class="a" style="left:1117px;top:548px;width:152px;height:20px;overflow:hidden;">
<div class="a" style="left:3px;top:1px;height:20px;line-height:20px;font-size:13.4px;color:#000000;transform:scaleX(0.88);transform-origin:0 50%;">PT SUKSES MAKMUR ABADI</div></div>
<div class="a" style="top:550.00px;height:18px;line-height:18px;font-size:13.4px;color:#000000;left:1361px;transform-origin:0 50%;transform:scaleX(0.91) translateX(-100%);">2,32326E+13</div>
<div class="a" style="top:550.00px;height:18px;line-height:18px;font-size:13.4px;color:#000000;left:1480px;transform-origin:0 50%;transform:scaleX(0.93) translateX(-100%);">100072285828808</div>
<div class="a" style="top:550.00px;height:18px;line-height:18px;font-size:13.4px;color:#000000;left:1562.5px;transform-origin:0 50%;transform:scaleX(0.99) translateX(-100%);">27/09/2022</div>
<div class="a" style="top:550.00px;height:18px;line-height:18px;font-size:13.4px;color:#000000;left:1660.5px;transform-origin:0 50%;transform:scaleX(0.96) translateX(-100%);">9.849.699</div>
<div class="a" style="top:550.00px;height:18px;line-height:18px;font-size:13.4px;color:#000000;left:1756.5px;transform-origin:0 50%;transform:scaleX(0.96) translateX(-100%);">1.083.467</div>
<div class="a" style="top:550.00px;height:18px;line-height:18px;font-size:13.4px;color:#000000;left:1852.5px;transform-origin:0 50%;transform:scaleX(0.96) translateX(-100%);">10.933.166</div>
<div class="a" style="top:570.00px;height:18px;line-height:18px;font-size:13.4px;color:#000000;left:1053px;transform-origin:0 50%;transform:scaleX(0.96) translateX(-100%);">10</div>
<div class="a" style="top:570.00px;height:18px;line-height:18px;font-size:13.4px;color:#000000;left:1059px;transform:scaleX(0.96);transform-origin:0 50%;">10</div>
<div class="a" style="left:1117px;top:568px;width:152px;height:20px;overflow:hidden;">
<div class="a" style="left:3px;top:1px;height:20px;line-height:20px;font-size:13.4px;color:#000000;transform:scaleX(0.88);transform-origin:0 50%;">PT SUKSES MAKMUR ABADI</div></div>
<div class="a" style="top:570.00px;height:18px;line-height:18px;font-size:13.4px;color:#000000;left:1361px;transform-origin:0 50%;transform:scaleX(0.91) translateX(-100%);">2,32326E+13</div>
<div class="a" style="top:570.00px;height:18px;line-height:18px;font-size:13.4px;color:#000000;left:1480px;transform-origin:0 50%;transform:scaleX(0.93) translateX(-100%);">100072285828371</div>
<div class="a" style="top:570.00px;height:18px;line-height:18px;font-size:13.4px;color:#000000;left:1562.5px;transform-origin:0 50%;transform:scaleX(0.99) translateX(-100%);">05/10/2022</div>
<div class="a" style="top:570.00px;height:18px;line-height:18px;font-size:13.4px;color:#000000;left:1660.5px;transform-origin:0 50%;transform:scaleX(0.96) translateX(-100%);">5.472.055</div>
<div class="a" style="top:570.00px;height:18px;line-height:18px;font-size:13.4px;color:#000000;left:1756.5px;transform-origin:0 50%;transform:scaleX(0.96) translateX(-100%);">601.926</div>
<div class="a" style="top:570.00px;height:18px;line-height:18px;font-size:13.4px;color:#000000;left:1852.5px;transform-origin:0 50%;transform:scaleX(0.96) translateX(-100%);">6.073.981</div>
<div class="a" style="top:590.00px;height:18px;line-height:18px;font-size:13.4px;color:#000000;left:1053px;transform-origin:0 50%;transform:scaleX(0.96) translateX(-100%);">11</div>
<div class="a" style="top:590.00px;height:18px;line-height:18px;font-size:13.4px;color:#000000;left:1059px;transform:scaleX(0.96);transform-origin:0 50%;">10</div>
<div class="a" style="left:1117px;top:588px;width:152px;height:20px;overflow:hidden;">
<div class="a" style="left:3px;top:1px;height:20px;line-height:20px;font-size:13.4px;color:#000000;transform:scaleX(0.88);transform-origin:0 50%;">PT SUKSES MAKMUR ABADI</div></div>
<div class="a" style="top:590.00px;height:18px;line-height:18px;font-size:13.4px;color:#000000;left:1361px;transform-origin:0 50%;transform:scaleX(0.91) translateX(-100%);">2,32326E+13</div>
<div class="a" style="top:590.00px;height:18px;line-height:18px;font-size:13.4px;color:#000000;left:1480px;transform-origin:0 50%;transform:scaleX(0.93) translateX(-100%);">100092209077855</div>
<div class="a" style="top:590.00px;height:18px;line-height:18px;font-size:13.4px;color:#000000;left:1562.5px;transform-origin:0 50%;transform:scaleX(0.99) translateX(-100%);">21/11/2022</div>
<div class="a" style="top:590.00px;height:18px;line-height:18px;font-size:13.4px;color:#000000;left:1660.5px;transform-origin:0 50%;transform:scaleX(0.96) translateX(-100%);">19.234.474</div>
<div class="a" style="top:590.00px;height:18px;line-height:18px;font-size:13.4px;color:#000000;left:1756.5px;transform-origin:0 50%;transform:scaleX(0.96) translateX(-100%);">2.115.792</div>
<div class="a" style="top:590.00px;height:18px;line-height:18px;font-size:13.4px;color:#000000;left:1852.5px;transform-origin:0 50%;transform:scaleX(0.96) translateX(-100%);">21.350.266</div>
<div class="a" style="top:610.00px;height:18px;line-height:18px;font-size:13.4px;color:#000000;left:1053px;transform-origin:0 50%;transform:scaleX(0.96) translateX(-100%);">12</div>
<div class="a" style="top:610.00px;height:18px;line-height:18px;font-size:13.4px;color:#000000;left:1059px;transform:scaleX(0.96);transform-origin:0 50%;">10</div>
<div class="a" style="left:1117px;top:608px;width:152px;height:20px;overflow:hidden;">
<div class="a" style="left:3px;top:1px;height:20px;line-height:20px;font-size:13.4px;color:#000000;transform:scaleX(0.88);transform-origin:0 50%;">PT SUKSES MAKMUR ABADI</div></div>
<div class="a" style="top:610.00px;height:18px;line-height:18px;font-size:13.4px;color:#000000;left:1275.5px;transform:scaleX(0.9338);transform-origin:0 50%;">############</div>
<div class="a" style="top:610.00px;height:18px;line-height:18px;font-size:13.4px;color:#000000;left:1480px;transform-origin:0 50%;transform:scaleX(0.93) translateX(-100%);">100092209077509</div>
<div class="a" style="top:610.00px;height:18px;line-height:18px;font-size:13.4px;color:#000000;left:1562.5px;transform-origin:0 50%;transform:scaleX(0.99) translateX(-100%);">02/12/2022</div>
<div class="a" style="top:610.00px;height:18px;line-height:18px;font-size:13.4px;color:#000000;left:1660.5px;transform-origin:0 50%;transform:scaleX(0.96) translateX(-100%);">1.304.489</div>
<div class="a" style="top:610.00px;height:18px;line-height:18px;font-size:13.4px;color:#000000;left:1756.5px;transform-origin:0 50%;transform:scaleX(0.96) translateX(-100%);">143.494</div>
<div class="a" style="top:610.00px;height:18px;line-height:18px;font-size:13.4px;color:#000000;left:1852.5px;transform-origin:0 50%;transform:scaleX(0.96) translateX(-100%);">1.447.983</div>
<div class="a" style="top:630.00px;height:18px;line-height:18px;font-size:13.4px;color:#000000;left:1053px;transform-origin:0 50%;transform:scaleX(0.96) translateX(-100%);">12</div>
<div class="a" style="top:630.00px;height:18px;line-height:18px;font-size:13.4px;color:#000000;left:1059px;transform:scaleX(0.96);transform-origin:0 50%;">10</div>
<div class="a" style="left:1117px;top:628px;width:152px;height:20px;overflow:hidden;">
<div class="a" style="left:3px;top:1px;height:20px;line-height:20px;font-size:13.4px;color:#000000;transform:scaleX(0.88);transform-origin:0 50%;">PT SUKSES MAKMUR ABADI</div></div>
<div class="a" style="top:630.00px;height:18px;line-height:18px;font-size:13.4px;color:#000000;left:1275.5px;transform:scaleX(0.9338);transform-origin:0 50%;">############</div>
<div class="a" style="top:630.00px;height:18px;line-height:18px;font-size:13.4px;color:#000000;left:1480px;transform-origin:0 50%;transform:scaleX(0.93) translateX(-100%);">100092209100322</div>
<div class="a" style="top:630.00px;height:18px;line-height:18px;font-size:13.4px;color:#000000;left:1562.5px;transform-origin:0 50%;transform:scaleX(0.99) translateX(-100%);">28/12/2022</div>
<div class="a" style="top:630.00px;height:18px;line-height:18px;font-size:13.4px;color:#000000;left:1660.5px;transform-origin:0 50%;transform:scaleX(0.96) translateX(-100%);">202.466.039</div>
<div class="a" style="top:630.00px;height:18px;line-height:18px;font-size:13.4px;color:#000000;left:1756.5px;transform-origin:0 50%;transform:scaleX(0.96) translateX(-100%);">22.271.265</div>
<div class="a" style="top:630.00px;height:18px;line-height:18px;font-size:13.4px;color:#000000;left:1852.5px;transform-origin:0 50%;transform:scaleX(0.96) translateX(-100%);">224.737.304</div>
<div class="a" style="left:995px;top:487px;width:769px;height:2px;background:repeating-linear-gradient(90deg,#ffffff 0 2px,transparent 2px 4px,#2d6040 4px 7px,transparent 7px 9px);"></div>
<div class="a" style="left:995px;top:506px;width:769px;height:2px;background:repeating-linear-gradient(90deg,#ffffff 0 2px,transparent 2px 4px,#2d6040 4px 7px,transparent 7px 9px);"></div>
<div class="a" style="left:1762px;top:487px;width:2px;height:21px;background:repeating-linear-gradient(180deg,#ffffff 0 2px,transparent 2px 4px,#2d6040 4px 7px,transparent 7px 9px);"></div>
</div></div>
<div class="a" style="left:962px;top:208px;width:933px;height:20px;background:#e6e6e6;"></div>
<svg class="a" style="left:979px;top:213px;" width="12" height="12" viewBox="0 0 12 12"><path d="M11 1 V11 H1Z" fill="#b4b4b4"/></svg>
<div class="a" style="left:1056px;top:208px;width:1px;height:20px;background:#b8b8b8;"></div>
<div class="a" style="top:210.00px;height:18px;line-height:18px;font-size:13.4px;color:#262626;left:1025.5px;transform-origin:0 50%;transform:translateX(-50%);">A</div>
<div class="a" style="left:1117px;top:208px;width:1px;height:20px;background:#b8b8b8;"></div>
<div class="a" style="top:210.00px;height:18px;line-height:18px;font-size:13.4px;color:#262626;left:1086.5px;transform-origin:0 50%;transform:translateX(-50%);">B</div>
<div class="a" style="left:1269px;top:208px;width:1px;height:20px;background:#b8b8b8;"></div>
<div class="a" style="top:210.00px;height:18px;line-height:18px;font-size:13.4px;color:#262626;left:1193.0px;transform-origin:0 50%;transform:translateX(-50%);">C</div>
<div class="a" style="left:1364px;top:208px;width:1px;height:20px;background:#b8b8b8;"></div>
<div class="a" style="top:210.00px;height:18px;line-height:18px;font-size:13.4px;color:#262626;left:1316.5px;transform-origin:0 50%;transform:translateX(-50%);">D</div>
<div class="a" style="left:1483px;top:208px;width:1px;height:20px;background:#b8b8b8;"></div>
<div class="a" style="top:210.00px;height:18px;line-height:18px;font-size:13.4px;color:#262626;left:1423.5px;transform-origin:0 50%;transform:translateX(-50%);">E</div>
<div class="a" style="left:1565px;top:208px;width:1px;height:20px;background:#b8b8b8;"></div>
<div class="a" style="top:210.00px;height:18px;line-height:18px;font-size:13.4px;color:#262626;left:1524.0px;transform-origin:0 50%;transform:translateX(-50%);">F</div>
<div class="a" style="left:1668px;top:208px;width:1px;height:20px;background:#b8b8b8;"></div>
<div class="a" style="top:210.00px;height:18px;line-height:18px;font-size:13.4px;color:#262626;left:1616.5px;transform-origin:0 50%;transform:translateX(-50%);">G</div>
<div class="a" style="left:1764px;top:208px;width:1px;height:20px;background:#b8b8b8;"></div>
<div class="a" style="top:210.00px;height:18px;line-height:18px;font-size:13.4px;color:#262626;left:1716.0px;transform-origin:0 50%;transform:translateX(-50%);">H</div>
<div class="a" style="left:1860px;top:208px;width:1px;height:20px;background:#b8b8b8;"></div>
<div class="a" style="top:210.00px;height:18px;line-height:18px;font-size:13.4px;color:#262626;left:1812.0px;transform-origin:0 50%;transform:translateX(-50%);">I</div>
<div class="a" style="left:1895px;top:208px;width:1px;height:20px;background:#b8b8b8;"></div>
<div class="a" style="top:210.00px;height:18px;line-height:18px;font-size:13.4px;color:#262626;left:1891px;transform-origin:0 50%;transform:translateX(-50%);">J</div>
<div class="a" style="left:995px;top:208px;width:1px;height:20px;background:#bdbdbd;"></div>
<div class="a" style="left:962px;top:227px;width:933px;height:1px;background:#bdbdbd;"></div>
<div class="a" style="left:964px;top:228px;width:31px;height:20px;background:#e6e6e6;"></div>
<div class="a" style="left:964px;top:247px;width:31px;height:1px;background:#b8b8b8;"></div>
<div class="a" style="top:228.50px;height:18px;line-height:18px;font-size:13.4px;color:#262626;left:979.5px;transform-origin:0 50%;transform:scaleX(0.92) translateX(-50%);">1</div>
<div class="a" style="left:964px;top:248px;width:31px;height:20px;background:#e6e6e6;"></div>
<div class="a" style="left:964px;top:267px;width:31px;height:1px;background:#b8b8b8;"></div>
<div class="a" style="top:248.50px;height:18px;line-height:18px;font-size:13.4px;color:#262626;left:979.5px;transform-origin:0 50%;transform:scaleX(0.92) translateX(-50%);">2</div>
<div class="a" style="left:964px;top:268px;width:31px;height:20px;background:#e6e6e6;"></div>
<div class="a" style="left:964px;top:287px;width:31px;height:1px;background:#b8b8b8;"></div>
<div class="a" style="top:268.50px;height:18px;line-height:18px;font-size:13.4px;color:#2b2ba0;left:979.5px;transform-origin:0 50%;transform:scaleX(0.92) translateX(-50%);">167</div>
<div class="a" style="left:964px;top:288px;width:31px;height:20px;background:#e6e6e6;"></div>
<div class="a" style="left:964px;top:307px;width:31px;height:1px;background:#b8b8b8;"></div>
<div class="a" style="top:288.50px;height:18px;line-height:18px;font-size:13.4px;color:#2b2ba0;left:979.5px;transform-origin:0 50%;transform:scaleX(0.92) translateX(-50%);">231</div>
<div class="a" style="left:964px;top:308px;width:31px;height:20px;background:#e6e6e6;"></div>
<div class="a" style="left:964px;top:327px;width:31px;height:1px;background:#b8b8b8;"></div>
<div class="a" style="top:308.50px;height:18px;line-height:18px;font-size:13.4px;color:#2b2ba0;left:979.5px;transform-origin:0 50%;transform:scaleX(0.92) translateX(-50%);">235</div>
<div class="a" style="left:964px;top:328px;width:31px;height:20px;background:#e6e6e6;"></div>
<div class="a" style="left:964px;top:347px;width:31px;height:1px;background:#b8b8b8;"></div>
<div class="a" style="top:328.50px;height:18px;line-height:18px;font-size:13.4px;color:#2b2ba0;left:979.5px;transform-origin:0 50%;transform:scaleX(0.92) translateX(-50%);">261</div>
<div class="a" style="left:964px;top:348px;width:31px;height:20px;background:#e6e6e6;"></div>
<div class="a" style="left:964px;top:367px;width:31px;height:1px;background:#b8b8b8;"></div>
<div class="a" style="top:348.50px;height:18px;line-height:18px;font-size:13.4px;color:#2b2ba0;left:979.5px;transform-origin:0 50%;transform:scaleX(0.92) translateX(-50%);">265</div>
<div class="a" style="left:964px;top:368px;width:31px;height:20px;background:#e6e6e6;"></div>
<div class="a" style="left:964px;top:387px;width:31px;height:1px;background:#b8b8b8;"></div>
<div class="a" style="top:368.50px;height:18px;line-height:18px;font-size:13.4px;color:#2b2ba0;left:979.5px;transform-origin:0 50%;transform:scaleX(0.92) translateX(-50%);">269</div>
<div class="a" style="left:964px;top:388px;width:31px;height:20px;background:#e6e6e6;"></div>
<div class="a" style="left:964px;top:407px;width:31px;height:1px;background:#b8b8b8;"></div>
<div class="a" style="top:388.50px;height:18px;line-height:18px;font-size:13.4px;color:#2b2ba0;left:979.5px;transform-origin:0 50%;transform:scaleX(0.92) translateX(-50%);">532</div>
<div class="a" style="left:964px;top:408px;width:31px;height:20px;background:#e6e6e6;"></div>
<div class="a" style="left:964px;top:427px;width:31px;height:1px;background:#b8b8b8;"></div>
<div class="a" style="top:408.50px;height:18px;line-height:18px;font-size:13.4px;color:#2b2ba0;left:979.5px;transform-origin:0 50%;transform:scaleX(0.92) translateX(-50%);">554</div>
<div class="a" style="left:964px;top:428px;width:31px;height:20px;background:#e6e6e6;"></div>
<div class="a" style="left:964px;top:447px;width:31px;height:1px;background:#b8b8b8;"></div>
<div class="a" style="top:428.50px;height:18px;line-height:18px;font-size:13.4px;color:#2b2ba0;left:979.5px;transform-origin:0 50%;transform:scaleX(0.92) translateX(-50%);">648</div>
<div class="a" style="left:964px;top:448px;width:31px;height:20px;background:#e6e6e6;"></div>
<div class="a" style="left:964px;top:467px;width:31px;height:1px;background:#b8b8b8;"></div>
<div class="a" style="top:448.50px;height:18px;line-height:18px;font-size:13.4px;color:#2b2ba0;left:979.5px;transform-origin:0 50%;transform:scaleX(0.92) translateX(-50%);">930</div>
<div class="a" style="left:964px;top:468px;width:31px;height:20px;background:#e6e6e6;"></div>
<div class="a" style="left:964px;top:487px;width:31px;height:1px;background:#b8b8b8;"></div>
<div class="a" style="top:468.50px;height:18px;line-height:18px;font-size:13.4px;color:#2b2ba0;left:979.5px;transform-origin:0 50%;transform:scaleX(0.92) translateX(-50%);">1024</div>
<div class="a" style="left:964px;top:488px;width:31px;height:20px;background:#e6e6e6;"></div>
<div class="a" style="left:964px;top:507px;width:31px;height:1px;background:#b8b8b8;"></div>
<div class="a" style="top:488.50px;height:18px;line-height:18px;font-size:13.4px;color:#2b2ba0;left:979.5px;transform-origin:0 50%;transform:scaleX(0.92) translateX(-50%);">1076</div>
<div class="a" style="left:964px;top:508px;width:31px;height:20px;background:#e6e6e6;"></div>
<div class="a" style="left:964px;top:527px;width:31px;height:1px;background:#b8b8b8;"></div>
<div class="a" style="top:508.50px;height:18px;line-height:18px;font-size:13.4px;color:#2b2ba0;left:979.5px;transform-origin:0 50%;transform:scaleX(0.92) translateX(-50%);">1185</div>
<div class="a" style="left:964px;top:528px;width:31px;height:20px;background:#e6e6e6;"></div>
<div class="a" style="left:964px;top:547px;width:31px;height:1px;background:#b8b8b8;"></div>
<div class="a" style="top:528.50px;height:18px;line-height:18px;font-size:13.4px;color:#2b2ba0;left:979.5px;transform-origin:0 50%;transform:scaleX(0.92) translateX(-50%);">1188</div>
<div class="a" style="left:964px;top:548px;width:31px;height:20px;background:#e6e6e6;"></div>
<div class="a" style="left:964px;top:567px;width:31px;height:1px;background:#b8b8b8;"></div>
<div class="a" style="top:548.50px;height:18px;line-height:18px;font-size:13.4px;color:#2b2ba0;left:979.5px;transform-origin:0 50%;transform:scaleX(0.92) translateX(-50%);">1238</div>
<div class="a" style="left:964px;top:568px;width:31px;height:20px;background:#e6e6e6;"></div>
<div class="a" style="left:964px;top:587px;width:31px;height:1px;background:#b8b8b8;"></div>
<div class="a" style="top:568.50px;height:18px;line-height:18px;font-size:13.4px;color:#2b2ba0;left:979.5px;transform-origin:0 50%;transform:scaleX(0.92) translateX(-50%);">1404</div>
<div class="a" style="left:964px;top:588px;width:31px;height:20px;background:#e6e6e6;"></div>
<div class="a" style="left:964px;top:607px;width:31px;height:1px;background:#b8b8b8;"></div>
<div class="a" style="top:588.50px;height:18px;line-height:18px;font-size:13.4px;color:#2b2ba0;left:979.5px;transform-origin:0 50%;transform:scaleX(0.92) translateX(-50%);">1523</div>
<div class="a" style="left:964px;top:608px;width:31px;height:20px;background:#e6e6e6;"></div>
<div class="a" style="left:964px;top:627px;width:31px;height:1px;background:#b8b8b8;"></div>
<div class="a" style="top:608.50px;height:18px;line-height:18px;font-size:13.4px;color:#2b2ba0;left:979.5px;transform-origin:0 50%;transform:scaleX(0.92) translateX(-50%);">1581</div>
<div class="a" style="left:964px;top:628px;width:31px;height:20px;background:#e6e6e6;"></div>
<div class="a" style="left:964px;top:647px;width:31px;height:1px;background:#b8b8b8;"></div>
<div class="a" style="top:628.50px;height:18px;line-height:18px;font-size:13.4px;color:#2b2ba0;left:979.5px;transform-origin:0 50%;transform:scaleX(0.92) translateX(-50%);">1617</div>
<div class="a" style="left:964px;top:648px;width:31px;height:20px;background:#e6e6e6;"></div>
<div class="a" style="left:964px;top:667px;width:31px;height:1px;background:#b8b8b8;"></div>
<div class="a" style="top:648.50px;height:18px;line-height:18px;font-size:13.4px;color:#262626;left:979.5px;transform-origin:0 50%;transform:scaleX(0.92) translateX(-50%);">1703</div>
<div class="a" style="left:964px;top:668px;width:31px;height:20px;background:#e6e6e6;"></div>
<div class="a" style="left:964px;top:687px;width:31px;height:1px;background:#b8b8b8;"></div>
<div class="a" style="top:668.50px;height:18px;line-height:18px;font-size:13.4px;color:#262626;left:979.5px;transform-origin:0 50%;transform:scaleX(0.92) translateX(-50%);">1704</div>
<div class="a" style="left:964px;top:688px;width:31px;height:20px;background:#e6e6e6;"></div>
<div class="a" style="left:964px;top:707px;width:31px;height:1px;background:#b8b8b8;"></div>
<div class="a" style="top:688.50px;height:18px;line-height:18px;font-size:13.4px;color:#262626;left:979.5px;transform-origin:0 50%;transform:scaleX(0.92) translateX(-50%);">1705</div>
<div class="a" style="left:964px;top:708px;width:31px;height:20px;background:#e6e6e6;"></div>
<div class="a" style="left:964px;top:727px;width:31px;height:1px;background:#b8b8b8;"></div>
<div class="a" style="top:708.50px;height:18px;line-height:18px;font-size:13.4px;color:#262626;left:979.5px;transform-origin:0 50%;transform:scaleX(0.92) translateX(-50%);">1706</div>
<div class="a" style="left:964px;top:728px;width:31px;height:20px;background:#e6e6e6;"></div>
<div class="a" style="left:964px;top:747px;width:31px;height:1px;background:#b8b8b8;"></div>
<div class="a" style="top:728.50px;height:18px;line-height:18px;font-size:13.4px;color:#262626;left:979.5px;transform-origin:0 50%;transform:scaleX(0.92) translateX(-50%);">1707</div>
<div class="a" style="left:964px;top:748px;width:31px;height:20px;background:#e6e6e6;"></div>
<div class="a" style="left:964px;top:767px;width:31px;height:1px;background:#b8b8b8;"></div>
<div class="a" style="top:748.50px;height:18px;line-height:18px;font-size:13.4px;color:#262626;left:979.5px;transform-origin:0 50%;transform:scaleX(0.92) translateX(-50%);">1708</div>
<div class="a" style="left:964px;top:768px;width:31px;height:20px;background:#e6e6e6;"></div>
<div class="a" style="left:964px;top:787px;width:31px;height:1px;background:#b8b8b8;"></div>
<div class="a" style="top:768.50px;height:18px;line-height:18px;font-size:13.4px;color:#262626;left:979.5px;transform-origin:0 50%;transform:scaleX(0.92) translateX(-50%);">1709</div>
<div class="a" style="left:964px;top:788px;width:31px;height:20px;background:#e6e6e6;"></div>
<div class="a" style="left:964px;top:807px;width:31px;height:1px;background:#b8b8b8;"></div>
<div class="a" style="top:788.50px;height:18px;line-height:18px;font-size:13.4px;color:#262626;left:979.5px;transform-origin:0 50%;transform:scaleX(0.92) translateX(-50%);">1710</div>
<div class="a" style="left:964px;top:808px;width:31px;height:20px;background:#e6e6e6;"></div>
<div class="a" style="left:964px;top:827px;width:31px;height:1px;background:#b8b8b8;"></div>
<div class="a" style="top:808.50px;height:18px;line-height:18px;font-size:13.4px;color:#262626;left:979.5px;transform-origin:0 50%;transform:scaleX(0.92) translateX(-50%);">1711</div>
<div class="a" style="left:964px;top:828px;width:31px;height:20px;background:#e6e6e6;"></div>
<div class="a" style="left:964px;top:847px;width:31px;height:1px;background:#b8b8b8;"></div>
<div class="a" style="top:828.50px;height:18px;line-height:18px;font-size:13.4px;color:#262626;left:979.5px;transform-origin:0 50%;transform:scaleX(0.92) translateX(-50%);">1712</div>
<div class="a" style="left:964px;top:848px;width:31px;height:20px;background:#e6e6e6;"></div>
<div class="a" style="left:964px;top:867px;width:31px;height:1px;background:#b8b8b8;"></div>
<div class="a" style="top:848.50px;height:18px;line-height:18px;font-size:13.4px;color:#262626;left:979.5px;transform-origin:0 50%;transform:scaleX(0.92) translateX(-50%);">1713</div>
<div class="a" style="left:964px;top:868px;width:31px;height:20px;background:#e6e6e6;"></div>
<div class="a" style="left:964px;top:887px;width:31px;height:1px;background:#b8b8b8;"></div>
<div class="a" style="top:868.50px;height:18px;line-height:18px;font-size:13.4px;color:#262626;left:979.5px;transform-origin:0 50%;transform:scaleX(0.92) translateX(-50%);">1714</div>
<div class="a" style="left:964px;top:888px;width:31px;height:20px;background:#e6e6e6;"></div>
<div class="a" style="left:964px;top:907px;width:31px;height:1px;background:#b8b8b8;"></div>
<div class="a" style="top:888.50px;height:18px;line-height:18px;font-size:13.4px;color:#262626;left:979.5px;transform-origin:0 50%;transform:scaleX(0.92) translateX(-50%);">1715</div>
<div class="a" style="left:964px;top:908px;width:31px;height:20px;background:#e6e6e6;"></div>
<div class="a" style="left:964px;top:927px;width:31px;height:1px;background:#b8b8b8;"></div>
<div class="a" style="top:908.50px;height:18px;line-height:18px;font-size:13.4px;color:#262626;left:979.5px;transform-origin:0 50%;transform:scaleX(0.92) translateX(-50%);">1716</div>
<div class="a" style="left:964px;top:928px;width:31px;height:20px;background:#e6e6e6;"></div>
<div class="a" style="left:964px;top:947px;width:31px;height:1px;background:#b8b8b8;"></div>
<div class="a" style="top:928.50px;height:18px;line-height:18px;font-size:13.4px;color:#262626;left:979.5px;transform-origin:0 50%;transform:scaleX(0.92) translateX(-50%);">1717</div>
<div class="a" style="left:964px;top:948px;width:31px;height:20px;background:#e6e6e6;"></div>
<div class="a" style="left:964px;top:967px;width:31px;height:1px;background:#b8b8b8;"></div>
<div class="a" style="top:948.50px;height:18px;line-height:18px;font-size:13.4px;color:#262626;left:979.5px;transform-origin:0 50%;transform:scaleX(0.92) translateX(-50%);">1718</div>
<div class="a" style="left:964px;top:968px;width:31px;height:20px;background:#e6e6e6;"></div>
<div class="a" style="left:964px;top:987px;width:31px;height:1px;background:#b8b8b8;"></div>
<div class="a" style="top:968.50px;height:18px;line-height:18px;font-size:13.4px;color:#262626;left:979.5px;transform-origin:0 50%;transform:scaleX(0.92) translateX(-50%);">1719</div>
<div class="a" style="left:995px;top:228px;width:1px;height:760px;background:#bdbdbd;"></div>
<div class="a" style="left:964px;top:285px;width:30px;height:5px;background:#e6e6e6;"></div>
<div class="a" style="left:964px;top:285px;width:30px;height:1px;background:#a8a8a8;"></div>
<div class="a" style="left:964px;top:289px;width:30px;height:1px;background:#a8a8a8;"></div>
<div class="a" style="left:964px;top:305px;width:30px;height:5px;background:#e6e6e6;"></div>
<div class="a" style="left:964px;top:305px;width:30px;height:1px;background:#a8a8a8;"></div>
<div class="a" style="left:964px;top:309px;width:30px;height:1px;background:#a8a8a8;"></div>
<div class="a" style="left:964px;top:325px;width:30px;height:5px;background:#e6e6e6;"></div>
<div class="a" style="left:964px;top:325px;width:30px;height:1px;background:#a8a8a8;"></div>
<div class="a" style="left:964px;top:329px;width:30px;height:1px;background:#a8a8a8;"></div>
<div class="a" style="left:964px;top:345px;width:30px;height:5px;background:#e6e6e6;"></div>
<div class="a" style="left:964px;top:345px;width:30px;height:1px;background:#a8a8a8;"></div>
<div class="a" style="left:964px;top:349px;width:30px;height:1px;background:#a8a8a8;"></div>
<div class="a" style="left:964px;top:365px;width:30px;height:5px;background:#e6e6e6;"></div>
<div class="a" style="left:964px;top:365px;width:30px;height:1px;background:#a8a8a8;"></div>
<div class="a" style="left:964px;top:369px;width:30px;height:1px;background:#a8a8a8;"></div>
<div class="a" style="left:964px;top:385px;width:30px;height:5px;background:#e6e6e6;"></div>
<div class="a" style="left:964px;top:385px;width:30px;height:1px;background:#a8a8a8;"></div>
<div class="a" style="left:964px;top:389px;width:30px;height:1px;background:#a8a8a8;"></div>
<div class="a" style="left:964px;top:405px;width:30px;height:5px;background:#e6e6e6;"></div>
<div class="a" style="left:964px;top:405px;width:30px;height:1px;background:#a8a8a8;"></div>
<div class="a" style="left:964px;top:409px;width:30px;height:1px;background:#a8a8a8;"></div>
<div class="a" style="left:964px;top:425px;width:30px;height:5px;background:#e6e6e6;"></div>
<div class="a" style="left:964px;top:425px;width:30px;height:1px;background:#a8a8a8;"></div>
<div class="a" style="left:964px;top:429px;width:30px;height:1px;background:#a8a8a8;"></div>
<div class="a" style="left:964px;top:445px;width:30px;height:5px;background:#e6e6e6;"></div>
<div class="a" style="left:964px;top:445px;width:30px;height:1px;background:#a8a8a8;"></div>
<div class="a" style="left:964px;top:449px;width:30px;height:1px;background:#a8a8a8;"></div>
<div class="a" style="left:964px;top:465px;width:30px;height:5px;background:#e6e6e6;"></div>
<div class="a" style="left:964px;top:465px;width:30px;height:1px;background:#a8a8a8;"></div>
<div class="a" style="left:964px;top:469px;width:30px;height:1px;background:#a8a8a8;"></div>
<div class="a" style="left:964px;top:485px;width:30px;height:5px;background:#e6e6e6;"></div>
<div class="a" style="left:964px;top:485px;width:30px;height:1px;background:#a8a8a8;"></div>
<div class="a" style="left:964px;top:489px;width:30px;height:1px;background:#a8a8a8;"></div>
<div class="a" style="left:964px;top:505px;width:30px;height:5px;background:#e6e6e6;"></div>
<div class="a" style="left:964px;top:505px;width:30px;height:1px;background:#a8a8a8;"></div>
<div class="a" style="left:964px;top:509px;width:30px;height:1px;background:#a8a8a8;"></div>
<div class="a" style="left:964px;top:525px;width:30px;height:5px;background:#e6e6e6;"></div>
<div class="a" style="left:964px;top:525px;width:30px;height:1px;background:#a8a8a8;"></div>
<div class="a" style="left:964px;top:529px;width:30px;height:1px;background:#a8a8a8;"></div>
<div class="a" style="left:964px;top:545px;width:30px;height:5px;background:#e6e6e6;"></div>
<div class="a" style="left:964px;top:545px;width:30px;height:1px;background:#a8a8a8;"></div>
<div class="a" style="left:964px;top:549px;width:30px;height:1px;background:#a8a8a8;"></div>
<div class="a" style="left:964px;top:565px;width:30px;height:5px;background:#e6e6e6;"></div>
<div class="a" style="left:964px;top:565px;width:30px;height:1px;background:#a8a8a8;"></div>
<div class="a" style="left:964px;top:569px;width:30px;height:1px;background:#a8a8a8;"></div>
<div class="a" style="left:964px;top:585px;width:30px;height:5px;background:#e6e6e6;"></div>
<div class="a" style="left:964px;top:585px;width:30px;height:1px;background:#a8a8a8;"></div>
<div class="a" style="left:964px;top:589px;width:30px;height:1px;background:#a8a8a8;"></div>
<div class="a" style="left:964px;top:605px;width:30px;height:5px;background:#e6e6e6;"></div>
<div class="a" style="left:964px;top:605px;width:30px;height:1px;background:#a8a8a8;"></div>
<div class="a" style="left:964px;top:609px;width:30px;height:1px;background:#a8a8a8;"></div>
<div class="a" style="left:964px;top:625px;width:30px;height:5px;background:#e6e6e6;"></div>
<div class="a" style="left:964px;top:625px;width:30px;height:1px;background:#a8a8a8;"></div>
<div class="a" style="left:964px;top:629px;width:30px;height:1px;background:#a8a8a8;"></div>
<div class="a" style="left:964px;top:645px;width:30px;height:5px;background:#e6e6e6;"></div>
<div class="a" style="left:964px;top:645px;width:30px;height:1px;background:#a8a8a8;"></div>
<div class="a" style="left:964px;top:649px;width:30px;height:1px;background:#a8a8a8;"></div>
<div class="a" style="left:1895px;top:208px;width:20px;height:780px;background:#e6e6e6;"></div>
<div class="a" style="left:1897px;top:210px;width:17px;height:15px;background:#fff;border:1px solid #d0d0d0;box-sizing:border-box;"></div>
<svg class="a" style="left:1901px;top:215px;" width="9" height="5" viewBox="0 0 9 5"><path d="M0 5 L4.5 0 L9 5Z" fill="#606060"/></svg>
<div class="a" style="left:1898px;top:226px;width:16px;height:16px;background:#fff;border:1px solid #c8c8c8;box-sizing:border-box;"></div>
<div class="a" style="left:1897px;top:971px;width:17px;height:16px;background:#fff;border:1px solid #d0d0d0;box-sizing:border-box;"></div>
<svg class="a" style="left:1901px;top:977px;" width="9" height="5" viewBox="0 0 9 5"><path d="M0 0 L4.5 5 L9 0Z" fill="#606060"/></svg>
<div class="a" style="left:962px;top:989px;width:953px;height:28px;background:#e6e6e6;"></div>
<div class="a" style="left:962px;top:989px;width:102px;height:1px;background:#c8c8c8;"></div>
<div class="a" style="left:1101px;top:989px;width:814px;height:1px;background:#c8c8c8;"></div>
<svg class="a" style="left:989px;top:999px;" width="6" height="8" viewBox="0 0 6 8"><path d="M5 0 L0 4 L5 8Z" fill="#c0c0c0"/></svg>
<svg class="a" style="left:1017px;top:999px;" width="6" height="8" viewBox="0 0 6 8"><path d="M0 0 L5 4 L0 8Z" fill="#c0c0c0"/></svg>
<div class="a" style="left:1064px;top:989px;width:38px;height:24px;background:linear-gradient(#ffffff,#ffffc0 70%,#ffff88);"></div>
<div class="a" style="left:1064px;top:1011px;width:38px;height:2px;background:#217346;"></div>
<div class="a" style="left:1063px;top:989px;width:1px;height:24px;background:#c8c8c8;"></div>
<div class="a" style="left:1101px;top:989px;width:1px;height:24px;background:#c8c8c8;"></div>
<div class="a" style="top:994.00px;height:18px;line-height:18px;font-size:13px;color:#217346;font-weight:bold;left:1083px;transform-origin:0 50%;transform:translateX(-50%);">B2</div>
<svg class="a" style="left:1134px;top:994px;" width="18" height="18" viewBox="0 0 18 18"><circle cx="9" cy="9" r="8" stroke="#777" stroke-width="1.2" fill="none"/><path d="M9 4.5 V13.5 M4.5 9 H13.5" stroke="#777" stroke-width="1.6"/></svg>
<svg class="a" style="left:1533px;top:995px;" width="4" height="16" viewBox="0 0 4 16"><circle cx="2" cy="2" r="1" fill="#aaa"/><circle cx="2" cy="7" r="1" fill="#aaa"/><circle cx="2" cy="12" r="1" fill="#aaa"/></svg>
<div class="a" style="left:1552px;top:996px;width:342px;height:15px;background:#d9d9d9;"></div>
<div class="a" style="left:1552px;top:996px;width:15px;height:15px;background:#fff;border:1px solid #c8c8c8;box-sizing:border-box;"></div>
<svg class="a" style="left:1556px;top:999px;" width="6" height="8" viewBox="0 0 6 8"><path d="M5 0 L0 4 L5 8Z" fill="#444"/></svg>
<div class="a" style="left:1567px;top:996px;width:89px;height:15px;background:#fff;border:1px solid #c8c8c8;box-sizing:border-box;"></div>
<div class="a" style="left:1878px;top:996px;width:15px;height:15px;background:#fff;border:1px solid #c8c8c8;box-sizing:border-box;"></div>
<svg class="a" style="left:1883px;top:999px;" width="6" height="8" viewBox="0 0 6 8"><path d="M0 0 L5 4 L0 8Z" fill="#444"/></svg>
<div class="a" style="left:962px;top:1017px;width:953px;height:23px;background:#f3f2f1;"></div>
<div class="a" style="left:962px;top:1017px;width:953px;height:1px;background:#d8d8d8;"></div>
<div class="a" style="top:1021.50px;height:16px;line-height:16px;font-size:12.6px;color:#3a3a3a;left:970px;transform:scaleX(0.8828);transform-origin:0 50%;">Select destination and press ENTER or choose Paste</div>
<div class="a" style="left:1606px;top:1018px;width:39px;height:22px;background:#d6d6d6;"></div>
<svg class="a" style="left:1618px;top:1021px;" width="14" height="14" viewBox="0 0 14 14"><rect x="0.75" y="0.75" width="12.5" height="12.5" fill="none" stroke="#505050" stroke-width="1.5"/><path d="M0 4.75 H14 M0 9.25 H14 M4.75 0 V14 M9.25 0 V14" stroke="#505050" stroke-width="1.5"/></svg>
<svg class="a" style="left:1658px;top:1021px;" width="15" height="14" viewBox="0 0 15 14"><rect x="0.5" y="0.5" width="14" height="13" fill="none" stroke="#505050"/><rect x="3.5" y="2.5" width="8" height="9" fill="none" stroke="#505050"/><path d="M5 5 H10 M5 7 H10 M5 9 H10" stroke="#505050"/></svg>
<svg class="a" style="left:1698px;top:1021px;" width="15" height="14" viewBox="0 0 15 14"><rect x="0.5" y="0.5" width="14" height="13" fill="none" stroke="#505050"/><path d="M5.5 0.5 V6.5 H0.5 M9.5 0.5 V6.5 H5.5" stroke="#505050" fill="none"/></svg>
<div class="a" style="left:1732px;top:1029px;width:7px;height:2px;background:#505050;"></div>
<div class="a" style="left:1745px;top:1029px;width:100px;height:1px;background:#bdbdbd;"></div>
<div class="a" style="left:1793px;top:1023px;width:5px;height:11px;background:#808080;"></div>
<svg class="a" style="left:1850px;top:1024px;" width="9" height="9" viewBox="0 0 9 9"><path d="M4.5 0 V9 M0 4.5 H9" stroke="#505050" stroke-width="1.2"/></svg>
<div class="a" style="top:1021.00px;height:16px;line-height:16px;font-size:12px;color:#444;left:1871px;transform:scaleX(0.8472);transform-origin:0 50%;">100%</div>
<div class="a" style="left:960px;top:34px;width:2px;height:1006px;background:#4c7a5e;"></div>
<div class="a" style="left:960px;top:0px;width:2px;height:34px;background:#1a5a36;"></div>
<div class="a" style="left:962px;top:34px;width:1px;height:1006px;background:#9ab8a4;"></div>
<div class="a" style="left:962px;top:0px;width:1px;height:34px;background:#2a7a4c;"></div>
<div class="a" style="left:1915px;top:0px;width:1px;height:1040px;background:#217346;"></div>
</div>
<div class="a" style="left:0px;top:1040px;width:1920px;height:40px;background:#282a1f;"></div>
<div class="a" style="left:1916px;top:0px;width:4px;height:1040px;background:#2e3a26;"></div>
<svg class="a" style="left:16px;top:1052px;" width="17" height="16" viewBox="0 0 17 16"><path d="M0 2.3 L7 1.3 V7.5 H0Z M8 1.1 L17 0 V7.5 H8Z M0 8.5 H7 V14.7 L0 13.7Z M8 8.5 H17 V16 L8 14.9Z" fill="#fff"/></svg>
<svg class="a" style="left:63px;top:1051px;" width="18" height="18" viewBox="0 0 18 18"><rect x="1.5" y="4.5" width="11" height="9" fill="none" stroke="#fff" stroke-width="1.2"/><path d="M0 1.5 H14 M0 16.5 H14 M16.5 1 V3 M16.5 5 V13 M16.5 15 V17" stroke="#fff" stroke-width="1.2"/></svg>
<svg class="a" style="left:110px;top:1048px;" width="25" height="24" viewBox="0 0 25 24"><path d="M1 9 L12.5 1 L24 9 V23 H1Z" fill="#1565c0"/><path d="M3 9 L12.5 3 L22 9 V16 H3Z" fill="#fff"/><path d="M1 9 L12.5 17 L24 9 V23 H1Z" fill="#29a8f0"/><path d="M1 23 L12.5 14 L24 23Z" fill="#1e90e0"/></svg>
<svg class="a" style="left:160px;top:1049px;" width="22" height="23" viewBox="0 0 22 23"><path d="M6 5 V3 Q6 1 8 1 H14 Q16 1 16 3 V5" stroke="#1e8ad6" stroke-width="1.5" fill="none"/><rect x="1" y="5" width="20" height="17" rx="2" fill="#f4f4f4"/><rect x="7" y="9" width="3.5" height="3.5" fill="#f25022"/><rect x="11.5" y="9" width="3.5" height="3.5" fill="#7fba00"/><rect x="7" y="13.5" width="3.5" height="3.5" fill="#00a4ef"/><rect x="11.5" y="13.5" width="3.5" height="3.5" fill="#ffb900"/></svg>
<svg class="a" style="left:209px;top:1048px;" width="24" height="24" viewBox="0 0 24 24"><path d="M3 14 Q3 3 13 3 Q22 3 22 12 V14 H8 Q9 19 15 19 Q19 19 21 17 V21 Q18 23 13 23 Q3 23 3 14Z M8 10 H17 Q16 6 12.5 6 Q9 6 8 10Z" fill="#1e78d6"/></svg>
<svg class="a" style="left:258px;top:1048px;" width="26" height="26" viewBox="0 0 26 26"><circle cx="12" cy="12" r="11" fill="#db4437"/><path d="M12 12 L2.5 6.5 A11 11 0 0 0 12 23Z" fill="#0f9d58"/><path d="M12 12 L21.5 6.5 A11 11 0 0 1 12 23Z" fill="#f4b400"/><circle cx="12" cy="12" r="5" fill="#fff"/><circle cx="12" cy="12" r="3.8" fill="#4285f4"/><circle cx="18" cy="19" r="6" fill="#8a6a5a"/><text x="15.5" y="22" font-size="8" fill="#fff" font-family="Liberation Sans">D</text></svg>
<div class="a" style="left:250px;top:1077px;width:40px;height:3px;background:#76b9ed;"></div>
<svg class="a" style="left:307px;top:1048px;" width="25" height="25" viewBox="0 0 25 25"><circle cx="12.5" cy="12" r="10" fill="none" stroke="#25d366" stroke-width="2.5"/><path d="M3 23 L5 17 L9 20Z" fill="#25d366"/><path d="M8.5 8 Q9 6.5 10 7 L11 9 L10 10.5 Q11.5 13.5 14 14.5 L15.5 13.5 L17.5 14.5 Q18 15.5 16.5 16.5 Q13 17 10 13.5 Q7.5 10.5 8.5 8Z" fill="#25d366"/></svg>
<svg class="a" style="left:356px;top:1047px;" width="25" height="26" viewBox="0 0 25 26"><circle cx="12.5" cy="14" r="11" fill="#ff5a36"/><circle cx="12.5" cy="14" r="9" fill="#ff8a2a"/><circle cx="12.5" cy="14.5" r="5.5" fill="#6c3fd8"/><path d="M3 9 Q6 2 14 2 Q21 3 23 11 Q19 6 13 7.5 Q8 8.5 7 12 Q5 10 3 9Z" fill="#ffb53a"/></svg>
<svg class="a" style="left:404px;top:1048px;" width="26" height="23" viewBox="0 0 26 23"><path d="M1 3 H10 L12 5 H25 V22 H1Z" fill="#f8d775"/><rect x="1" y="8" width="24" height="14" fill="#ffe38a"/><rect x="8" y="14" width="10" height="6" fill="#1e8ad6"/></svg>
<svg class="a" style="left:454px;top:1048px;" width="24" height="25" viewBox="0 0 24 25"><ellipse cx="12" cy="12.5" rx="11" ry="11.5" fill="#e0162b"/><ellipse cx="12" cy="12.5" rx="4.5" ry="8" fill="#222822"/></svg>
<svg class="a" style="left:503px;top:1048px;" width="26" height="26" viewBox="0 0 26 26"><circle cx="12" cy="12" r="11" fill="#db4437"/><path d="M12 12 L2.5 6.5 A11 11 0 0 0 12 23Z" fill="#0f9d58"/><path d="M12 12 L21.5 6.5 A11 11 0 0 1 12 23Z" fill="#f4b400"/><circle cx="12" cy="12" r="5" fill="#fff"/><circle cx="12" cy="12" r="3.8" fill="#4285f4"/><circle cx="18" cy="19" r="6" fill="#d4b060"/><text x="15.5" y="22" font-size="8" fill="#fff" font-family="Liberation Sans">&#9786;</text></svg>
<svg class="a" style="left:550px;top:1048px;" width="26" height="25" viewBox="0 0 26 25"><path d="M3 10 L15 3 L23 8 L11 16Z" fill="#222" stroke="#777"/><rect x="9" y="9" width="12" height="15" fill="#f0f0f0" transform="rotate(-10 15 16)"/><path d="M11 14 H19 M11 17 H19 M11 20 H17" stroke="#999" transform="rotate(-10 15 16)"/></svg>
<svg class="a" style="left:599px;top:1047px;" width="26" height="26" viewBox="0 0 26 26"><circle cx="17" cy="9" r="4.5" fill="none" stroke="#d8d000" stroke-width="3" stroke-dasharray="2 1.5"/><circle cx="9" cy="18" r="4.5" fill="none" stroke="#d8d000" stroke-width="3" stroke-dasharray="2 1.5"/><circle cx="7" cy="5" r="3" fill="none" stroke="#3ab0e8" stroke-width="1.6"/><circle cx="21" cy="21" r="3" fill="none" stroke="#3ab0e8" stroke-width="1.6"/></svg>
<div class="a" style="left:637px;top:1040px;width:49px;height:40px;background:#45483c;"></div>
<div class="a" style="left:638px;top:1077px;width:47px;height:3px;background:#76b9ed;"></div>
<svg class="a" style="left:648px;top:1047px;" width="28" height="25" viewBox="0 0 28 25"><rect x="8" y="1" width="19" height="23" rx="1.5" fill="#21a366"/><rect x="8" y="1" width="19" height="6" fill="#33c481"/><rect x="8" y="13" width="19" height="5" fill="#107c41"/><rect x="8" y="18" width="19" height="6" fill="#185c37"/><rect x="0" y="5" width="14" height="15" rx="1.5" fill="#107c41"/><path d="M3.5 8.5 L10 16.5 M10 8.5 L3.5 16.5" stroke="#fff" stroke-width="2"/></svg>
<svg class="a" style="left:1657px;top:1050px;" width="17" height="19" viewBox="0 0 17 19"><circle cx="11" cy="5" r="3" fill="none" stroke="#fff" stroke-width="1.2"/><path d="M6 17 Q6 10 11 10 Q16 10 16 14" fill="none" stroke="#fff" stroke-width="1.2"/><circle cx="5" cy="10" r="2.5" fill="none" stroke="#fff" stroke-width="1.2"/><path d="M1 18 Q1 13 5 13 Q8 13 8 16" fill="none" stroke="#fff" stroke-width="1.2"/></svg>
<svg class="a" style="left:1694px;top:1055px;" width="13" height="8" viewBox="0 0 13 8"><path d="M1 7 L6.5 1.5 L12 7" stroke="#fff" stroke-width="1.3" fill="none"/></svg>
<svg class="a" style="left:1716px;top:1052px;" width="17" height="15" viewBox="0 0 17 15"><rect x="1" y="3" width="15" height="9" fill="none" stroke="#fff" stroke-width="1.2"/><path d="M8.5 12 V14.5 M4 14.5 H13" stroke="#fff" stroke-width="1.2"/><rect x="1" y="1" width="4" height="4" fill="#222822" stroke="#fff"/></svg>
<svg class="a" style="left:1740px;top:1052px;" width="17" height="15" viewBox="0 0 17 15"><path d="M1 5 H4 L8 1.5 V13.5 L4 10 H1Z" fill="none" stroke="#fff" stroke-width="1.2"/><path d="M11 4.5 Q13 7.5 11 10.5 M13.5 2.5 Q17 7.5 13.5 12.5" stroke="#fff" stroke-width="1.1" fill="none"/></svg>
<div class="a" style="top:1052.00px;height:16px;line-height:16px;font-size:12.3px;color:#fff;left:1769px;transform:scaleX(0.9442);transform-origin:0 50%;">IND</div>
<div class="a" style="top:1043.00px;height:16px;line-height:16px;font-size:12.3px;color:#fff;left:1819px;transform:scaleX(0.8448);transform-origin:0 50%;">15.25</div>
<div class="a" style="top:1061.00px;height:16px;line-height:16px;font-size:12.3px;color:#fff;left:1802.5px;transform:scaleX(0.9504);transform-origin:0 50%;">31/01/2026</div>
<svg class="a" style="left:1878px;top:1051px;" width="18" height="18" viewBox="0 0 18 18"><path d="M1 1 H17 V13 H12 L9 16 V13 H1Z" fill="#fff"/><path d="M4 4.5 H14 M4 7.5 H14 M4 10.5 H11" stroke="#222822" stroke-width="1.1"/></svg>
</body></html>
